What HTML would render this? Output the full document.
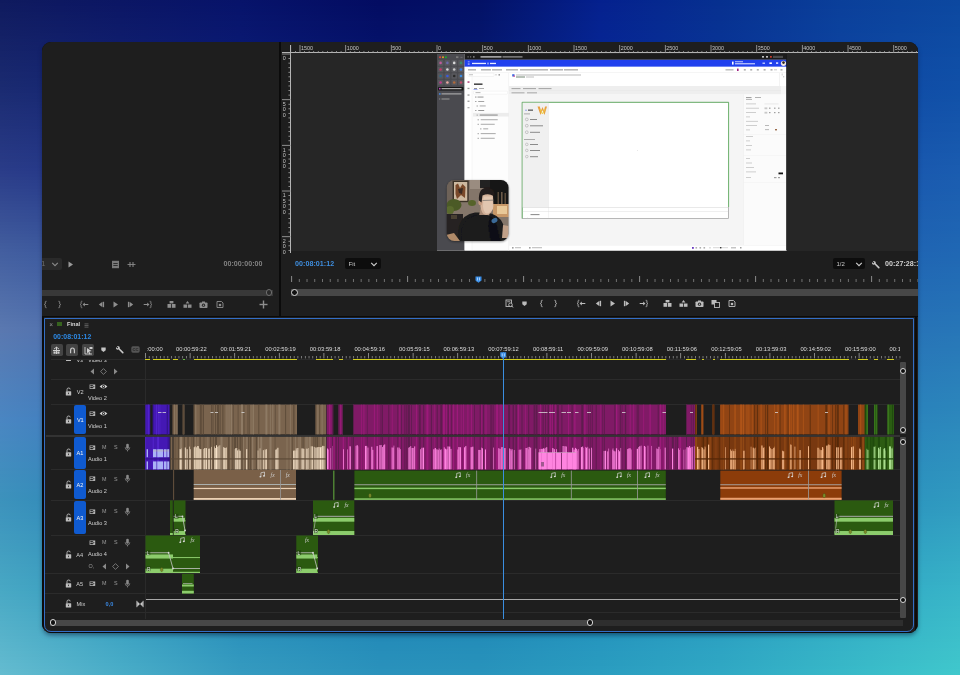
<!DOCTYPE html><html><head><meta charset="utf-8"><style>
*{box-sizing:border-box}
html,body{margin:0;padding:0}
body{width:960px;height:675px;overflow:hidden;position:relative;font-family:"Liberation Sans",sans-serif;
background:#1a4a90;}
#win{position:absolute;left:42px;top:42px;width:876px;height:591px;border-radius:9px;overflow:hidden;background:#0b0b0b;box-shadow:0 3px 5px -1px rgba(0,10,40,.5)}
#in{position:absolute;left:-42px;top:-42px;width:960px;height:675px;will-change:transform}
#in div{position:absolute}
.t{white-space:nowrap;line-height:10px;font-size:8px;color:#c8c8c8}
</style></head><body><div style="position:absolute;left:0;top:0px;width:960px;height:3px;background:linear-gradient(90deg,#0f1a5e 0px,#0d1861 60px,#0b1664 120px,#07136a 240px,#030c62 380px,#031166 480px,#04208e 600px,#063090 720px,#0a3f9a 840px,#0b449d 900px,#0c48a0 960px)"></div>
<div style="position:absolute;left:0;top:3px;width:960px;height:3px;background:linear-gradient(90deg,#101b5f 0px,#0d1862 60px,#0b1665 120px,#07136b 240px,#030c62 380px,#031267 480px,#05218e 600px,#063090 720px,#0a3f9a 840px,#0b449d 900px,#0c48a0 960px)"></div>
<div style="position:absolute;left:0;top:6px;width:960px;height:3px;background:linear-gradient(90deg,#101b60 0px,#0e1963 60px,#0c1765 120px,#07146b 240px,#030d63 380px,#031267 480px,#05218f 600px,#073091 720px,#0a3f9b 840px,#0b449e 900px,#0c49a1 960px)"></div>
<div style="position:absolute;left:0;top:9px;width:960px;height:3px;background:linear-gradient(90deg,#101c60 0px,#0e1963 60px,#0c1766 120px,#07146c 240px,#030d63 380px,#031268 480px,#05218f 600px,#073191 720px,#0b409b 840px,#0c449e 900px,#0c49a1 960px)"></div>
<div style="position:absolute;left:0;top:12px;width:960px;height:3px;background:linear-gradient(90deg,#111d61 0px,#0e1a64 60px,#0c1867 120px,#08146c 240px,#030d64 380px,#031368 480px,#05228f 600px,#073191 720px,#0b409b 840px,#0c459e 900px,#0d49a1 960px)"></div>
<div style="position:absolute;left:0;top:15px;width:960px;height:3px;background:linear-gradient(90deg,#111d61 0px,#0f1b64 60px,#0c1867 120px,#08156d 240px,#030e64 380px,#031369 480px,#052290 600px,#073192 720px,#0b409c 840px,#0c459f 900px,#0d4aa2 960px)"></div>
<div style="position:absolute;left:0;top:18px;width:960px;height:3px;background:linear-gradient(90deg,#121e62 0px,#0f1b65 60px,#0d1968 120px,#08156d 240px,#040e65 380px,#031369 480px,#052290 600px,#073192 720px,#0b419c 840px,#0c459f 900px,#0d4aa2 960px)"></div>
<div style="position:absolute;left:0;top:21px;width:960px;height:3px;background:linear-gradient(90deg,#121e63 0px,#0f1c66 60px,#0d1968 120px,#08166e 240px,#040f66 380px,#03146a 480px,#052390 600px,#073292 720px,#0b419c 840px,#0c459f 900px,#0d4aa2 960px)"></div>
<div style="position:absolute;left:0;top:24px;width:960px;height:3px;background:linear-gradient(90deg,#121f63 0px,#101c66 60px,#0d1a69 120px,#08166e 240px,#040f66 380px,#04146a 480px,#052391 600px,#073293 720px,#0b419d 840px,#0c469f 900px,#0d4aa2 960px)"></div>
<div style="position:absolute;left:0;top:27px;width:960px;height:3px;background:linear-gradient(90deg,#131f64 0px,#101d67 60px,#0e1a69 120px,#09166f 240px,#040f67 380px,#04146b 480px,#052391 600px,#073293 720px,#0b419d 840px,#0c46a0 900px,#0d4ba3 960px)"></div>
<div style="position:absolute;left:0;top:30px;width:960px;height:3px;background:linear-gradient(90deg,#132065 0px,#101d67 60px,#0e1b6a 120px,#09176f 240px,#041067 380px,#04156b 480px,#062491 600px,#083393 720px,#0b429d 840px,#0c46a0 900px,#0d4ba3 960px)"></div>
<div style="position:absolute;left:0;top:33px;width:960px;height:3px;background:linear-gradient(90deg,#132065 0px,#111e68 60px,#0e1b6b 120px,#091770 240px,#041068 380px,#04156c 480px,#062492 600px,#083394 720px,#0c429d 840px,#0d47a0 900px,#0e4ba3 960px)"></div>
<div style="position:absolute;left:0;top:36px;width:960px;height:3px;background:linear-gradient(90deg,#142166 0px,#111e69 60px,#0e1c6b 120px,#091870 240px,#041168 380px,#04166c 480px,#062492 600px,#083394 720px,#0c429e 840px,#0d47a1 900px,#0e4ca4 960px)"></div>
<div style="position:absolute;left:0;top:39px;width:960px;height:3px;background:linear-gradient(90deg,#142267 0px,#111f69 60px,#0f1c6c 120px,#091871 240px,#051169 380px,#04166d 480px,#062592 600px,#083394 720px,#0c429e 840px,#0d47a1 900px,#0e4ca4 960px)"></div>
<div style="position:absolute;left:0;top:42px;width:960px;height:3px;background:linear-gradient(90deg,#152267 0px,#121f6a 60px,#0f1d6c 120px,#0a1971 240px,#051169 380px,#04166d 480px,#062593 600px,#083495 720px,#0c439e 840px,#0d47a1 900px,#0e4ca4 960px)"></div>
<div style="position:absolute;left:0;top:45px;width:960px;height:3px;background:linear-gradient(90deg,#152368 0px,#12206a 60px,#0f1d6d 120px,#0a1972 240px,#05126a 380px,#05176e 480px,#062593 600px,#083495 720px,#0c439f 840px,#0d48a1 900px,#0e4ca4 960px)"></div>
<div style="position:absolute;left:0;top:48px;width:960px;height:3px;background:linear-gradient(90deg,#152368 0px,#12206b 60px,#0f1e6d 120px,#0a1972 240px,#05126a 380px,#05176e 480px,#062693 600px,#083495 720px,#0c439f 840px,#0d48a2 900px,#0e4da5 960px)"></div>
<div style="position:absolute;left:0;top:51px;width:960px;height:3px;background:linear-gradient(90deg,#162469 0px,#13216c 60px,#101e6e 120px,#0a1a73 240px,#05136b 380px,#05176f 480px,#062694 600px,#083596 720px,#0c439f 840px,#0d48a2 900px,#0e4da5 960px)"></div>
<div style="position:absolute;left:0;top:54px;width:960px;height:3px;background:linear-gradient(90deg,#16246a 0px,#13226c 60px,#101f6f 120px,#0a1a73 240px,#05136b 380px,#05186f 480px,#072694 600px,#093596 720px,#0c449f 840px,#0e48a2 900px,#0f4da5 960px)"></div>
<div style="position:absolute;left:0;top:57px;width:960px;height:3px;background:linear-gradient(90deg,#17256a 0px,#13226d 60px,#101f6f 120px,#0b1b74 240px,#06136c 380px,#051870 480px,#072694 600px,#093596 720px,#0d44a0 840px,#0e49a3 900px,#0f4ea6 960px)"></div>
<div style="position:absolute;left:0;top:60px;width:960px;height:3px;background:linear-gradient(90deg,#17266b 0px,#14236d 60px,#112070 120px,#0b1b74 240px,#06146c 380px,#051870 480px,#072795 600px,#093597 720px,#0d44a0 840px,#0e49a3 900px,#0f4ea6 960px)"></div>
<div style="position:absolute;left:0;top:63px;width:960px;height:3px;background:linear-gradient(90deg,#17266c 0px,#14236e 60px,#112070 120px,#0b1b75 240px,#06146d 380px,#051971 480px,#072795 600px,#093697 720px,#0d45a0 840px,#0e49a3 900px,#0f4ea6 960px)"></div>
<div style="position:absolute;left:0;top:66px;width:960px;height:3px;background:linear-gradient(90deg,#18276c 0px,#14246f 60px,#112171 120px,#0b1c75 240px,#06146d 380px,#051971 480px,#072795 600px,#093697 720px,#0d45a1 840px,#0e4aa4 900px,#0f4ea6 960px)"></div>
<div style="position:absolute;left:0;top:69px;width:960px;height:3px;background:linear-gradient(90deg,#18276d 0px,#15246f 60px,#112171 120px,#0b1c76 240px,#06156e 380px,#061972 480px,#072896 600px,#093698 720px,#0d45a1 840px,#0e4aa4 900px,#0f4fa7 960px)"></div>
<div style="position:absolute;left:0;top:72px;width:960px;height:3px;background:linear-gradient(90deg,#19286e 0px,#152570 60px,#122272 120px,#0b1d76 240px,#06156e 380px,#061a72 480px,#072896 600px,#093798 720px,#0d45a1 840px,#0e4aa4 900px,#0f4fa7 960px)"></div>
<div style="position:absolute;left:0;top:75px;width:960px;height:3px;background:linear-gradient(90deg,#19286e 0px,#152570 60px,#122272 120px,#0c1d77 240px,#06166f 380px,#061a72 480px,#072896 600px,#093798 720px,#0d46a2 840px,#0e4aa4 900px,#104fa7 960px)"></div>
<div style="position:absolute;left:0;top:78px;width:960px;height:3px;background:linear-gradient(90deg,#19296f 0px,#162671 60px,#122373 120px,#0c1e77 240px,#07166f 380px,#061b73 480px,#082997 600px,#0a3799 720px,#0e46a2 840px,#0f4ba5 900px,#104fa7 960px)"></div>
<div style="position:absolute;left:0;top:81px;width:960px;height:3px;background:linear-gradient(90deg,#1a2a6f 0px,#162672 60px,#132374 120px,#0c1e78 240px,#071670 380px,#061b73 480px,#082997 600px,#0a3799 720px,#0e46a2 840px,#0f4ba5 900px,#1050a8 960px)"></div>
<div style="position:absolute;left:0;top:84px;width:960px;height:3px;background:linear-gradient(90deg,#1a2a70 0px,#162772 60px,#132474 120px,#0c1e78 240px,#071770 380px,#061b74 480px,#082997 600px,#0a3899 720px,#0e46a2 840px,#0f4ba5 900px,#1050a8 960px)"></div>
<div style="position:absolute;left:0;top:87px;width:960px;height:3px;background:linear-gradient(90deg,#1b2b71 0px,#172773 60px,#132475 120px,#0d1f79 240px,#071771 380px,#071c75 480px,#082a98 600px,#0a389a 720px,#0e47a3 840px,#0f4ca6 900px,#1050a8 960px)"></div>
<div style="position:absolute;left:0;top:90px;width:960px;height:3px;background:linear-gradient(90deg,#1b2b72 0px,#172874 60px,#142576 120px,#0d1f7a 240px,#081872 380px,#071c75 480px,#082a98 600px,#0a389a 720px,#0e47a3 840px,#104ca6 900px,#1151a9 960px)"></div>
<div style="position:absolute;left:0;top:93px;width:960px;height:3px;background:linear-gradient(90deg,#1c2c73 0px,#182975 60px,#142576 120px,#0d207a 240px,#081872 380px,#071d76 480px,#092b98 600px,#0b399b 720px,#0f48a3 840px,#104da6 900px,#1151a9 960px)"></div>
<div style="position:absolute;left:0;top:96px;width:960px;height:3px;background:linear-gradient(90deg,#1c2d74 0px,#182975 60px,#152677 120px,#0e207b 240px,#081973 380px,#081d76 480px,#092b99 600px,#0b399b 720px,#0f48a4 840px,#104da6 900px,#1152a9 960px)"></div>
<div style="position:absolute;left:0;top:99px;width:960px;height:3px;background:linear-gradient(90deg,#1d2d74 0px,#192a76 60px,#152778 120px,#0e217c 240px,#091974 380px,#081e77 480px,#092c99 600px,#0b3a9b 720px,#0f49a4 840px,#114da7 900px,#1252a9 960px)"></div>
<div style="position:absolute;left:0;top:102px;width:960px;height:3px;background:linear-gradient(90deg,#1d2e75 0px,#1a2b77 60px,#162779 120px,#0f217c 240px,#091a74 380px,#081e78 480px,#0a2c9a 600px,#0c3a9c 720px,#1049a4 840px,#114ea7 900px,#1253aa 960px)"></div>
<div style="position:absolute;left:0;top:105px;width:960px;height:3px;background:linear-gradient(90deg,#1e2f76 0px,#1a2b78 60px,#162879 120px,#0f227d 240px,#091a75 380px,#091f78 480px,#0a2c9a 600px,#0c3b9c 720px,#1049a5 840px,#114ea7 900px,#1353aa 960px)"></div>
<div style="position:absolute;left:0;top:108px;width:960px;height:3px;background:linear-gradient(90deg,#1f2f77 0px,#1b2c79 60px,#16287a 120px,#0f227e 240px,#0a1b75 380px,#091f79 480px,#0a2d9b 600px,#0c3b9c 720px,#104aa5 840px,#124fa8 900px,#1353aa 960px)"></div>
<div style="position:absolute;left:0;top:111px;width:960px;height:3px;background:linear-gradient(90deg,#1f3078 0px,#1b2c79 60px,#17297b 120px,#10237e 240px,#0a1b76 380px,#092079 480px,#0b2d9b 600px,#0d3b9d 720px,#114aa5 840px,#124fa8 900px,#1354ab 960px)"></div>
<div style="position:absolute;left:0;top:114px;width:960px;height:3px;background:linear-gradient(90deg,#203079 0px,#1c2d7a 60px,#17297c 120px,#10247f 240px,#0a1c77 380px,#0a207a 480px,#0b2e9b 600px,#0d3c9d 720px,#114ba6 840px,#124fa8 900px,#1454ab 960px)"></div>
<div style="position:absolute;left:0;top:117px;width:960px;height:3px;background:linear-gradient(90deg,#203179 0px,#1c2e7b 60px,#182a7c 120px,#102480 240px,#0b1c77 380px,#0a207b 480px,#0b2e9c 600px,#0d3c9e 720px,#114ba6 840px,#1350a9 900px,#1455ab 960px)"></div>
<div style="position:absolute;left:0;top:120px;width:960px;height:3px;background:linear-gradient(90deg,#21327a 0px,#1d2e7c 60px,#182b7d 120px,#112580 240px,#0b1d78 380px,#0a217b 480px,#0c2f9c 600px,#0e3d9e 720px,#124ba6 840px,#1350a9 900px,#1455ab 960px)"></div>
<div style="position:absolute;left:0;top:123px;width:960px;height:3px;background:linear-gradient(90deg,#21327b 0px,#1d2f7d 60px,#192b7e 120px,#112581 240px,#0b1d79 380px,#0b217c 480px,#0c2f9d 600px,#0e3d9e 720px,#124ca7 840px,#1351a9 900px,#1556ac 960px)"></div>
<div style="position:absolute;left:0;top:126px;width:960px;height:3px;background:linear-gradient(90deg,#22337c 0px,#1e2f7d 60px,#192c7f 120px,#122682 240px,#0c1e79 380px,#0b227c 480px,#0c2f9d 600px,#0e3d9f 720px,#124ca7 840px,#1451a9 900px,#1556ac 960px)"></div>
<div style="position:absolute;left:0;top:129px;width:960px;height:3px;background:linear-gradient(90deg,#23347d 0px,#1e307e 60px,#1a2c80 120px,#122682 240px,#0c1e7a 380px,#0b227d 480px,#0d309d 600px,#0f3e9f 720px,#134da7 840px,#1451aa 900px,#1556ac 960px)"></div>
<div style="position:absolute;left:0;top:132px;width:960px;height:3px;background:linear-gradient(90deg,#23347e 0px,#1f317f 60px,#1a2d80 120px,#122783 240px,#0c1f7b 380px,#0b237e 480px,#0d309e 600px,#0f3e9f 720px,#134da8 840px,#1452aa 900px,#1657ad 960px)"></div>
<div style="position:absolute;left:0;top:135px;width:960px;height:3px;background:linear-gradient(90deg,#24357f 0px,#1f3180 60px,#1b2e81 120px,#132783 240px,#0d1f7b 380px,#0c237e 480px,#0d319e 600px,#0f3fa0 720px,#134da8 840px,#1552aa 900px,#1657ad 960px)"></div>
<div style="position:absolute;left:0;top:138px;width:960px;height:3px;background:linear-gradient(90deg,#24367f 0px,#203281 60px,#1b2e82 120px,#132884 240px,#0d207c 380px,#0c247f 480px,#0d319f 600px,#103fa0 720px,#144ea8 840px,#1553ab 900px,#1658ad 960px)"></div>
<div style="position:absolute;left:0;top:141px;width:960px;height:3px;background:linear-gradient(90deg,#253680 0px,#203281 60px,#1c2f83 120px,#132885 240px,#0d207d 380px,#0c247f 480px,#0e329f 600px,#103fa1 720px,#144ea9 840px,#1553ab 900px,#1758ad 960px)"></div>
<div style="position:absolute;left:0;top:144px;width:960px;height:3px;background:linear-gradient(90deg,#253781 0px,#213382 60px,#1c2f83 120px,#142985 240px,#0e217d 380px,#0d2580 480px,#0e329f 600px,#1040a1 720px,#144fa9 840px,#1654ab 900px,#1759ae 960px)"></div>
<div style="position:absolute;left:0;top:147px;width:960px;height:3px;background:linear-gradient(90deg,#263782 0px,#213483 60px,#1c3084 120px,#142986 240px,#0e217e 380px,#0d2580 480px,#0e32a0 600px,#1140a1 720px,#154fa9 840px,#1654ac 900px,#1759ae 960px)"></div>
<div style="position:absolute;left:0;top:150px;width:960px;height:3px;background:linear-gradient(90deg,#273883 0px,#223484 60px,#1d3185 120px,#152a87 240px,#0e227e 380px,#0d2681 480px,#0f33a0 600px,#1141a2 720px,#154faa 840px,#1654ac 900px,#1859ae 960px)"></div>
<div style="position:absolute;left:0;top:153px;width:960px;height:3px;background:linear-gradient(90deg,#273984 0px,#223585 60px,#1d3186 120px,#152a87 240px,#0f227f 380px,#0e2682 480px,#0f33a1 600px,#1141a2 720px,#1650aa 840px,#1755ac 900px,#185aaf 960px)"></div>
<div style="position:absolute;left:0;top:156px;width:960px;height:3px;background:linear-gradient(90deg,#283984 0px,#233685 60px,#1e3286 120px,#152b88 240px,#0f2380 380px,#0e2782 480px,#0f34a1 600px,#1242a3 720px,#1650aa 840px,#1755ad 900px,#195aaf 960px)"></div>
<div style="position:absolute;left:0;top:159px;width:960px;height:3px;background:linear-gradient(90deg,#283a85 0px,#233686 60px,#1e3287 120px,#162b89 240px,#0f2380 380px,#0e2783 480px,#1034a1 600px,#1242a3 720px,#1651ab 840px,#1856ad 900px,#195baf 960px)"></div>
<div style="position:absolute;left:0;top:162px;width:960px;height:3px;background:linear-gradient(90deg,#293b86 0px,#243787 60px,#1f3388 120px,#162c89 240px,#102481 380px,#0f2783 480px,#1035a2 600px,#1242a3 720px,#1751ab 840px,#1856ad 900px,#195baf 960px)"></div>
<div style="position:absolute;left:0;top:165px;width:960px;height:3px;background:linear-gradient(90deg,#293b87 0px,#243788 60px,#1f3389 120px,#172c8a 240px,#102482 380px,#0f2884 480px,#1035a2 600px,#1343a4 720px,#1751ab 840px,#1856ad 900px,#1a5cb0 960px)"></div>
<div style="position:absolute;left:0;top:168px;width:960px;height:3px;background:linear-gradient(90deg,#2a3c88 0px,#253889 60px,#203489 120px,#172d8b 240px,#102582 380px,#0f2885 480px,#1136a3 600px,#1343a4 720px,#1752ab 840px,#1957ae 900px,#1a5cb0 960px)"></div>
<div style="position:absolute;left:0;top:171px;width:960px;height:3px;background:linear-gradient(90deg,#2b3d89 0px,#263989 60px,#20358a 120px,#172e8b 240px,#112583 380px,#102985 480px,#1136a3 600px,#1344a4 720px,#1752ac 840px,#1957ae 900px,#1a5cb0 960px)"></div>
<div style="position:absolute;left:0;top:174px;width:960px;height:3px;background:linear-gradient(90deg,#2c3e8a 0px,#263a8a 60px,#21368b 120px,#182f8c 240px,#112683 380px,#102a86 480px,#1137a3 600px,#1444a5 720px,#1853ac 840px,#1958ae 900px,#1a5db0 960px)"></div>
<div style="position:absolute;left:0;top:177px;width:960px;height:3px;background:linear-gradient(90deg,#2d408a 0px,#273b8b 60px,#22378c 120px,#19308d 240px,#122784 380px,#112b86 480px,#1238a4 600px,#1445a5 720px,#1853ac 840px,#1958ae 900px,#1b5db0 960px)"></div>
<div style="position:absolute;left:0;top:180px;width:960px;height:3px;background:linear-gradient(90deg,#2e418b 0px,#283d8c 60px,#23388c 120px,#19308d 240px,#122885 380px,#112b87 480px,#1238a4 600px,#1445a5 720px,#1854ac 840px,#1a59ae 900px,#1b5eb1 960px)"></div>
<div style="position:absolute;left:0;top:183px;width:960px;height:3px;background:linear-gradient(90deg,#2e428c 0px,#293e8d 60px,#233a8d 120px,#1a318e 240px,#132985 380px,#122c87 480px,#1239a4 600px,#1446a5 720px,#1854ad 840px,#1a59af 900px,#1b5eb1 960px)"></div>
<div style="position:absolute;left:0;top:186px;width:960px;height:3px;background:linear-gradient(90deg,#2f438d 0px,#2a3f8d 60px,#243b8e 120px,#1a328e 240px,#132a86 380px,#122d88 480px,#133aa4 600px,#1547a6 720px,#1955ad 840px,#1a5aaf 900px,#1b5eb1 960px)"></div>
<div style="position:absolute;left:0;top:189px;width:960px;height:3px;background:linear-gradient(90deg,#30458e 0px,#2b408e 60px,#253c8e 120px,#1b338f 240px,#142b86 380px,#122e88 480px,#133aa5 600px,#1547a6 720px,#1955ad 840px,#1a5aaf 900px,#1b5fb1 960px)"></div>
<div style="position:absolute;left:0;top:192px;width:960px;height:3px;background:linear-gradient(90deg,#31468f 0px,#2b418f 60px,#263d8f 120px,#1c3490 240px,#142c87 380px,#132f89 480px,#143ba5 600px,#1548a6 720px,#1956ad 840px,#1a5aaf 900px,#1c5fb1 960px)"></div>
<div style="position:absolute;left:0;top:195px;width:960px;height:3px;background:linear-gradient(90deg,#32478f 0px,#2c4390 60px,#263e90 120px,#1c3590 240px,#152c88 380px,#132f89 480px,#143ca5 600px,#1648a7 720px,#1956ad 840px,#1b5baf 900px,#1c60b1 960px)"></div>
<div style="position:absolute;left:0;top:198px;width:960px;height:3px;background:linear-gradient(90deg,#334890 0px,#2d4490 60px,#273f91 120px,#1d3691 240px,#152d88 380px,#14308a 480px,#143ca6 600px,#1649a7 720px,#1a57ae 840px,#1b5baf 900px,#1c60b1 960px)"></div>
<div style="position:absolute;left:0;top:201px;width:960px;height:3px;background:linear-gradient(90deg,#344a91 0px,#2e4591 60px,#284091 120px,#1e3792 240px,#162e89 380px,#14318a 480px,#153da6 600px,#1649a7 720px,#1a57ae 840px,#1b5cb0 900px,#1c61b2 960px)"></div>
<div style="position:absolute;left:0;top:204px;width:960px;height:3px;background:linear-gradient(90deg,#354b92 0px,#2f4692 60px,#294292 120px,#1e3892 240px,#162f89 380px,#15328b 480px,#153ea6 600px,#174aa7 720px,#1a58ae 840px,#1b5cb0 900px,#1d61b2 960px)"></div>
<div style="position:absolute;left:0;top:207px;width:960px;height:3px;background:linear-gradient(90deg,#364c93 0px,#304893 60px,#294393 120px,#1f3993 240px,#17308a 380px,#15338c 480px,#153ea7 600px,#174ba8 720px,#1b58ae 840px,#1c5db0 900px,#1d61b2 960px)"></div>
<div style="position:absolute;left:0;top:210px;width:960px;height:3px;background:linear-gradient(90deg,#374e94 0px,#304994 60px,#2a4494 120px,#1f3a93 240px,#17318a 380px,#15338c 480px,#163fa7 600px,#174ba8 720px,#1b59ae 840px,#1c5db0 900px,#1d62b2 960px)"></div>
<div style="position:absolute;left:0;top:213px;width:960px;height:3px;background:linear-gradient(90deg,#384f95 0px,#314a94 60px,#2b4594 120px,#203b94 240px,#18328b 380px,#16348d 480px,#1640a7 600px,#184ca8 720px,#1b59af 840px,#1c5eb0 900px,#1d62b2 960px)"></div>
<div style="position:absolute;left:0;top:216px;width:960px;height:3px;background:linear-gradient(90deg,#395095 0px,#324b95 60px,#2c4695 120px,#213c95 240px,#18338c 380px,#16358d 480px,#1640a8 600px,#184ca8 720px,#1b59af 840px,#1c5eb0 900px,#1d63b2 960px)"></div>
<div style="position:absolute;left:0;top:219px;width:960px;height:3px;background:linear-gradient(90deg,#395196 0px,#334c96 60px,#2c4796 120px,#213d95 240px,#19338c 380px,#17368e 480px,#1741a8 600px,#184da9 720px,#1c5aaf 840px,#1d5fb1 900px,#1e63b2 960px)"></div>
<div style="position:absolute;left:0;top:222px;width:960px;height:3px;background:linear-gradient(90deg,#3a5397 0px,#344e97 60px,#2d4897 120px,#223e96 240px,#19348d 380px,#17368e 480px,#1742a8 600px,#184da9 720px,#1c5aaf 840px,#1d5fb1 900px,#1e64b3 960px)"></div>
<div style="position:absolute;left:0;top:225px;width:960px;height:3px;background:linear-gradient(90deg,#3b5498 0px,#354f98 60px,#2e4a97 120px,#223f97 240px,#1a358d 380px,#18378f 480px,#1742a9 600px,#194ea9 720px,#1c5baf 840px,#1d5fb1 900px,#1e64b3 960px)"></div>
<div style="position:absolute;left:0;top:228px;width:960px;height:3px;background:linear-gradient(90deg,#3c5599 0px,#355098 60px,#2f4b98 120px,#234097 240px,#1a368e 380px,#18388f 480px,#1843a9 600px,#194faa 720px,#1c5bb0 840px,#1d60b1 900px,#1e64b3 960px)"></div>
<div style="position:absolute;left:0;top:231px;width:960px;height:3px;background:linear-gradient(90deg,#3d569a 0px,#365199 60px,#2f4c99 120px,#244198 240px,#1b378f 380px,#183990 480px,#1844a9 600px,#194faa 720px,#1d5cb0 840px,#1d60b1 900px,#1e65b3 960px)"></div>
<div style="position:absolute;left:0;top:234px;width:960px;height:3px;background:linear-gradient(90deg,#3e589a 0px,#37529a 60px,#304d99 120px,#244298 240px,#1b388f 380px,#193a90 480px,#1944aa 600px,#1a50aa 720px,#1d5cb0 840px,#1e61b1 900px,#1f65b3 960px)"></div>
<div style="position:absolute;left:0;top:237px;width:960px;height:3px;background:linear-gradient(90deg,#3f599b 0px,#38549b 60px,#314e9a 120px,#254399 240px,#1c3990 380px,#193a91 480px,#1945aa 600px,#1a50aa 720px,#1d5db0 840px,#1e61b2 900px,#1f66b3 960px)"></div>
<div style="position:absolute;left:0;top:240px;width:960px;height:3px;background:linear-gradient(90deg,#405a9c 0px,#39559c 60px,#324f9b 120px,#25449a 240px,#1c3a90 380px,#1a3b91 480px,#1946aa 600px,#1a51ab 720px,#1d5db0 840px,#1e62b2 900px,#1f66b3 960px)"></div>
<div style="position:absolute;left:0;top:243px;width:960px;height:3px;background:linear-gradient(90deg,#415c9d 0px,#3a569c 60px,#32509c 120px,#26459a 240px,#1d3a91 380px,#1a3c92 480px,#1a46aa 600px,#1b51ab 720px,#1e5eb1 840px,#1e62b2 900px,#1f67b4 960px)"></div>
<div style="position:absolute;left:0;top:246px;width:960px;height:3px;background:linear-gradient(90deg,#425d9e 0px,#3a579d 60px,#33529c 120px,#27469b 240px,#1d3b92 380px,#1b3d92 480px,#1a47ab 600px,#1b52ab 720px,#1e5eb1 840px,#1f63b2 900px,#1f67b4 960px)"></div>
<div style="position:absolute;left:0;top:249px;width:960px;height:3px;background:linear-gradient(90deg,#435e9f 0px,#3b589e 60px,#34539d 120px,#27479c 240px,#1e3c92 380px,#1b3e93 480px,#1a48ab 600px,#1b52ab 720px,#1e5fb1 840px,#1f63b2 900px,#2067b4 960px)"></div>
<div style="position:absolute;left:0;top:252px;width:960px;height:3px;background:linear-gradient(90deg,#445fa0 0px,#3c5a9f 60px,#35549e 120px,#28489c 240px,#1e3d93 380px,#1b3e93 480px,#1b48ab 600px,#1c53ac 720px,#1e5fb1 840px,#1f64b3 900px,#2068b4 960px)"></div>
<div style="position:absolute;left:0;top:255px;width:960px;height:3px;background:linear-gradient(90deg,#4460a0 0px,#3d5b9f 60px,#35559f 120px,#28499d 240px,#1f3e93 380px,#1c3f94 480px,#1b49ac 600px,#1c54ac 720px,#1f60b1 840px,#1f64b3 900px,#2068b4 960px)"></div>
<div style="position:absolute;left:0;top:258px;width:960px;height:3px;background:linear-gradient(90deg,#4561a1 0px,#3e5ca0 60px,#36569f 120px,#294a9d 240px,#1f3f94 380px,#1c4094 480px,#1c4aac 600px,#1c54ac 720px,#1f60b1 840px,#2065b3 900px,#2069b4 960px)"></div>
<div style="position:absolute;left:0;top:261px;width:960px;height:3px;background:linear-gradient(90deg,#4662a2 0px,#3e5da1 60px,#3757a0 120px,#2a4b9e 240px,#203f94 380px,#1d4095 480px,#1c4aac 600px,#1d55ac 720px,#1f61b2 840px,#2065b3 900px,#2169b4 960px)"></div>
<div style="position:absolute;left:0;top:264px;width:960px;height:3px;background:linear-gradient(90deg,#4763a2 0px,#3f5da1 60px,#3758a0 120px,#2a4b9e 240px,#204095 380px,#1d4195 480px,#1c4bac 600px,#1d55ad 720px,#2062b2 840px,#2066b3 900px,#216ab4 960px)"></div>
<div style="position:absolute;left:0;top:267px;width:960px;height:3px;background:linear-gradient(90deg,#4864a3 0px,#405ea2 60px,#3858a1 120px,#2b4c9f 240px,#214195 380px,#1e4296 480px,#1d4cad 600px,#1d56ad 720px,#2062b2 840px,#2166b3 900px,#216bb5 960px)"></div>
<div style="position:absolute;left:0;top:270px;width:960px;height:3px;background:linear-gradient(90deg,#4965a4 0px,#415fa2 60px,#3959a1 120px,#2b4d9f 240px,#214296 380px,#1e4396 480px,#1d4cad 600px,#1e57ad 720px,#2063b2 840px,#2167b3 900px,#226bb5 960px)"></div>
<div style="position:absolute;left:0;top:273px;width:960px;height:3px;background:linear-gradient(90deg,#4a66a4 0px,#4260a3 60px,#3a5aa2 120px,#2c4ea0 240px,#224296 380px,#1f4396 480px,#1d4dad 600px,#1e57ad 720px,#2163b2 840px,#2167b4 900px,#226cb5 960px)"></div>
<div style="position:absolute;left:0;top:276px;width:960px;height:3px;background:linear-gradient(90deg,#4b67a5 0px,#4261a4 60px,#3a5ba2 120px,#2d4ea0 240px,#224396 380px,#1f4497 480px,#1e4dad 600px,#1e58ae 720px,#2164b3 840px,#2168b4 900px,#226cb5 960px)"></div>
<div style="position:absolute;left:0;top:279px;width:960px;height:3px;background:linear-gradient(90deg,#4b68a5 0px,#4362a4 60px,#3b5ca3 120px,#2d4fa1 240px,#234497 380px,#1f4597 480px,#1e4eae 600px,#1f58ae 720px,#2164b3 840px,#2269b4 900px,#226db5 960px)"></div>
<div style="position:absolute;left:0;top:282px;width:960px;height:3px;background:linear-gradient(90deg,#4c69a6 0px,#4463a5 60px,#3c5da4 120px,#2e50a1 240px,#234597 380px,#204598 480px,#1f4fae 600px,#1f59ae 720px,#2165b3 840px,#2269b4 900px,#236db5 960px)"></div>
<div style="position:absolute;left:0;top:285px;width:960px;height:3px;background:linear-gradient(90deg,#4d6aa7 0px,#4564a5 60px,#3d5ea4 120px,#2e51a1 240px,#244598 380px,#204698 480px,#1f4fae 600px,#1f5aae 720px,#2265b3 840px,#226ab4 900px,#236eb5 960px)"></div>
<div style="position:absolute;left:0;top:288px;width:960px;height:3px;background:linear-gradient(90deg,#4e6ba7 0px,#4665a6 60px,#3d5fa5 120px,#2f52a2 240px,#244698 380px,#214798 480px,#1f50ae 600px,#205aae 720px,#2266b3 840px,#236ab4 900px,#236eb6 960px)"></div>
<div style="position:absolute;left:0;top:291px;width:960px;height:3px;background:linear-gradient(90deg,#4f6ca8 0px,#4766a7 60px,#3e5fa5 120px,#3052a2 240px,#254799 380px,#214799 480px,#2051af 600px,#205baf 720px,#2267b3 840px,#236bb5 900px,#246fb6 960px)"></div>
<div style="position:absolute;left:0;top:294px;width:960px;height:3px;background:linear-gradient(90deg,#506da9 0px,#4767a7 60px,#3f60a6 120px,#3053a3 240px,#254899 380px,#224899 480px,#2051af 600px,#205baf 720px,#2367b4 840px,#236bb5 900px,#2470b6 960px)"></div>
<div style="position:absolute;left:0;top:297px;width:960px;height:3px;background:linear-gradient(90deg,#516ea9 0px,#4868a8 60px,#3f61a6 120px,#3154a3 240px,#26489a 380px,#22499a 480px,#2152af 600px,#215caf 720px,#2368b4 840px,#246cb5 900px,#2470b6 960px)"></div>
<div style="position:absolute;left:0;top:300px;width:960px;height:3px;background:linear-gradient(90deg,#526faa 0px,#4969a8 60px,#4062a7 120px,#3155a4 240px,#26499a 380px,#234a9a 480px,#2153af 600px,#215daf 720px,#2368b4 840px,#246db5 900px,#2471b6 960px)"></div>
<div style="position:absolute;left:0;top:303px;width:960px;height:3px;background:linear-gradient(90deg,#5370ab 0px,#4a69a9 60px,#4163a7 120px,#3256a4 240px,#274a9b 380px,#234a9b 480px,#2153b0 600px,#225db0 720px,#2469b4 840px,#246db5 900px,#2571b6 960px)"></div>
<div style="position:absolute;left:0;top:306px;width:960px;height:3px;background:linear-gradient(90deg,#5371ab 0px,#4b6aaa 60px,#4264a8 120px,#3356a5 240px,#274b9b 380px,#244b9b 480px,#2254b0 600px,#225eb0 720px,#2469b4 840px,#246eb5 900px,#2572b6 960px)"></div>
<div style="position:absolute;left:0;top:309px;width:960px;height:3px;background:linear-gradient(90deg,#5472ac 0px,#4b6baa 60px,#4265a9 120px,#3357a5 240px,#284b9c 380px,#244c9b 480px,#2255b0 600px,#225eb0 720px,#246ab4 840px,#256eb6 900px,#2572b7 960px)"></div>
<div style="position:absolute;left:0;top:312px;width:960px;height:3px;background:linear-gradient(90deg,#5573ac 0px,#4c6cab 60px,#4366a9 120px,#3458a6 240px,#284c9c 380px,#244c9c 480px,#2355b0 600px,#235fb0 720px,#256bb5 840px,#256fb6 900px,#2673b7 960px)"></div>
<div style="position:absolute;left:0;top:315px;width:960px;height:3px;background:linear-gradient(90deg,#5674ad 0px,#4d6dab 60px,#4467aa 120px,#3459a6 240px,#294d9c 380px,#254d9c 480px,#2356b0 600px,#2360b0 720px,#256bb5 840px,#256fb6 900px,#2674b7 960px)"></div>
<div style="position:absolute;left:0;top:318px;width:960px;height:3px;background:linear-gradient(90deg,#5775ae 0px,#4e6eac 60px,#4567aa 120px,#3559a7 240px,#294e9d 380px,#254e9d 480px,#2356b1 600px,#2360b1 720px,#256cb5 840px,#2670b6 900px,#2674b7 960px)"></div>
<div style="position:absolute;left:0;top:321px;width:960px;height:3px;background:linear-gradient(90deg,#5876ae 0px,#4f6fad 60px,#4568ab 120px,#365aa7 240px,#2a4e9d 380px,#264e9d 480px,#2457b1 600px,#2461b1 720px,#266cb5 840px,#2671b6 900px,#2675b7 960px)"></div>
<div style="position:absolute;left:0;top:324px;width:960px;height:3px;background:linear-gradient(90deg,#5977af 0px,#4f70ad 60px,#4669ab 120px,#365ba8 240px,#2a4f9e 380px,#264f9e 480px,#2458b1 600px,#2461b1 720px,#266db5 840px,#2671b6 900px,#2775b7 960px)"></div>
<div style="position:absolute;left:0;top:327px;width:960px;height:3px;background:linear-gradient(90deg,#5a78b0 0px,#5071ae 60px,#476aac 120px,#375ca8 240px,#2b509e 380px,#27509e 480px,#2558b1 600px,#2462b1 720px,#266db5 840px,#2772b6 900px,#2776b7 960px)"></div>
<div style="position:absolute;left:0;top:330px;width:960px;height:3px;background:linear-gradient(90deg,#5a78b0 0px,#5072ae 60px,#476bac 120px,#375ca8 240px,#2b509f 380px,#27509e 480px,#2559b2 600px,#2462b2 720px,#266eb6 840px,#2772b7 900px,#2776b8 960px)"></div>
<div style="position:absolute;left:0;top:333px;width:960px;height:3px;background:linear-gradient(90deg,#5979b1 0px,#5072af 60px,#466bad 120px,#365da9 240px,#2b519f 380px,#26519f 480px,#2459b2 600px,#2463b2 720px,#266eb6 840px,#2773b7 900px,#2777b8 960px)"></div>
<div style="position:absolute;left:0;top:336px;width:960px;height:3px;background:linear-gradient(90deg,#5979b2 0px,#4f72af 60px,#466cad 120px,#365da9 240px,#2a51a0 380px,#26519f 480px,#245ab2 600px,#2463b2 720px,#276fb6 840px,#2773b7 900px,#2878b8 960px)"></div>
<div style="position:absolute;left:0;top:339px;width:960px;height:3px;background:linear-gradient(90deg,#587ab2 0px,#4f73b0 60px,#456cae 120px,#355eaa 240px,#2a52a0 380px,#2652a0 480px,#245ab2 600px,#2464b2 720px,#276fb6 840px,#2774b7 900px,#2878b8 960px)"></div>
<div style="position:absolute;left:0;top:342px;width:960px;height:3px;background:linear-gradient(90deg,#587ab3 0px,#4e73b1 60px,#456dae 120px,#355eaa 240px,#2a52a0 380px,#2652a0 480px,#245bb3 600px,#2464b2 720px,#2770b6 840px,#2774b7 900px,#2879b8 960px)"></div>
<div style="position:absolute;left:0;top:345px;width:960px;height:3px;background:linear-gradient(90deg,#577bb3 0px,#4e74b1 60px,#446daf 120px,#345fab 240px,#2953a1 380px,#2553a0 480px,#245bb3 600px,#2465b3 720px,#2771b6 840px,#2875b7 900px,#2879b8 960px)"></div>
<div style="position:absolute;left:0;top:348px;width:960px;height:3px;background:linear-gradient(90deg,#577bb4 0px,#4d74b2 60px,#446eb0 120px,#345fab 240px,#2953a1 380px,#2553a1 480px,#245cb3 600px,#2465b3 720px,#2771b7 840px,#2876b8 900px,#287ab8 960px)"></div>
<div style="position:absolute;left:0;top:351px;width:960px;height:3px;background:linear-gradient(90deg,#567cb4 0px,#4d75b2 60px,#436eb0 120px,#335fac 240px,#2854a2 380px,#2554a1 480px,#235cb3 600px,#2466b3 720px,#2772b7 840px,#2876b8 900px,#297ab9 960px)"></div>
<div style="position:absolute;left:0;top:354px;width:960px;height:3px;background:linear-gradient(90deg,#557cb5 0px,#4c75b3 60px,#436eb1 120px,#3360ac 240px,#2854a2 380px,#2454a2 480px,#235db3 600px,#2466b3 720px,#2772b7 840px,#2877b8 900px,#297bb9 960px)"></div>
<div style="position:absolute;left:0;top:357px;width:960px;height:3px;background:linear-gradient(90deg,#557cb6 0px,#4c76b3 60px,#426fb1 120px,#3260ac 240px,#2754a3 380px,#2455a2 480px,#235db4 600px,#2467b4 720px,#2773b7 840px,#2877b8 900px,#297cb9 960px)"></div>
<div style="position:absolute;left:0;top:360px;width:960px;height:3px;background:linear-gradient(90deg,#547db6 0px,#4b76b4 60px,#426fb2 120px,#3261ad 240px,#2755a3 380px,#2455a2 480px,#235eb4 600px,#2467b4 720px,#2773b7 840px,#2878b8 900px,#297cb9 960px)"></div>
<div style="position:absolute;left:0;top:363px;width:960px;height:3px;background:linear-gradient(90deg,#547db7 0px,#4a77b5 60px,#4170b2 120px,#3261ad 240px,#2755a4 380px,#2356a3 480px,#225eb4 600px,#2468b4 720px,#2774b8 840px,#2878b8 900px,#297db9 960px)"></div>
<div style="position:absolute;left:0;top:366px;width:960px;height:3px;background:linear-gradient(90deg,#537eb7 0px,#4a77b5 60px,#4170b3 120px,#3161ae 240px,#2656a4 380px,#2356a3 480px,#225fb4 600px,#2468b4 720px,#2774b8 840px,#2879b9 900px,#297eb9 960px)"></div>
<div style="position:absolute;left:0;top:369px;width:960px;height:3px;background:linear-gradient(90deg,#537eb8 0px,#4978b6 60px,#4071b3 120px,#3162ae 240px,#2656a4 380px,#2357a4 480px,#225fb5 600px,#2369b4 720px,#2775b8 840px,#2879b9 900px,#2a7eba 960px)"></div>
<div style="position:absolute;left:0;top:372px;width:960px;height:3px;background:linear-gradient(90deg,#527fb9 0px,#4978b6 60px,#3f71b4 120px,#3062af 240px,#2557a5 380px,#2257a4 480px,#2260b5 600px,#2369b5 720px,#2775b8 840px,#287ab9 900px,#2a7fba 960px)"></div>
<div style="position:absolute;left:0;top:375px;width:960px;height:3px;background:linear-gradient(90deg,#527fb9 0px,#4878b7 60px,#3f72b4 120px,#3063af 240px,#2557a5 380px,#2257a4 480px,#2260b5 600px,#236ab5 720px,#2776b8 840px,#287bb9 900px,#2a7fba 960px)"></div>
<div style="position:absolute;left:0;top:378px;width:960px;height:3px;background:linear-gradient(90deg,#5180ba 0px,#4879b7 60px,#3e72b5 120px,#2f63b0 240px,#2558a6 380px,#2258a5 480px,#2161b5 600px,#236ab5 720px,#2776b8 840px,#287bb9 900px,#2a80ba 960px)"></div>
<div style="position:absolute;left:0;top:381px;width:960px;height:3px;background:linear-gradient(90deg,#5180bb 0px,#4779b8 60px,#3e73b5 120px,#2f64b0 240px,#2458a6 380px,#2158a5 480px,#2161b6 600px,#236bb5 720px,#2777b9 840px,#297cb9 900px,#2a80ba 960px)"></div>
<div style="position:absolute;left:0;top:384px;width:960px;height:3px;background:linear-gradient(90deg,#5081bb 0px,#477ab8 60px,#3d73b6 120px,#2e64b0 240px,#2459a7 380px,#2159a6 480px,#2162b6 600px,#236bb6 720px,#2778b9 840px,#297cba 900px,#2a81ba 960px)"></div>
<div style="position:absolute;left:0;top:387px;width:960px;height:3px;background:linear-gradient(90deg,#5081bc 0px,#467ab9 60px,#3d74b6 120px,#2e64b1 240px,#2359a7 380px,#2159a6 480px,#2162b6 600px,#236cb6 720px,#2778b9 840px,#297dba 900px,#2a82ba 960px)"></div>
<div style="position:absolute;left:0;top:390px;width:960px;height:3px;background:linear-gradient(90deg,#4f82bc 0px,#467bba 60px,#3c74b7 120px,#2d65b1 240px,#2359a8 380px,#205aa6 480px,#2063b6 600px,#236cb6 720px,#2779b9 840px,#297dba 900px,#2b82bb 960px)"></div>
<div style="position:absolute;left:0;top:393px;width:960px;height:3px;background:linear-gradient(90deg,#4f82bd 0px,#457bba 60px,#3c74b7 120px,#2d65b2 240px,#235aa8 380px,#205aa7 480px,#2063b6 600px,#236db6 720px,#2779b9 840px,#297eba 900px,#2b83bb 960px)"></div>
<div style="position:absolute;left:0;top:396px;width:960px;height:3px;background:linear-gradient(90deg,#4e82be 0px,#457cbb 60px,#3b75b8 120px,#2c66b2 240px,#225aa8 380px,#205ba7 480px,#2063b7 600px,#236db6 720px,#277ab9 840px,#297fba 900px,#2b83bb 960px)"></div>
<div style="position:absolute;left:0;top:399px;width:960px;height:3px;background:linear-gradient(90deg,#4d83be 0px,#447cbb 60px,#3b75b8 120px,#2c66b3 240px,#225ba9 380px,#1f5ba8 480px,#2064b7 600px,#226eb7 720px,#277aba 840px,#297fba 900px,#2b84bb 960px)"></div>
<div style="position:absolute;left:0;top:402px;width:960px;height:3px;background:linear-gradient(90deg,#4d83bf 0px,#447dbc 60px,#3a76b9 120px,#2b67b3 240px,#215ba9 380px,#1f5ca8 480px,#2064b7 600px,#226eb7 720px,#277bba 840px,#2980bb 900px,#2b85bb 960px)"></div>
<div style="position:absolute;left:0;top:405px;width:960px;height:3px;background:linear-gradient(90deg,#4c84bf 0px,#437dbc 60px,#3a76b9 120px,#2b67b3 240px,#215caa 380px,#1f5ca9 480px,#1f65b7 600px,#226fb7 720px,#277bba 840px,#2980bb 900px,#2b85bb 960px)"></div>
<div style="position:absolute;left:0;top:408px;width:960px;height:3px;background:linear-gradient(90deg,#4c84c0 0px,#437ebd 60px,#3977ba 120px,#2a67b4 240px,#215caa 380px,#1e5da9 480px,#1f65b8 600px,#226fb7 720px,#277cba 840px,#2981bb 900px,#2b86bb 960px)"></div>
<div style="position:absolute;left:0;top:411px;width:960px;height:3px;background:linear-gradient(90deg,#4b85c0 0px,#427ebd 60px,#3977ba 120px,#2a68b4 240px,#205dab 380px,#1e5da9 480px,#1f66b8 600px,#2270b8 720px,#277cba 840px,#2981bb 900px,#2c86bc 960px)"></div>
<div style="position:absolute;left:0;top:414px;width:960px;height:3px;background:linear-gradient(90deg,#4b85c1 0px,#417ebe 60px,#3878bb 120px,#2968b5 240px,#205dab 380px,#1e5eaa 480px,#1f66b8 600px,#2270b8 720px,#277dbb 840px,#2a82bb 900px,#2c87bc 960px)"></div>
<div style="position:absolute;left:0;top:417px;width:960px;height:3px;background:linear-gradient(90deg,#4a86c2 0px,#417fbf 60px,#3878bb 120px,#2969b5 240px,#1f5eab 380px,#1d5eaa 480px,#1e67b8 600px,#2271b8 720px,#277dbb 840px,#2a83bb 900px,#2c88bc 960px)"></div>
<div style="position:absolute;left:0;top:420px;width:960px;height:3px;background:linear-gradient(90deg,#4a86c2 0px,#407fbf 60px,#3779bc 120px,#2869b5 240px,#1f5eac 380px,#1d5faa 480px,#1e67b8 600px,#2271b8 720px,#277ebb 840px,#2a83bb 900px,#2c88bc 960px)"></div>
<div style="position:absolute;left:0;top:423px;width:960px;height:3px;background:linear-gradient(90deg,#4987c2 0px,#4080bf 60px,#3779bb 120px,#286ab5 240px,#1f5fac 380px,#1d5faa 480px,#1e68b8 600px,#2272b8 720px,#277fbb 840px,#2a84bc 900px,#2c89bc 960px)"></div>
<div style="position:absolute;left:0;top:426px;width:960px;height:3px;background:linear-gradient(90deg,#4987c1 0px,#3f80be 60px,#3679bb 120px,#276ab5 240px,#1e5fac 380px,#1d60aa 480px,#1e68b8 600px,#2273b8 720px,#277fbb 840px,#2a84bc 900px,#2c8abc 960px)"></div>
<div style="position:absolute;left:0;top:429px;width:960px;height:3px;background:linear-gradient(90deg,#4888c1 0px,#3f81be 60px,#357abb 120px,#276ab5 240px,#1e60ab 380px,#1c60aa 480px,#1e69b8 600px,#2173b8 720px,#2780bb 840px,#2a85bc 900px,#2d8abd 960px)"></div>
<div style="position:absolute;left:0;top:432px;width:960px;height:3px;background:linear-gradient(90deg,#4888c1 0px,#3e81be 60px,#357abb 120px,#266bb5 240px,#1d60ab 380px,#1c61aa 480px,#1d69b8 600px,#2174b8 720px,#2780bb 840px,#2a86bc 900px,#2d8bbd 960px)"></div>
<div style="position:absolute;left:0;top:435px;width:960px;height:3px;background:linear-gradient(90deg,#4788c1 0px,#3e82be 60px,#347bbb 120px,#266bb4 240px,#1d60ab 380px,#1c61aa 480px,#1d6ab8 600px,#2174b8 720px,#2781bb 840px,#2a86bc 900px,#2d8cbd 960px)"></div>
<div style="position:absolute;left:0;top:438px;width:960px;height:3px;background:linear-gradient(90deg,#4789c1 0px,#3d82bd 60px,#347bba 120px,#256cb4 240px,#1d61ab 380px,#1b62aa 480px,#1d6ab8 600px,#2175b8 720px,#2782bb 840px,#2a87bc 900px,#2d8cbd 960px)"></div>
<div style="position:absolute;left:0;top:441px;width:960px;height:3px;background:linear-gradient(90deg,#4689c0 0px,#3d83bd 60px,#337cba 120px,#256cb4 240px,#1c61ab 380px,#1b62aa 480px,#1d6bb8 600px,#2175b8 720px,#2782bb 840px,#2a88bc 900px,#2d8dbd 960px)"></div>
<div style="position:absolute;left:0;top:444px;width:960px;height:3px;background:linear-gradient(90deg,#468ac0 0px,#3c83bd 60px,#337cba 120px,#246db4 240px,#1c62ab 380px,#1b63aa 480px,#1c6cb8 600px,#2176b8 720px,#2783bb 840px,#2a88bc 900px,#2d8ebd 960px)"></div>
<div style="position:absolute;left:0;top:447px;width:960px;height:3px;background:linear-gradient(90deg,#458ac0 0px,#3c83bd 60px,#327dba 120px,#246db4 240px,#1b62ab 380px,#1a63aa 480px,#1c6cb8 600px,#2176b8 720px,#2783bb 840px,#2a89bc 900px,#2d8ebd 960px)"></div>
<div style="position:absolute;left:0;top:450px;width:960px;height:3px;background:linear-gradient(90deg,#448bc0 0px,#3b84bd 60px,#327dba 120px,#236db4 240px,#1b63ab 380px,#1a64aa 480px,#1c6db8 600px,#2177b8 720px,#2884bc 840px,#2b8abd 900px,#2e8fbe 960px)"></div>
<div style="position:absolute;left:0;top:453px;width:960px;height:3px;background:linear-gradient(90deg,#448bbf 0px,#3b84bc 60px,#317eb9 120px,#236eb3 240px,#1b63ab 380px,#1a64aa 480px,#1c6db7 600px,#2178b8 720px,#2885bc 840px,#2b8abd 900px,#2e90be 960px)"></div>
<div style="position:absolute;left:0;top:456px;width:960px;height:3px;background:linear-gradient(90deg,#438cbf 0px,#3a85bc 60px,#317eb9 120px,#226eb3 240px,#1a64ab 380px,#1965aa 480px,#1c6eb7 600px,#2178b8 720px,#2885bc 840px,#2b8bbd 900px,#2e90be 960px)"></div>
<div style="position:absolute;left:0;top:459px;width:960px;height:3px;background:linear-gradient(90deg,#438cbf 0px,#3a85bc 60px,#307eb9 120px,#226fb3 240px,#1a64ab 380px,#1965aa 480px,#1b6eb7 600px,#2079b8 720px,#2886bc 840px,#2b8bbd 900px,#2e91be 960px)"></div>
<div style="position:absolute;left:0;top:462px;width:960px;height:3px;background:linear-gradient(90deg,#428dbf 0px,#3986bc 60px,#307fb9 120px,#216fb3 240px,#1965ab 380px,#1966aa 480px,#1b6fb7 600px,#2079b8 720px,#2886bc 840px,#2b8cbd 900px,#2e92be 960px)"></div>
<div style="position:absolute;left:0;top:465px;width:960px;height:3px;background:linear-gradient(90deg,#428dbf 0px,#3986bc 60px,#2f7fb9 120px,#2170b3 240px,#1965ab 380px,#1866aa 480px,#1b6fb7 600px,#207ab8 720px,#2887bc 840px,#2b8dbd 900px,#2e92be 960px)"></div>
<div style="position:absolute;left:0;top:468px;width:960px;height:3px;background:linear-gradient(90deg,#418dbe 0px,#3887bb 60px,#2f80b8 120px,#2070b3 240px,#1966ab 380px,#1867aa 480px,#1b70b7 600px,#207ab8 720px,#2888bc 840px,#2b8dbd 900px,#2e93be 960px)"></div>
<div style="position:absolute;left:0;top:471px;width:960px;height:3px;background:linear-gradient(90deg,#418ebe 0px,#3887bb 60px,#2e80b8 120px,#2070b2 240px,#1866ab 380px,#1867aa 480px,#1a70b7 600px,#207bb8 720px,#2888bc 840px,#2b8ebd 900px,#2f94bf 960px)"></div>
<div style="position:absolute;left:0;top:474px;width:960px;height:3px;background:linear-gradient(90deg,#408ebe 0px,#3788bb 60px,#2e81b8 120px,#1f71b2 240px,#1867ab 380px,#1768aa 480px,#1a71b7 600px,#207bb8 720px,#2889bc 840px,#2b8fbd 900px,#2f94bf 960px)"></div>
<div style="position:absolute;left:0;top:477px;width:960px;height:3px;background:linear-gradient(90deg,#408fbe 0px,#3688bb 60px,#2d81b8 120px,#1f71b2 240px,#1767ab 380px,#1768aa 480px,#1a71b7 600px,#207cb8 720px,#2889bc 840px,#2b8fbe 900px,#2f95bf 960px)"></div>
<div style="position:absolute;left:0;top:480px;width:960px;height:3px;background:linear-gradient(90deg,#3f8fbd 0px,#3688ba 60px,#2d82b8 120px,#1e72b2 240px,#1768aa 380px,#1769aa 480px,#1a72b7 600px,#207cb8 720px,#288abc 840px,#2b90be 900px,#2f96bf 960px)"></div>
<div style="position:absolute;left:0;top:483px;width:960px;height:3px;background:linear-gradient(90deg,#3f90bd 0px,#3589ba 60px,#2c82b7 120px,#1e72b2 240px,#1768aa 380px,#1669aa 480px,#1a72b7 600px,#207db8 720px,#288bbc 840px,#2b91be 900px,#2f97bf 960px)"></div>
<div style="position:absolute;left:0;top:486px;width:960px;height:3px;background:linear-gradient(90deg,#3e90bd 0px,#3589ba 60px,#2c83b7 120px,#1d73b1 240px,#1669aa 380px,#166aaa 480px,#1973b7 600px,#207eb8 720px,#288bbc 840px,#2c91be 900px,#2f97bf 960px)"></div>
<div style="position:absolute;left:0;top:489px;width:960px;height:3px;background:linear-gradient(90deg,#3e91bd 0px,#348aba 60px,#2b83b7 120px,#1d73b1 240px,#1669aa 380px,#166aaa 480px,#1973b7 600px,#1f7eb8 720px,#288cbd 840px,#2c92be 900px,#3098c0 960px)"></div>
<div style="position:absolute;left:0;top:492px;width:960px;height:3px;background:linear-gradient(90deg,#3d91bc 0px,#348aba 60px,#2b83b7 120px,#1c73b1 240px,#156aaa 380px,#156baa 480px,#1974b6 600px,#1f7fb8 720px,#288cbd 840px,#2c92be 900px,#3099c0 960px)"></div>
<div style="position:absolute;left:0;top:495px;width:960px;height:3px;background:linear-gradient(90deg,#3d91bc 0px,#338bb9 60px,#2a84b7 120px,#1c74b1 240px,#156aaa 380px,#156baa 480px,#1974b6 600px,#1f7fb8 720px,#288dbd 840px,#2c93be 900px,#3099c0 960px)"></div>
<div style="position:absolute;left:0;top:498px;width:960px;height:3px;background:linear-gradient(90deg,#3c92bc 0px,#338bb9 60px,#2a84b6 120px,#1b74b1 240px,#156baa 380px,#156caa 480px,#1975b6 600px,#1f80b8 720px,#288ebd 840px,#2c94be 900px,#309ac0 960px)"></div>
<div style="position:absolute;left:0;top:501px;width:960px;height:3px;background:linear-gradient(90deg,#3c93bc 0px,#338cb9 60px,#2a85b7 120px,#1b75b1 240px,#156baa 380px,#156caa 480px,#1976b6 600px,#1f81b9 720px,#288ebd 840px,#2c95bf 900px,#309bc0 960px)"></div>
<div style="position:absolute;left:0;top:504px;width:960px;height:3px;background:linear-gradient(90deg,#3d93bc 0px,#338dba 60px,#2a86b7 120px,#1c76b1 240px,#156cab 380px,#156dab 480px,#1976b7 600px,#2081b9 720px,#288fbd 840px,#2c95bf 900px,#309cc0 960px)"></div>
<div style="position:absolute;left:0;top:507px;width:960px;height:3px;background:linear-gradient(90deg,#3d94bd 0px,#348dba 60px,#2a86b7 120px,#1c76b1 240px,#156dab 380px,#156eab 480px,#1977b7 600px,#2082b9 720px,#2990bd 840px,#2d96bf 900px,#319cc1 960px)"></div>
<div style="position:absolute;left:0;top:510px;width:960px;height:3px;background:linear-gradient(90deg,#3e95bd 0px,#348eba 60px,#2b87b7 120px,#1c77b2 240px,#156dab 380px,#166eab 480px,#1978b7 600px,#2083b9 720px,#2991be 840px,#2d97bf 900px,#319dc1 960px)"></div>
<div style="position:absolute;left:0;top:513px;width:960px;height:3px;background:linear-gradient(90deg,#3e96bd 0px,#348fba 60px,#2b88b8 120px,#1c78b2 240px,#166eab 380px,#166fac 480px,#1979b7 600px,#2084ba 720px,#2992be 840px,#2d98c0 900px,#319ec1 960px)"></div>
<div style="position:absolute;left:0;top:516px;width:960px;height:3px;background:linear-gradient(90deg,#3e96be 0px,#358fbb 60px,#2b89b8 120px,#1d78b2 240px,#166fac 380px,#1670ac 480px,#1a79b7 600px,#2084ba 720px,#2992be 840px,#2d99c0 900px,#329fc2 960px)"></div>
<div style="position:absolute;left:0;top:519px;width:960px;height:3px;background:linear-gradient(90deg,#3f97be 0px,#3590bb 60px,#2b89b8 120px,#1d79b2 240px,#1670ac 380px,#1671ac 480px,#1a7ab7 600px,#2185ba 720px,#2993be 840px,#2e9ac0 900px,#32a0c2 960px)"></div>
<div style="position:absolute;left:0;top:522px;width:960px;height:3px;background:linear-gradient(90deg,#3f98be 0px,#3591bb 60px,#2c8ab8 120px,#1d7ab2 240px,#1670ac 380px,#1671ad 480px,#1a7bb8 600px,#2186ba 720px,#2a94bf 840px,#2e9ac0 900px,#32a1c2 960px)"></div>
<div style="position:absolute;left:0;top:525px;width:960px;height:3px;background:linear-gradient(90deg,#4098be 0px,#3692bb 60px,#2c8bb9 120px,#1d7bb3 240px,#1671ad 380px,#1772ad 480px,#1a7cb8 600px,#2187ba 720px,#2a95bf 840px,#2e9bc1 900px,#32a2c2 960px)"></div>
<div style="position:absolute;left:0;top:528px;width:960px;height:3px;background:linear-gradient(90deg,#4099bf 0px,#3692bc 60px,#2c8cb9 120px,#1e7bb3 240px,#1772ad 380px,#1773ad 480px,#1a7cb8 600px,#2187bb 720px,#2a96bf 840px,#2e9cc1 900px,#33a3c3 960px)"></div>
<div style="position:absolute;left:0;top:531px;width:960px;height:3px;background:linear-gradient(90deg,#409abf 0px,#3793bc 60px,#2d8cb9 120px,#1e7cb3 240px,#1773ad 380px,#1774ad 480px,#1b7db8 600px,#2288bb 720px,#2a96bf 840px,#2f9dc1 900px,#33a3c3 960px)"></div>
<div style="position:absolute;left:0;top:534px;width:960px;height:3px;background:linear-gradient(90deg,#419bbf 0px,#3794bc 60px,#2d8db9 120px,#1e7db3 240px,#1773ad 380px,#1774ae 480px,#1b7eb8 600px,#2289bb 720px,#2b97c0 840px,#2f9ec1 900px,#33a4c3 960px)"></div>
<div style="position:absolute;left:0;top:537px;width:960px;height:3px;background:linear-gradient(90deg,#419bbf 0px,#3795bc 60px,#2d8eb9 120px,#1e7db4 240px,#1774ae 380px,#1775ae 480px,#1b7fb9 600px,#228abb 720px,#2b98c0 840px,#2f9fc2 900px,#33a5c3 960px)"></div>
<div style="position:absolute;left:0;top:540px;width:960px;height:3px;background:linear-gradient(90deg,#429cc0 0px,#3895bd 60px,#2e8eba 120px,#1f7eb4 240px,#1775ae 380px,#1876ae 480px,#1b7fb9 600px,#228abc 720px,#2b99c0 840px,#2f9fc2 900px,#34a6c4 960px)"></div>
<div style="position:absolute;left:0;top:543px;width:960px;height:3px;background:linear-gradient(90deg,#429dc0 0px,#3896bd 60px,#2e8fba 120px,#1f7fb4 240px,#1875ae 380px,#1877af 480px,#1b80b9 600px,#228bbc 720px,#2b9ac0 840px,#30a0c2 900px,#34a7c4 960px)"></div>
<div style="position:absolute;left:0;top:546px;width:960px;height:3px;background:linear-gradient(90deg,#429ec0 0px,#3897bd 60px,#2e90ba 120px,#1f7fb4 240px,#1876af 380px,#1877af 480px,#1c81b9 600px,#238cbc 720px,#2c9ac0 840px,#30a1c2 900px,#34a8c4 960px)"></div>
<div style="position:absolute;left:0;top:549px;width:960px;height:3px;background:linear-gradient(90deg,#439ec0 0px,#3997bd 60px,#2f91ba 120px,#1f80b4 240px,#1877af 380px,#1878af 480px,#1c82b9 600px,#238dbc 720px,#2c9bc1 840px,#30a2c3 900px,#34a9c4 960px)"></div>
<div style="position:absolute;left:0;top:552px;width:960px;height:3px;background:linear-gradient(90deg,#439fc1 0px,#3998be 60px,#2f91bb 120px,#1f81b5 240px,#1878af 380px,#1879af 480px,#1c82b9 600px,#238ebc 720px,#2c9cc1 840px,#30a3c3 900px,#35a9c5 960px)"></div>
<div style="position:absolute;left:0;top:555px;width:960px;height:3px;background:linear-gradient(90deg,#44a0c1 0px,#3999be 60px,#2f92bb 120px,#2081b5 240px,#1878af 380px,#197ab0 480px,#1c83ba 600px,#238ebd 720px,#2c9dc1 840px,#31a4c3 900px,#35aac5 960px)"></div>
<div style="position:absolute;left:0;top:558px;width:960px;height:3px;background:linear-gradient(90deg,#44a1c1 0px,#3a9abe 60px,#2f93bb 120px,#2082b5 240px,#1979b0 380px,#197ab0 480px,#1c84ba 600px,#248fbd 720px,#2d9ec1 840px,#31a4c3 900px,#35abc5 960px)"></div>
<div style="position:absolute;left:0;top:561px;width:960px;height:3px;background:linear-gradient(90deg,#44a1c2 0px,#3a9abe 60px,#3094bb 120px,#2083b5 240px,#197ab0 380px,#197bb0 480px,#1d85ba 600px,#2490bd 720px,#2d9ec2 840px,#31a5c4 900px,#36acc6 960px)"></div>
<div style="position:absolute;left:0;top:564px;width:960px;height:3px;background:linear-gradient(90deg,#45a2c2 0px,#3a9bbf 60px,#3094bc 120px,#2083b6 240px,#197bb0 380px,#197cb1 480px,#1d85ba 600px,#2491bd 720px,#2d9fc2 840px,#31a6c4 900px,#36adc6 960px)"></div>
<div style="position:absolute;left:0;top:567px;width:960px;height:3px;background:linear-gradient(90deg,#45a3c2 0px,#3b9cbf 60px,#3095bc 120px,#2184b6 240px,#197bb1 380px,#197cb1 480px,#1d86ba 600px,#2491be 720px,#2da0c2 840px,#32a7c4 900px,#36aec6 960px)"></div>
<div style="position:absolute;left:0;top:570px;width:960px;height:3px;background:linear-gradient(90deg,#46a3c2 0px,#3b9dbf 60px,#3196bc 120px,#2185b6 240px,#1a7cb1 380px,#1a7db1 480px,#1d87ba 600px,#2492be 720px,#2ea1c2 840px,#32a8c4 900px,#36afc6 960px)"></div>
<div style="position:absolute;left:0;top:573px;width:960px;height:3px;background:linear-gradient(90deg,#46a4c3 0px,#3b9dc0 60px,#3196bc 120px,#2186b6 240px,#1a7db1 380px,#1a7eb2 480px,#1d88bb 600px,#2593be 720px,#2ea2c3 840px,#32a9c5 900px,#37b0c7 960px)"></div>
<div style="position:absolute;left:0;top:576px;width:960px;height:3px;background:linear-gradient(90deg,#46a5c3 0px,#3c9ec0 60px,#3197bd 120px,#2186b6 240px,#1a7db1 380px,#1a7fb2 480px,#1e88bb 600px,#2594be 720px,#2ea2c3 840px,#32a9c5 900px,#37b0c7 960px)"></div>
<div style="position:absolute;left:0;top:579px;width:960px;height:3px;background:linear-gradient(90deg,#47a6c3 0px,#3c9fc0 60px,#3298bd 120px,#2287b7 240px,#1a7eb2 380px,#1a7fb2 480px,#1e89bb 600px,#2594be 720px,#2ea3c3 840px,#33aac5 900px,#37b1c7 960px)"></div>
<div style="position:absolute;left:0;top:582px;width:960px;height:3px;background:linear-gradient(90deg,#47a6c3 0px,#3ca0c0 60px,#3299bd 120px,#2288b7 240px,#1a7fb2 380px,#1a80b2 480px,#1e8abb 600px,#2595bf 720px,#2ea4c3 840px,#33abc5 900px,#37b2c7 960px)"></div>
<div style="position:absolute;left:0;top:585px;width:960px;height:3px;background:linear-gradient(90deg,#48a7c4 0px,#3da0c1 60px,#3299bd 120px,#2288b7 240px,#1b80b2 380px,#1b81b3 480px,#1e8bbb 600px,#2696bf 720px,#2fa5c4 840px,#33acc6 900px,#38b3c8 960px)"></div>
<div style="position:absolute;left:0;top:588px;width:960px;height:3px;background:linear-gradient(90deg,#48a8c4 0px,#3da1c1 60px,#329abe 120px,#2289b7 240px,#1b80b3 380px,#1b82b3 480px,#1e8bbc 600px,#2697bf 720px,#2fa6c4 840px,#33adc6 900px,#38b4c8 960px)"></div>
<div style="position:absolute;left:0;top:591px;width:960px;height:3px;background:linear-gradient(90deg,#49a9c4 0px,#3ea2c1 60px,#339bbe 120px,#238ab8 240px,#1b81b3 380px,#1b82b3 480px,#1f8cbc 600px,#2697bf 720px,#2fa6c4 840px,#34adc6 900px,#38b5c8 960px)"></div>
<div style="position:absolute;left:0;top:594px;width:960px;height:3px;background:linear-gradient(90deg,#4aa9c5 0px,#3fa2c2 60px,#349bbe 120px,#248ab8 240px,#1c82b3 380px,#1c83b4 480px,#1f8dbc 600px,#2698c0 720px,#30a7c4 840px,#34aec6 900px,#39b5c8 960px)"></div>
<div style="position:absolute;left:0;top:597px;width:960px;height:3px;background:linear-gradient(90deg,#4baac5 0px,#40a3c2 60px,#359cbf 120px,#248bb8 240px,#1c82b4 380px,#1c84b4 480px,#208dbc 600px,#2799c0 720px,#30a8c4 840px,#34afc6 900px,#39b6c8 960px)"></div>
<div style="position:absolute;left:0;top:600px;width:960px;height:3px;background:linear-gradient(90deg,#4cabc6 0px,#41a4c2 60px,#369dbf 120px,#258cb8 240px,#1d83b4 380px,#1d84b4 480px,#208ebc 600px,#2799c0 720px,#30a8c4 840px,#35b0c6 900px,#39b7c9 960px)"></div>
<div style="position:absolute;left:0;top:603px;width:960px;height:3px;background:linear-gradient(90deg,#4dabc6 0px,#42a4c3 60px,#369dbf 120px,#268cb9 240px,#1e84b4 380px,#1d85b5 480px,#218fbc 600px,#289ac0 720px,#31a9c5 840px,#35b0c7 900px,#39b7c9 960px)"></div>
<div style="position:absolute;left:0;top:606px;width:960px;height:3px;background:linear-gradient(90deg,#4eacc6 0px,#43a5c3 60px,#379ec0 120px,#268db9 240px,#1e84b5 380px,#1e86b5 480px,#218fbc 600px,#289bc0 720px,#31aac5 840px,#35b1c7 900px,#3ab8c9 960px)"></div>
<div style="position:absolute;left:0;top:609px;width:960px;height:3px;background:linear-gradient(90deg,#4fadc7 0px,#43a6c4 60px,#389fc0 120px,#278db9 240px,#1f85b5 380px,#1e86b5 480px,#2190bd 600px,#289bc0 720px,#31aac5 840px,#36b2c7 900px,#3ab9c9 960px)"></div>
<div style="position:absolute;left:0;top:612px;width:960px;height:3px;background:linear-gradient(90deg,#50aec7 0px,#44a7c4 60px,#39a0c1 120px,#288eba 240px,#1f86b5 380px,#1f87b6 480px,#2290bd 600px,#299cc1 720px,#32abc5 840px,#36b2c7 900px,#3abac9 960px)"></div>
<div style="position:absolute;left:0;top:615px;width:960px;height:3px;background:linear-gradient(90deg,#51aec8 0px,#45a7c4 60px,#3aa0c1 120px,#288fba 240px,#2086b6 380px,#1f87b6 480px,#2291bd 600px,#299dc1 720px,#32acc5 840px,#36b3c7 900px,#3abac9 960px)"></div>
<div style="position:absolute;left:0;top:618px;width:960px;height:3px;background:linear-gradient(90deg,#52afc8 0px,#46a8c5 60px,#3ba1c1 120px,#298fba 240px,#2087b6 380px,#2088b6 480px,#2392bd 600px,#299dc1 720px,#32acc5 840px,#36b4c7 900px,#3bbbc9 960px)"></div>
<div style="position:absolute;left:0;top:621px;width:960px;height:3px;background:linear-gradient(90deg,#53b0c9 0px,#47a9c5 60px,#3ba2c2 120px,#2a90bb 240px,#2187b6 380px,#2089b7 480px,#2392bd 600px,#2a9ec1 720px,#33adc5 840px,#37b4c7 900px,#3bbcca 960px)"></div>
<div style="position:absolute;left:0;top:624px;width:960px;height:3px;background:linear-gradient(90deg,#54b0c9 0px,#48a9c5 60px,#3ca2c2 120px,#2a91bb 240px,#2288b7 380px,#2189b7 480px,#2493bd 600px,#2a9ec1 720px,#33aec6 840px,#37b5c8 900px,#3bbcca 960px)"></div>
<div style="position:absolute;left:0;top:627px;width:960px;height:3px;background:linear-gradient(90deg,#55b1c9 0px,#49aac6 60px,#3da3c2 120px,#2b91bb 240px,#2289b7 380px,#218ab7 480px,#2494be 600px,#2b9fc1 720px,#33aec6 840px,#37b6c8 900px,#3cbdca 960px)"></div>
<div style="position:absolute;left:0;top:630px;width:960px;height:3px;background:linear-gradient(90deg,#56b2ca 0px,#4aabc6 60px,#3ea4c3 120px,#2c92bc 240px,#2389b7 380px,#228bb7 480px,#2494be 600px,#2ba0c2 720px,#34afc6 840px,#38b6c8 900px,#3cbeca 960px)"></div>
<div style="position:absolute;left:0;top:633px;width:960px;height:3px;background:linear-gradient(90deg,#57b2ca 0px,#4babc7 60px,#3fa4c3 120px,#2c92bc 240px,#238ab8 380px,#228bb8 480px,#2595be 600px,#2ba0c2 720px,#34b0c6 840px,#38b7c8 900px,#3cbeca 960px)"></div>
<div style="position:absolute;left:0;top:636px;width:960px;height:3px;background:linear-gradient(90deg,#58b3cb 0px,#4cacc7 60px,#40a5c3 120px,#2d93bc 240px,#248bb8 380px,#238cb8 480px,#2596be 600px,#2ca1c2 720px,#34b0c6 840px,#38b8c8 900px,#3cbfca 960px)"></div>
<div style="position:absolute;left:0;top:639px;width:960px;height:3px;background:linear-gradient(90deg,#59b4cb 0px,#4cadc7 60px,#40a6c4 120px,#2e94bc 240px,#248bb8 380px,#238db8 480px,#2696be 600px,#2ca2c2 720px,#34b1c6 840px,#39b8c8 900px,#3dc0ca 960px)"></div>
<div style="position:absolute;left:0;top:642px;width:960px;height:3px;background:linear-gradient(90deg,#5ab5cc 0px,#4dadc8 60px,#41a6c4 120px,#2e94bd 240px,#258cb9 380px,#248db9 480px,#2697be 600px,#2da2c2 720px,#35b2c6 840px,#39b9c8 900px,#3dc1cb 960px)"></div>
<div style="position:absolute;left:0;top:645px;width:960px;height:3px;background:linear-gradient(90deg,#5bb5cc 0px,#4eaec8 60px,#42a7c5 120px,#2f95bd 240px,#258db9 380px,#248eb9 480px,#2797bf 600px,#2da3c2 720px,#35b2c7 840px,#39bac9 900px,#3dc1cb 960px)"></div>
<div style="position:absolute;left:0;top:648px;width:960px;height:3px;background:linear-gradient(90deg,#5cb6cc 0px,#4fafc9 60px,#43a8c5 120px,#3096bd 240px,#268db9 380px,#258fb9 480px,#2798bf 600px,#2da4c3 720px,#35b3c7 840px,#3abac9 900px,#3ec2cb 960px)"></div>
<div style="position:absolute;left:0;top:651px;width:960px;height:3px;background:linear-gradient(90deg,#5db7cd 0px,#50b0c9 60px,#44a8c5 120px,#3096be 240px,#278eba 380px,#258fba 480px,#2899bf 600px,#2ea4c3 720px,#36b4c7 840px,#3abbc9 900px,#3ec3cb 960px)"></div>
<div style="position:absolute;left:0;top:654px;width:960px;height:3px;background:linear-gradient(90deg,#5eb7cd 0px,#51b0c9 60px,#44a9c6 120px,#3197be 240px,#278fba 380px,#2690ba 480px,#2899bf 600px,#2ea5c3 720px,#36b4c7 840px,#3abcc9 900px,#3ec3cb 960px)"></div>
<div style="position:absolute;left:0;top:657px;width:960px;height:3px;background:linear-gradient(90deg,#5fb8ce 0px,#52b1ca 60px,#45aac6 120px,#3298be 240px,#288fba 380px,#2690ba 480px,#289abf 600px,#2ea5c3 720px,#36b5c7 840px,#3abcc9 900px,#3ec4cb 960px)"></div>
<div style="position:absolute;left:0;top:660px;width:960px;height:3px;background:linear-gradient(90deg,#60b9ce 0px,#53b2ca 60px,#46aac6 120px,#3298bf 240px,#2890bb 380px,#2791bb 480px,#299bbf 600px,#2fa6c3 720px,#37b6c7 840px,#3bbdc9 900px,#3fc5cb 960px)"></div>
<div style="position:absolute;left:0;top:663px;width:960px;height:3px;background:linear-gradient(90deg,#61bacf 0px,#54b2cb 60px,#47abc7 120px,#3399bf 240px,#2990bb 380px,#2792bb 480px,#299bbf 600px,#2fa7c3 720px,#37b6c7 840px,#3bbec9 900px,#3fc6cc 960px)"></div>
<div style="position:absolute;left:0;top:666px;width:960px;height:3px;background:linear-gradient(90deg,#62bacf 0px,#55b3cb 60px,#48acc7 120px,#3499bf 240px,#2991bb 380px,#2892bb 480px,#2a9cc0 600px,#30a7c4 720px,#37b7c8 840px,#3bbfca 900px,#3fc6cc 960px)"></div>
<div style="position:absolute;left:0;top:669px;width:960px;height:3px;background:linear-gradient(90deg,#63bbcf 0px,#56b4cb 60px,#49acc7 120px,#349ac0 240px,#2a92bc 380px,#2893bc 480px,#2a9dc0 600px,#30a8c4 720px,#38b8c8 840px,#3cbfca 900px,#40c7cc 960px)"></div>
<div style="position:absolute;left:0;top:672px;width:960px;height:3px;background:linear-gradient(90deg,#64bcd0 0px,#56b4cc 60px,#49adc8 120px,#359bc0 240px,#2b92bc 380px,#2994bc 480px,#2b9dc0 600px,#30a9c4 720px,#38b8c8 840px,#3cc0ca 900px,#40c8cc 960px)"></div><div id="win"><div id="in"><div style="left:42px;top:42px;width:237px;height:273.5px;background:#1e1e1e"></div>
<div style="left:281px;top:42px;width:637px;height:273.5px;background:#1e1e1e"></div>
<div style="left:42px;top:317px;width:876px;height:316px;background:#1e1e1e"></div>
<div style="left:914.5px;top:317px;width:2px;height:316px;background:#0b0b0b"></div>
<div style="left:42px;top:317px;width:2px;height:316px;background:#0b0b0b"></div>
<div style="left:42px;top:631.8px;width:876px;height:1.2px;background:#0b0b0b"></div>
<div style="left:43.9px;top:317.6px;width:870.1px;height:314.6px;border:1px solid #336ec6;border-radius:0 0 7px 7px"></div>
<div style="left:42px;top:258px;width:19.5px;height:11.5px;background:#2a2a2a;border-radius:0 2px 2px 0"></div>
<div class="t" style="left:41px;top:259px;color:#6a6a6a;font-size:8px">1</div>
<svg style="position:absolute;left:51px;top:259.8px;" width="8" height="8" viewBox="0 0 8 8"><path d="M1.2 2.8 L4 5.6 L6.8 2.8" stroke="#8a8a8a" stroke-width="1.1" fill="none"/></svg>
<svg style="position:absolute;left:65.5px;top:259.5px;" width="9" height="9" viewBox="0 0 9 9"><path d="M2.5 1.5 L7 4.5 L2.5 7.5Z" fill="#9a9a9a"/></svg>
<svg style="position:absolute;left:111px;top:259.5px;" width="9" height="9" viewBox="0 0 9 9"><rect x="1" y="0.8" width="7" height="7.4" fill="#7a7a7a"/><rect x="2.3" y="3" width="4.4" height="0.8" fill="#1e1e1e"/><rect x="2.3" y="5" width="4.4" height="0.8" fill="#1e1e1e"/></svg>
<svg style="position:absolute;left:126.5px;top:259.5px;" width="9" height="9" viewBox="0 0 9 9"><rect x="0.5" y="4" width="8" height="0.9" fill="#8a8a8a"/><rect x="2.5" y="2" width="1" height="5" fill="#8a8a8a"/><rect x="5.5" y="2" width="1" height="5" fill="#8a8a8a"/></svg>
<div class="t" style="left:0px;top:259px;color:#828282;font-size:7.1px;font-weight:bold;width:262.6px;text-align:right;letter-spacing:0.05px">00:00:00:00</div>
<div style="left:42px;top:289.5px;width:231px;height:6px;background:#383838"></div>
<div style="left:266px;top:289.3px;width:6.4px;height:6.4px;border-radius:50%;border:1.2px solid #6e6e6e;background:#2a2a2a"></div>
<svg style="position:absolute;left:41px;top:299.5px;" width="9" height="9" viewBox="0 0 9 9"><path d="M5.6 1.3 L4.7 1.3 L4.3 1.7 L4.3 3.9 L3.3 4.5 L4.3 5.1 L4.3 7.3 L4.7 7.7 L5.6 7.7" stroke="#8e8e8e" stroke-width="0.85" fill="none"/></svg>
<svg style="position:absolute;left:55px;top:299.5px;" width="9" height="9" viewBox="0 0 9 9"><path d="M3.4 1.3 L4.3 1.3 L4.7 1.7 L4.7 3.9 L5.7 4.5 L4.7 5.1 L4.7 7.3 L4.3 7.7 L3.4 7.7" stroke="#8e8e8e" stroke-width="0.85" fill="none"/></svg>
<svg style="position:absolute;left:79.8px;top:299.5px;" width="9" height="9" viewBox="0 0 9 9"><path d="M2.3 1.3 L1.5 1.3 L1.1 1.7 L1.1 3.9 L0.3 4.5 L1.1 5.1 L1.1 7.3 L1.5 7.7 L2.3 7.7" stroke="#8e8e8e" stroke-width="0.85" fill="none"/><path d="M2.6 4.5 L4.8 2.6 L4.8 3.9 L8.3 3.9 L8.3 5.1 L4.8 5.1 L4.8 6.4Z" fill="#8e8e8e"/></svg>
<svg style="position:absolute;left:95.9px;top:299.5px;" width="9" height="9" viewBox="0 0 9 9"><path d="M6.5 1.8 L2.8 4.5 L6.5 7.2Z" fill="#8e8e8e"/><rect x="7" y="1.8" width="1.1" height="5.4" fill="#8e8e8e"/></svg>
<svg style="position:absolute;left:111px;top:299.5px;" width="9" height="9" viewBox="0 0 9 9"><path d="M2.5 1.5 L7 4.5 L2.5 7.5Z" fill="#8e8e8e"/></svg>
<svg style="position:absolute;left:126.5px;top:299.5px;" width="9" height="9" viewBox="0 0 9 9"><rect x="0.9" y="1.8" width="1.1" height="5.4" fill="#8e8e8e"/><path d="M2.5 1.8 L6.2 4.5 L2.5 7.2Z" fill="#8e8e8e"/></svg>
<svg style="position:absolute;left:142.8px;top:299.5px;" width="9" height="9" viewBox="0 0 9 9"><path d="M6.7 1.3 L7.5 1.3 L7.9 1.7 L7.9 3.9 L8.7 4.5 L7.9 5.1 L7.9 7.3 L7.5 7.7 L6.7 7.7" stroke="#8e8e8e" stroke-width="0.85" fill="none"/><path d="M6.4 4.5 L4.2 2.6 L4.2 3.9 L0.7 3.9 L0.7 5.1 L4.2 5.1 L4.2 6.4Z" fill="#8e8e8e"/></svg>
<svg style="position:absolute;left:166.5px;top:299.5px;" width="9" height="9" viewBox="0 0 9 9"><rect x="0.5" y="4" width="3.6" height="3.8" fill="#8e8e8e"/><rect x="4.9" y="4" width="3.6" height="3.8" fill="#8e8e8e"/><rect x="2.6" y="1" width="3.8" height="2.4" fill="#8e8e8e"/></svg>
<svg style="position:absolute;left:182.5px;top:299.5px;" width="9" height="9" viewBox="0 0 9 9"><rect x="0.5" y="4.5" width="3.6" height="3.3" fill="#8e8e8e"/><rect x="4.9" y="4.5" width="3.6" height="3.3" fill="#8e8e8e"/><path d="M2.6 3.5 L4.5 1 L6.4 3.5Z" fill="#8e8e8e"/></svg>
<svg style="position:absolute;left:198.5px;top:299.5px;" width="9" height="9" viewBox="0 0 9 9"><rect x="0.5" y="2.5" width="8" height="5.5" rx="0.8" fill="#8e8e8e"/><rect x="3" y="1.5" width="3" height="1.5" fill="#8e8e8e"/><circle cx="4.5" cy="5.2" r="1.6" fill="#1e1e1e"/><circle cx="4.5" cy="5.2" r="0.8" fill="#8e8e8e"/></svg>
<svg style="position:absolute;left:214.5px;top:299.5px;" width="9" height="9" viewBox="0 0 9 9"><path d="M2 1.5 L6.5 1.5 L8 3 L8 7.5 L2 7.5Z" stroke="#8e8e8e" stroke-width="0.9" fill="none"/><circle cx="5" cy="5" r="1.3" fill="#8e8e8e"/></svg>
<svg style="position:absolute;left:258.9px;top:299.5px;" width="9" height="9" viewBox="0 0 9 9"><rect x="0.5" y="3.8" width="8" height="1.4" fill="#8e8e8e"/><rect x="3.8" y="0.5" width="1.4" height="8" fill="#8e8e8e"/></svg>
<div style="left:281px;top:42px;width:637px;height:11px;background:#1e1e1e"></div>
<div style="left:282px;top:52.2px;width:636px;height:0.9px;background:#b4b4b4"></div>
<svg style="position:absolute;left:281px;top:42px;" width="637" height="11" viewBox="0 0 637 11"><rect x="14.02" y="9" width="0.8" height="1.6" fill="#a0a0a0"/><rect x="18.54" y="3" width="0.9" height="8" fill="#9a9a9a"/><rect x="23.16" y="9" width="0.8" height="1.6" fill="#a0a0a0"/><rect x="27.72" y="9" width="0.8" height="1.6" fill="#a0a0a0"/><rect x="32.29" y="9" width="0.8" height="1.6" fill="#a0a0a0"/><rect x="36.86" y="9" width="0.8" height="1.6" fill="#a0a0a0"/><rect x="41.42" y="9" width="0.8" height="1.6" fill="#a0a0a0"/><rect x="45.99" y="9" width="0.8" height="1.6" fill="#a0a0a0"/><rect x="50.56" y="9" width="0.8" height="1.6" fill="#a0a0a0"/><rect x="55.13" y="9" width="0.8" height="1.6" fill="#a0a0a0"/><rect x="59.69" y="9" width="0.8" height="1.6" fill="#a0a0a0"/><rect x="64.21" y="3" width="0.9" height="8" fill="#9a9a9a"/><rect x="68.83" y="9" width="0.8" height="1.6" fill="#a0a0a0"/><rect x="73.39" y="9" width="0.8" height="1.6" fill="#a0a0a0"/><rect x="77.96" y="9" width="0.8" height="1.6" fill="#a0a0a0"/><rect x="82.53" y="9" width="0.8" height="1.6" fill="#a0a0a0"/><rect x="87.09" y="9" width="0.8" height="1.6" fill="#a0a0a0"/><rect x="91.66" y="9" width="0.8" height="1.6" fill="#a0a0a0"/><rect x="96.23" y="9" width="0.8" height="1.6" fill="#a0a0a0"/><rect x="100.80" y="9" width="0.8" height="1.6" fill="#a0a0a0"/><rect x="105.36" y="9" width="0.8" height="1.6" fill="#a0a0a0"/><rect x="109.88" y="3" width="0.9" height="8" fill="#9a9a9a"/><rect x="114.50" y="9" width="0.8" height="1.6" fill="#a0a0a0"/><rect x="119.06" y="9" width="0.8" height="1.6" fill="#a0a0a0"/><rect x="123.63" y="9" width="0.8" height="1.6" fill="#a0a0a0"/><rect x="128.20" y="9" width="0.8" height="1.6" fill="#a0a0a0"/><rect x="132.77" y="9" width="0.8" height="1.6" fill="#a0a0a0"/><rect x="137.33" y="9" width="0.8" height="1.6" fill="#a0a0a0"/><rect x="141.90" y="9" width="0.8" height="1.6" fill="#a0a0a0"/><rect x="146.47" y="9" width="0.8" height="1.6" fill="#a0a0a0"/><rect x="151.03" y="9" width="0.8" height="1.6" fill="#a0a0a0"/><rect x="155.55" y="3" width="0.9" height="8" fill="#9a9a9a"/><rect x="160.17" y="9" width="0.8" height="1.6" fill="#a0a0a0"/><rect x="164.73" y="9" width="0.8" height="1.6" fill="#a0a0a0"/><rect x="169.30" y="9" width="0.8" height="1.6" fill="#a0a0a0"/><rect x="173.87" y="9" width="0.8" height="1.6" fill="#a0a0a0"/><rect x="178.43" y="9" width="0.8" height="1.6" fill="#a0a0a0"/><rect x="183.00" y="9" width="0.8" height="1.6" fill="#a0a0a0"/><rect x="187.57" y="9" width="0.8" height="1.6" fill="#a0a0a0"/><rect x="192.14" y="9" width="0.8" height="1.6" fill="#a0a0a0"/><rect x="196.70" y="9" width="0.8" height="1.6" fill="#a0a0a0"/><rect x="201.22" y="3" width="0.9" height="8" fill="#9a9a9a"/><rect x="205.84" y="9" width="0.8" height="1.6" fill="#a0a0a0"/><rect x="210.40" y="9" width="0.8" height="1.6" fill="#a0a0a0"/><rect x="214.97" y="9" width="0.8" height="1.6" fill="#a0a0a0"/><rect x="219.54" y="9" width="0.8" height="1.6" fill="#a0a0a0"/><rect x="224.10" y="9" width="0.8" height="1.6" fill="#a0a0a0"/><rect x="228.67" y="9" width="0.8" height="1.6" fill="#a0a0a0"/><rect x="233.24" y="9" width="0.8" height="1.6" fill="#a0a0a0"/><rect x="237.81" y="9" width="0.8" height="1.6" fill="#a0a0a0"/><rect x="242.37" y="9" width="0.8" height="1.6" fill="#a0a0a0"/><rect x="246.89" y="3" width="0.9" height="8" fill="#9a9a9a"/><rect x="251.51" y="9" width="0.8" height="1.6" fill="#a0a0a0"/><rect x="256.07" y="9" width="0.8" height="1.6" fill="#a0a0a0"/><rect x="260.64" y="9" width="0.8" height="1.6" fill="#a0a0a0"/><rect x="265.21" y="9" width="0.8" height="1.6" fill="#a0a0a0"/><rect x="269.77" y="9" width="0.8" height="1.6" fill="#a0a0a0"/><rect x="274.34" y="9" width="0.8" height="1.6" fill="#a0a0a0"/><rect x="278.91" y="9" width="0.8" height="1.6" fill="#a0a0a0"/><rect x="283.48" y="9" width="0.8" height="1.6" fill="#a0a0a0"/><rect x="288.04" y="9" width="0.8" height="1.6" fill="#a0a0a0"/><rect x="292.56" y="3" width="0.9" height="8" fill="#9a9a9a"/><rect x="297.18" y="9" width="0.8" height="1.6" fill="#a0a0a0"/><rect x="301.74" y="9" width="0.8" height="1.6" fill="#a0a0a0"/><rect x="306.31" y="9" width="0.8" height="1.6" fill="#a0a0a0"/><rect x="310.88" y="9" width="0.8" height="1.6" fill="#a0a0a0"/><rect x="315.45" y="9" width="0.8" height="1.6" fill="#a0a0a0"/><rect x="320.01" y="9" width="0.8" height="1.6" fill="#a0a0a0"/><rect x="324.58" y="9" width="0.8" height="1.6" fill="#a0a0a0"/><rect x="329.15" y="9" width="0.8" height="1.6" fill="#a0a0a0"/><rect x="333.71" y="9" width="0.8" height="1.6" fill="#a0a0a0"/><rect x="338.23" y="3" width="0.9" height="8" fill="#9a9a9a"/><rect x="342.85" y="9" width="0.8" height="1.6" fill="#a0a0a0"/><rect x="347.41" y="9" width="0.8" height="1.6" fill="#a0a0a0"/><rect x="351.98" y="9" width="0.8" height="1.6" fill="#a0a0a0"/><rect x="356.55" y="9" width="0.8" height="1.6" fill="#a0a0a0"/><rect x="361.12" y="9" width="0.8" height="1.6" fill="#a0a0a0"/><rect x="365.68" y="9" width="0.8" height="1.6" fill="#a0a0a0"/><rect x="370.25" y="9" width="0.8" height="1.6" fill="#a0a0a0"/><rect x="374.82" y="9" width="0.8" height="1.6" fill="#a0a0a0"/><rect x="379.38" y="9" width="0.8" height="1.6" fill="#a0a0a0"/><rect x="383.90" y="3" width="0.9" height="8" fill="#9a9a9a"/><rect x="388.52" y="9" width="0.8" height="1.6" fill="#a0a0a0"/><rect x="393.08" y="9" width="0.8" height="1.6" fill="#a0a0a0"/><rect x="397.65" y="9" width="0.8" height="1.6" fill="#a0a0a0"/><rect x="402.22" y="9" width="0.8" height="1.6" fill="#a0a0a0"/><rect x="406.78" y="9" width="0.8" height="1.6" fill="#a0a0a0"/><rect x="411.35" y="9" width="0.8" height="1.6" fill="#a0a0a0"/><rect x="415.92" y="9" width="0.8" height="1.6" fill="#a0a0a0"/><rect x="420.49" y="9" width="0.8" height="1.6" fill="#a0a0a0"/><rect x="425.05" y="9" width="0.8" height="1.6" fill="#a0a0a0"/><rect x="429.57" y="3" width="0.9" height="8" fill="#9a9a9a"/><rect x="434.19" y="9" width="0.8" height="1.6" fill="#a0a0a0"/><rect x="438.75" y="9" width="0.8" height="1.6" fill="#a0a0a0"/><rect x="443.32" y="9" width="0.8" height="1.6" fill="#a0a0a0"/><rect x="447.89" y="9" width="0.8" height="1.6" fill="#a0a0a0"/><rect x="452.46" y="9" width="0.8" height="1.6" fill="#a0a0a0"/><rect x="457.02" y="9" width="0.8" height="1.6" fill="#a0a0a0"/><rect x="461.59" y="9" width="0.8" height="1.6" fill="#a0a0a0"/><rect x="466.16" y="9" width="0.8" height="1.6" fill="#a0a0a0"/><rect x="470.72" y="9" width="0.8" height="1.6" fill="#a0a0a0"/><rect x="475.24" y="3" width="0.9" height="8" fill="#9a9a9a"/><rect x="479.86" y="9" width="0.8" height="1.6" fill="#a0a0a0"/><rect x="484.42" y="9" width="0.8" height="1.6" fill="#a0a0a0"/><rect x="488.99" y="9" width="0.8" height="1.6" fill="#a0a0a0"/><rect x="493.56" y="9" width="0.8" height="1.6" fill="#a0a0a0"/><rect x="498.13" y="9" width="0.8" height="1.6" fill="#a0a0a0"/><rect x="502.69" y="9" width="0.8" height="1.6" fill="#a0a0a0"/><rect x="507.26" y="9" width="0.8" height="1.6" fill="#a0a0a0"/><rect x="511.83" y="9" width="0.8" height="1.6" fill="#a0a0a0"/><rect x="516.39" y="9" width="0.8" height="1.6" fill="#a0a0a0"/><rect x="520.91" y="3" width="0.9" height="8" fill="#9a9a9a"/><rect x="525.53" y="9" width="0.8" height="1.6" fill="#a0a0a0"/><rect x="530.09" y="9" width="0.8" height="1.6" fill="#a0a0a0"/><rect x="534.66" y="9" width="0.8" height="1.6" fill="#a0a0a0"/><rect x="539.23" y="9" width="0.8" height="1.6" fill="#a0a0a0"/><rect x="543.79" y="9" width="0.8" height="1.6" fill="#a0a0a0"/><rect x="548.36" y="9" width="0.8" height="1.6" fill="#a0a0a0"/><rect x="552.93" y="9" width="0.8" height="1.6" fill="#a0a0a0"/><rect x="557.50" y="9" width="0.8" height="1.6" fill="#a0a0a0"/><rect x="562.06" y="9" width="0.8" height="1.6" fill="#a0a0a0"/><rect x="566.58" y="3" width="0.9" height="8" fill="#9a9a9a"/><rect x="571.20" y="9" width="0.8" height="1.6" fill="#a0a0a0"/><rect x="575.76" y="9" width="0.8" height="1.6" fill="#a0a0a0"/><rect x="580.33" y="9" width="0.8" height="1.6" fill="#a0a0a0"/><rect x="584.90" y="9" width="0.8" height="1.6" fill="#a0a0a0"/><rect x="589.47" y="9" width="0.8" height="1.6" fill="#a0a0a0"/><rect x="594.03" y="9" width="0.8" height="1.6" fill="#a0a0a0"/><rect x="598.60" y="9" width="0.8" height="1.6" fill="#a0a0a0"/><rect x="603.17" y="9" width="0.8" height="1.6" fill="#a0a0a0"/><rect x="607.73" y="9" width="0.8" height="1.6" fill="#a0a0a0"/><rect x="612.25" y="3" width="0.9" height="8" fill="#9a9a9a"/><rect x="616.87" y="9" width="0.8" height="1.6" fill="#a0a0a0"/><rect x="621.43" y="9" width="0.8" height="1.6" fill="#a0a0a0"/><rect x="626.00" y="9" width="0.8" height="1.6" fill="#a0a0a0"/><rect x="630.57" y="9" width="0.8" height="1.6" fill="#a0a0a0"/><rect x="635.14" y="9" width="0.8" height="1.6" fill="#a0a0a0"/><rect x="9.2" y="3" width="0.9" height="8" fill="#9a9a9a"/></svg>
<div class="t" style="left:300.99px;top:44.2px;font-size:5.4px;line-height:8px;color:#c4c4c4">1500</div>
<div class="t" style="left:346.66px;top:44.2px;font-size:5.4px;line-height:8px;color:#c4c4c4">1000</div>
<div class="t" style="left:392.33px;top:44.2px;font-size:5.4px;line-height:8px;color:#c4c4c4">500</div>
<div class="t" style="left:438px;top:44.2px;font-size:5.4px;line-height:8px;color:#c4c4c4">0</div>
<div class="t" style="left:483.67px;top:44.2px;font-size:5.4px;line-height:8px;color:#c4c4c4">500</div>
<div class="t" style="left:529.34px;top:44.2px;font-size:5.4px;line-height:8px;color:#c4c4c4">1000</div>
<div class="t" style="left:575.01px;top:44.2px;font-size:5.4px;line-height:8px;color:#c4c4c4">1500</div>
<div class="t" style="left:620.68px;top:44.2px;font-size:5.4px;line-height:8px;color:#c4c4c4">2000</div>
<div class="t" style="left:666.35px;top:44.2px;font-size:5.4px;line-height:8px;color:#c4c4c4">2500</div>
<div class="t" style="left:712.02px;top:44.2px;font-size:5.4px;line-height:8px;color:#c4c4c4">3000</div>
<div class="t" style="left:757.69px;top:44.2px;font-size:5.4px;line-height:8px;color:#c4c4c4">3500</div>
<div class="t" style="left:803.36px;top:44.2px;font-size:5.4px;line-height:8px;color:#c4c4c4">4000</div>
<div class="t" style="left:849.03px;top:44.2px;font-size:5.4px;line-height:8px;color:#c4c4c4">4500</div>
<div class="t" style="left:894.7px;top:44.2px;font-size:5.4px;line-height:8px;color:#c4c4c4">5000</div>
<div style="left:289.9px;top:45px;width:0.9px;height:208px;background:#b4b4b4"></div>
<svg style="position:absolute;left:281px;top:53px;" width="10" height="198" viewBox="0 0 10 198"><rect x="1" y="0.55" width="9" height="0.9" fill="#9a9a9a"/><rect x="7.4" y="5.17" width="1.6" height="0.8" fill="#a0a0a0"/><rect x="7.4" y="9.73" width="1.6" height="0.8" fill="#a0a0a0"/><rect x="7.4" y="14.30" width="1.6" height="0.8" fill="#a0a0a0"/><rect x="7.4" y="18.87" width="1.6" height="0.8" fill="#a0a0a0"/><rect x="7.4" y="23.44" width="1.6" height="0.8" fill="#a0a0a0"/><rect x="7.4" y="28.00" width="1.6" height="0.8" fill="#a0a0a0"/><rect x="7.4" y="32.57" width="1.6" height="0.8" fill="#a0a0a0"/><rect x="7.4" y="37.14" width="1.6" height="0.8" fill="#a0a0a0"/><rect x="7.4" y="41.70" width="1.6" height="0.8" fill="#a0a0a0"/><rect x="1" y="46.22" width="9" height="0.9" fill="#9a9a9a"/><rect x="7.4" y="50.84" width="1.6" height="0.8" fill="#a0a0a0"/><rect x="7.4" y="55.40" width="1.6" height="0.8" fill="#a0a0a0"/><rect x="7.4" y="59.97" width="1.6" height="0.8" fill="#a0a0a0"/><rect x="7.4" y="64.54" width="1.6" height="0.8" fill="#a0a0a0"/><rect x="7.4" y="69.11" width="1.6" height="0.8" fill="#a0a0a0"/><rect x="7.4" y="73.67" width="1.6" height="0.8" fill="#a0a0a0"/><rect x="7.4" y="78.24" width="1.6" height="0.8" fill="#a0a0a0"/><rect x="7.4" y="82.81" width="1.6" height="0.8" fill="#a0a0a0"/><rect x="7.4" y="87.37" width="1.6" height="0.8" fill="#a0a0a0"/><rect x="1" y="91.89" width="9" height="0.9" fill="#9a9a9a"/><rect x="7.4" y="96.51" width="1.6" height="0.8" fill="#a0a0a0"/><rect x="7.4" y="101.07" width="1.6" height="0.8" fill="#a0a0a0"/><rect x="7.4" y="105.64" width="1.6" height="0.8" fill="#a0a0a0"/><rect x="7.4" y="110.21" width="1.6" height="0.8" fill="#a0a0a0"/><rect x="7.4" y="114.78" width="1.6" height="0.8" fill="#a0a0a0"/><rect x="7.4" y="119.34" width="1.6" height="0.8" fill="#a0a0a0"/><rect x="7.4" y="123.91" width="1.6" height="0.8" fill="#a0a0a0"/><rect x="7.4" y="128.48" width="1.6" height="0.8" fill="#a0a0a0"/><rect x="7.4" y="133.04" width="1.6" height="0.8" fill="#a0a0a0"/><rect x="1" y="137.56" width="9" height="0.9" fill="#9a9a9a"/><rect x="7.4" y="142.18" width="1.6" height="0.8" fill="#a0a0a0"/><rect x="7.4" y="146.74" width="1.6" height="0.8" fill="#a0a0a0"/><rect x="7.4" y="151.31" width="1.6" height="0.8" fill="#a0a0a0"/><rect x="7.4" y="155.88" width="1.6" height="0.8" fill="#a0a0a0"/><rect x="7.4" y="160.44" width="1.6" height="0.8" fill="#a0a0a0"/><rect x="7.4" y="165.01" width="1.6" height="0.8" fill="#a0a0a0"/><rect x="7.4" y="169.58" width="1.6" height="0.8" fill="#a0a0a0"/><rect x="7.4" y="174.15" width="1.6" height="0.8" fill="#a0a0a0"/><rect x="7.4" y="178.71" width="1.6" height="0.8" fill="#a0a0a0"/><rect x="1" y="183.23" width="9" height="0.9" fill="#9a9a9a"/><rect x="7.4" y="187.85" width="1.6" height="0.8" fill="#a0a0a0"/><rect x="7.4" y="192.41" width="1.6" height="0.8" fill="#a0a0a0"/><rect x="7.4" y="196.98" width="1.6" height="0.8" fill="#a0a0a0"/></svg>
<div class="t" style="left:282.8px;top:54.3px;font-size:5.4px;line-height:8px;color:#c4c4c4">0</div>
<div class="t" style="left:282.8px;top:99.97px;font-size:5.4px;line-height:8px;color:#c4c4c4">5</div>
<div class="t" style="left:282.8px;top:105.47px;font-size:5.4px;line-height:8px;color:#c4c4c4">0</div>
<div class="t" style="left:282.8px;top:110.97px;font-size:5.4px;line-height:8px;color:#c4c4c4">0</div>
<div class="t" style="left:282.8px;top:145.64px;font-size:5.4px;line-height:8px;color:#c4c4c4">1</div>
<div class="t" style="left:282.8px;top:151.14px;font-size:5.4px;line-height:8px;color:#c4c4c4">0</div>
<div class="t" style="left:282.8px;top:156.64px;font-size:5.4px;line-height:8px;color:#c4c4c4">0</div>
<div class="t" style="left:282.8px;top:162.14px;font-size:5.4px;line-height:8px;color:#c4c4c4">0</div>
<div class="t" style="left:282.8px;top:191.31px;font-size:5.4px;line-height:8px;color:#c4c4c4">1</div>
<div class="t" style="left:282.8px;top:196.81px;font-size:5.4px;line-height:8px;color:#c4c4c4">5</div>
<div class="t" style="left:282.8px;top:202.31px;font-size:5.4px;line-height:8px;color:#c4c4c4">0</div>
<div class="t" style="left:282.8px;top:207.81px;font-size:5.4px;line-height:8px;color:#c4c4c4">0</div>
<div class="t" style="left:282.8px;top:236.98px;font-size:5.4px;line-height:8px;color:#c4c4c4">2</div>
<div class="t" style="left:282.8px;top:242.48px;font-size:5.4px;line-height:8px;color:#c4c4c4">0</div>
<div class="t" style="left:282.8px;top:247.98px;font-size:5.4px;line-height:8px;color:#c4c4c4">0</div>
<div style="left:291px;top:53px;width:627px;height:197.8px;background:#262626"></div>
<div class="t" style="left:295px;top:258.8px;color:#3f8fe0;font-size:7.1px;font-weight:bold;letter-spacing:0.05px">00:08:01:12</div>
<div style="left:345px;top:258.3px;width:36px;height:10.7px;background:#0d0d0d;border-radius:2px"></div>
<div class="t" style="left:348.5px;top:259px;font-size:6px;color:#c8c8c8">Fit</div>
<svg style="position:absolute;left:369.5px;top:259.8px;" width="8" height="8" viewBox="0 0 8 8"><path d="M1.2 2.8 L4 5.6 L6.8 2.8" stroke="#d0d0d0" stroke-width="1.1" fill="none"/></svg>
<div style="left:833px;top:258px;width:31.8px;height:11px;background:#0d0d0d;border-radius:2px"></div>
<div class="t" style="left:836.5px;top:259px;font-size:6px;color:#c8c8c8">1/2</div>
<svg style="position:absolute;left:854.5px;top:259.8px;" width="8" height="8" viewBox="0 0 8 8"><path d="M1.2 2.8 L4 5.6 L6.8 2.8" stroke="#d0d0d0" stroke-width="1.1" fill="none"/></svg>
<svg style="position:absolute;left:870.5px;top:259.5px;" width="9" height="9" viewBox="0 0 9 9"><path d="M7.8 7.6 L4.4 4.2" stroke="#c8c8c8" stroke-width="1.6" stroke-linecap="round"/><path d="M5 3.2 Q4.8 0.6 1.8 1 L3.2 2.4 L2.4 3.4 L1 2 Q0.6 5 3.4 4.6Z" fill="#c8c8c8"/></svg>
<div class="t" style="left:885px;top:258.8px;color:#d2d2d2;font-size:7.1px;font-weight:bold;letter-spacing:0.05px">00:27:28:12</div>
<svg style="position:absolute;left:281px;top:276px;" width="637" height="6" viewBox="0 0 637 6"><rect x="10.10" y="0" width="1" height="6" fill="#8a8a8a"/><rect x="17.83" y="3" width="0.9" height="3" fill="#7a7a7a"/><rect x="25.57" y="3" width="0.9" height="3" fill="#7a7a7a"/><rect x="33.30" y="3" width="0.9" height="3" fill="#7a7a7a"/><rect x="41.03" y="3" width="0.9" height="3" fill="#7a7a7a"/><rect x="48.77" y="3" width="0.9" height="3" fill="#7a7a7a"/><rect x="56.50" y="3" width="0.9" height="3" fill="#7a7a7a"/><rect x="64.23" y="3" width="0.9" height="3" fill="#7a7a7a"/><rect x="71.97" y="3" width="0.9" height="3" fill="#7a7a7a"/><rect x="79.70" y="3" width="0.9" height="3" fill="#7a7a7a"/><rect x="87.43" y="3" width="0.9" height="3" fill="#7a7a7a"/><rect x="95.17" y="3" width="0.9" height="3" fill="#7a7a7a"/><rect x="102.90" y="3" width="0.9" height="3" fill="#7a7a7a"/><rect x="110.63" y="3" width="0.9" height="3" fill="#7a7a7a"/><rect x="118.37" y="3" width="0.9" height="3" fill="#7a7a7a"/><rect x="126.10" y="0" width="1" height="6" fill="#8a8a8a"/><rect x="133.83" y="3" width="0.9" height="3" fill="#7a7a7a"/><rect x="141.57" y="3" width="0.9" height="3" fill="#7a7a7a"/><rect x="149.30" y="3" width="0.9" height="3" fill="#7a7a7a"/><rect x="157.03" y="3" width="0.9" height="3" fill="#7a7a7a"/><rect x="164.77" y="3" width="0.9" height="3" fill="#7a7a7a"/><rect x="172.50" y="3" width="0.9" height="3" fill="#7a7a7a"/><rect x="180.23" y="3" width="0.9" height="3" fill="#7a7a7a"/><rect x="187.97" y="3" width="0.9" height="3" fill="#7a7a7a"/><rect x="195.70" y="3" width="0.9" height="3" fill="#7a7a7a"/><rect x="203.43" y="3" width="0.9" height="3" fill="#7a7a7a"/><rect x="211.17" y="3" width="0.9" height="3" fill="#7a7a7a"/><rect x="218.90" y="3" width="0.9" height="3" fill="#7a7a7a"/><rect x="226.63" y="3" width="0.9" height="3" fill="#7a7a7a"/><rect x="234.37" y="3" width="0.9" height="3" fill="#7a7a7a"/><rect x="242.10" y="0" width="1" height="6" fill="#8a8a8a"/><rect x="249.83" y="3" width="0.9" height="3" fill="#7a7a7a"/><rect x="257.57" y="3" width="0.9" height="3" fill="#7a7a7a"/><rect x="265.30" y="3" width="0.9" height="3" fill="#7a7a7a"/><rect x="273.03" y="3" width="0.9" height="3" fill="#7a7a7a"/><rect x="280.77" y="3" width="0.9" height="3" fill="#7a7a7a"/><rect x="288.50" y="3" width="0.9" height="3" fill="#7a7a7a"/><rect x="296.23" y="3" width="0.9" height="3" fill="#7a7a7a"/><rect x="303.97" y="3" width="0.9" height="3" fill="#7a7a7a"/><rect x="311.70" y="3" width="0.9" height="3" fill="#7a7a7a"/><rect x="319.43" y="3" width="0.9" height="3" fill="#7a7a7a"/><rect x="327.17" y="3" width="0.9" height="3" fill="#7a7a7a"/><rect x="334.90" y="3" width="0.9" height="3" fill="#7a7a7a"/><rect x="342.63" y="3" width="0.9" height="3" fill="#7a7a7a"/><rect x="350.37" y="3" width="0.9" height="3" fill="#7a7a7a"/><rect x="358.10" y="0" width="1" height="6" fill="#8a8a8a"/><rect x="365.83" y="3" width="0.9" height="3" fill="#7a7a7a"/><rect x="373.57" y="3" width="0.9" height="3" fill="#7a7a7a"/><rect x="381.30" y="3" width="0.9" height="3" fill="#7a7a7a"/><rect x="389.03" y="3" width="0.9" height="3" fill="#7a7a7a"/><rect x="396.77" y="3" width="0.9" height="3" fill="#7a7a7a"/><rect x="404.50" y="3" width="0.9" height="3" fill="#7a7a7a"/><rect x="412.23" y="3" width="0.9" height="3" fill="#7a7a7a"/><rect x="419.97" y="3" width="0.9" height="3" fill="#7a7a7a"/><rect x="427.70" y="3" width="0.9" height="3" fill="#7a7a7a"/><rect x="435.43" y="3" width="0.9" height="3" fill="#7a7a7a"/><rect x="443.17" y="3" width="0.9" height="3" fill="#7a7a7a"/><rect x="450.90" y="3" width="0.9" height="3" fill="#7a7a7a"/><rect x="458.63" y="3" width="0.9" height="3" fill="#7a7a7a"/><rect x="466.37" y="3" width="0.9" height="3" fill="#7a7a7a"/><rect x="474.10" y="0" width="1" height="6" fill="#8a8a8a"/><rect x="481.83" y="3" width="0.9" height="3" fill="#7a7a7a"/><rect x="489.57" y="3" width="0.9" height="3" fill="#7a7a7a"/><rect x="497.30" y="3" width="0.9" height="3" fill="#7a7a7a"/><rect x="505.03" y="3" width="0.9" height="3" fill="#7a7a7a"/><rect x="512.77" y="3" width="0.9" height="3" fill="#7a7a7a"/><rect x="520.50" y="3" width="0.9" height="3" fill="#7a7a7a"/><rect x="528.23" y="3" width="0.9" height="3" fill="#7a7a7a"/><rect x="535.97" y="3" width="0.9" height="3" fill="#7a7a7a"/><rect x="543.70" y="3" width="0.9" height="3" fill="#7a7a7a"/><rect x="551.43" y="3" width="0.9" height="3" fill="#7a7a7a"/><rect x="559.17" y="3" width="0.9" height="3" fill="#7a7a7a"/><rect x="566.90" y="3" width="0.9" height="3" fill="#7a7a7a"/><rect x="574.63" y="3" width="0.9" height="3" fill="#7a7a7a"/><rect x="582.37" y="3" width="0.9" height="3" fill="#7a7a7a"/><rect x="590.10" y="0" width="1" height="6" fill="#8a8a8a"/><rect x="597.83" y="3" width="0.9" height="3" fill="#7a7a7a"/><rect x="605.57" y="3" width="0.9" height="3" fill="#7a7a7a"/><rect x="613.30" y="3" width="0.9" height="3" fill="#7a7a7a"/><rect x="621.03" y="3" width="0.9" height="3" fill="#7a7a7a"/><rect x="628.77" y="3" width="0.9" height="3" fill="#7a7a7a"/><rect x="636.50" y="3" width="0.9" height="3" fill="#7a7a7a"/></svg>
<svg style="position:absolute;left:474.5px;top:275.5px;" width="7" height="7" viewBox="0 0 7 7"><path d="M0.5 0.5 L6.5 0.5 L6.5 4.5 L3.5 6.8 L0.5 4.5Z" fill="#3a8ee8"/><rect x="2" y="1.5" width="0.8" height="3" fill="#bfe0ff"/><rect x="4.2" y="1.5" width="0.8" height="3" fill="#bfe0ff"/></svg>
<div style="left:291px;top:289px;width:627px;height:6.5px;background:#474747"></div>
<div style="left:290.6px;top:289px;width:7px;height:7px;border-radius:50%;border:1.3px solid #d8d8d8;background:#111"></div>
<svg style="position:absolute;left:504.5px;top:299.2px;" width="9" height="9" viewBox="0 0 9 9"><rect x="1" y="1" width="5.5" height="6.5" fill="none" stroke="#bcbcbc" stroke-width="0.9"/><rect x="2.2" y="2.4" width="3" height="0.8" fill="#bcbcbc"/><circle cx="5.5" cy="5.8" r="1.8" fill="#1e1e1e" stroke="#bcbcbc" stroke-width="0.9"/><path d="M6.7 7 L8.3 8.5" stroke="#bcbcbc" stroke-width="1"/></svg>
<svg style="position:absolute;left:519.9px;top:299.2px;" width="9" height="9" viewBox="0 0 9 9"><path d="M2.3 2.4 L6.7 2.4 L6.7 5.3 L4.5 6.9 L2.3 5.3Z" fill="#bcbcbc"/></svg>
<svg style="position:absolute;left:537px;top:299.2px;" width="9" height="9" viewBox="0 0 9 9"><path d="M5.6 1.3 L4.7 1.3 L4.3 1.7 L4.3 3.9 L3.3 4.5 L4.3 5.1 L4.3 7.3 L4.7 7.7 L5.6 7.7" stroke="#bcbcbc" stroke-width="0.85" fill="none"/></svg>
<svg style="position:absolute;left:551.4px;top:299.2px;" width="9" height="9" viewBox="0 0 9 9"><path d="M3.4 1.3 L4.3 1.3 L4.7 1.7 L4.7 3.9 L5.7 4.5 L4.7 5.1 L4.7 7.3 L4.3 7.7 L3.4 7.7" stroke="#bcbcbc" stroke-width="0.85" fill="none"/></svg>
<svg style="position:absolute;left:576.8px;top:299.2px;" width="9" height="9" viewBox="0 0 9 9"><path d="M2.3 1.3 L1.5 1.3 L1.1 1.7 L1.1 3.9 L0.3 4.5 L1.1 5.1 L1.1 7.3 L1.5 7.7 L2.3 7.7" stroke="#bcbcbc" stroke-width="0.85" fill="none"/><path d="M2.6 4.5 L4.8 2.6 L4.8 3.9 L8.3 3.9 L8.3 5.1 L4.8 5.1 L4.8 6.4Z" fill="#bcbcbc"/></svg>
<svg style="position:absolute;left:592.5px;top:299.2px;" width="9" height="9" viewBox="0 0 9 9"><path d="M6.5 1.8 L2.8 4.5 L6.5 7.2Z" fill="#bcbcbc"/><rect x="7" y="1.8" width="1.1" height="5.4" fill="#bcbcbc"/></svg>
<svg style="position:absolute;left:607.5px;top:299.2px;" width="9" height="9" viewBox="0 0 9 9"><path d="M2.5 1.5 L7 4.5 L2.5 7.5Z" fill="#bcbcbc"/></svg>
<svg style="position:absolute;left:623.2px;top:299.2px;" width="9" height="9" viewBox="0 0 9 9"><rect x="0.9" y="1.8" width="1.1" height="5.4" fill="#bcbcbc"/><path d="M2.5 1.8 L6.2 4.5 L2.5 7.2Z" fill="#bcbcbc"/></svg>
<svg style="position:absolute;left:639.2px;top:299.2px;" width="9" height="9" viewBox="0 0 9 9"><path d="M6.7 1.3 L7.5 1.3 L7.9 1.7 L7.9 3.9 L8.7 4.5 L7.9 5.1 L7.9 7.3 L7.5 7.7 L6.7 7.7" stroke="#bcbcbc" stroke-width="0.85" fill="none"/><path d="M6.4 4.5 L4.2 2.6 L4.2 3.9 L0.7 3.9 L0.7 5.1 L4.2 5.1 L4.2 6.4Z" fill="#bcbcbc"/></svg>
<svg style="position:absolute;left:663px;top:299.2px;" width="9" height="9" viewBox="0 0 9 9"><rect x="0.5" y="4" width="3.6" height="3.8" fill="#bcbcbc"/><rect x="4.9" y="4" width="3.6" height="3.8" fill="#bcbcbc"/><rect x="2.6" y="1" width="3.8" height="2.4" fill="#bcbcbc"/></svg>
<svg style="position:absolute;left:678.7px;top:299.2px;" width="9" height="9" viewBox="0 0 9 9"><rect x="0.5" y="4.5" width="3.6" height="3.3" fill="#bcbcbc"/><rect x="4.9" y="4.5" width="3.6" height="3.3" fill="#bcbcbc"/><path d="M2.6 3.5 L4.5 1 L6.4 3.5Z" fill="#bcbcbc"/></svg>
<svg style="position:absolute;left:694.7px;top:299.2px;" width="9" height="9" viewBox="0 0 9 9"><rect x="0.5" y="2.5" width="8" height="5.5" rx="0.8" fill="#bcbcbc"/><rect x="3" y="1.5" width="3" height="1.5" fill="#bcbcbc"/><circle cx="4.5" cy="5.2" r="1.6" fill="#1e1e1e"/><circle cx="4.5" cy="5.2" r="0.8" fill="#bcbcbc"/></svg>
<svg style="position:absolute;left:710.5px;top:299.2px;" width="9" height="9" viewBox="0 0 9 9"><rect x="0.5" y="1" width="5" height="4.5" fill="#bcbcbc"/><rect x="3.5" y="3.5" width="5" height="5" fill="#1e1e1e" stroke="#bcbcbc" stroke-width="0.9"/></svg>
<svg style="position:absolute;left:726.7px;top:299.2px;" width="9" height="9" viewBox="0 0 9 9"><path d="M2 1.5 L6.5 1.5 L8 3 L8 7.5 L2 7.5Z" stroke="#bcbcbc" stroke-width="0.9" fill="none"/><circle cx="5" cy="5" r="1.3" fill="#bcbcbc"/></svg>
<svg style="position:absolute;left:437px;top:54px;" width="350" height="196.5" viewBox="0 0 350 196.5"><rect x="0" y="0" width="350" height="196.5" fill="#f6f6f6"/><rect x="0" y="0" width="27.6" height="196.5" fill="#4a4a4f"/><circle cx="3.10" cy="3.2" r="1.05" fill="#e0443e"/><circle cx="6.00" cy="3.2" r="1.05" fill="#dea123"/><circle cx="8.90" cy="3.2" r="1.05" fill="#1aab29"/><rect x="19.00" y="2.30" width="2.40" height="1.80" fill="#7a7a7a"/><rect x="23.50" y="2.90" width="2.00" height="0.70" fill="#7a7a7a"/><rect x="0.80" y="6.10" width="5.6" height="5.6" rx="0.8" fill="#58585d"/><circle cx="3.60" cy="8.90" r="1.3" fill="#c05a9a"/><rect x="7.60" y="6.10" width="5.6" height="5.6" rx="0.8" fill="#58585d"/><circle cx="10.40" cy="8.90" r="1.3" fill="#6a6aaa"/><rect x="14.40" y="6.10" width="5.6" height="5.6" rx="0.8" fill="#58585d"/><circle cx="17.20" cy="8.90" r="1.3" fill="#d8d8d8"/><rect x="21.20" y="6.10" width="5.6" height="5.6" rx="0.8" fill="#58585d"/><circle cx="24.00" cy="8.90" r="1.3" fill="#3a8a6a"/><rect x="0.80" y="12.65" width="5.6" height="5.6" rx="0.8" fill="#58585d"/><circle cx="3.60" cy="15.45" r="1.3" fill="#c03a6a"/><rect x="7.60" y="12.65" width="5.6" height="5.6" rx="0.8" fill="#58585d"/><circle cx="10.40" cy="15.45" r="1.3" fill="#d8d8d8"/><rect x="14.40" y="12.65" width="5.6" height="5.6" rx="0.8" fill="#58585d"/><circle cx="17.20" cy="15.45" r="1.3" fill="#c8c8c8"/><rect x="21.20" y="12.65" width="5.6" height="5.6" rx="0.8" fill="#58585d"/><circle cx="24.00" cy="15.45" r="1.3" fill="#3a7ae0"/><rect x="0.80" y="19.20" width="5.6" height="5.6" rx="0.8" fill="#58585d"/><circle cx="3.60" cy="22.00" r="1.3" fill="#2a6a8a"/><rect x="7.60" y="19.20" width="5.6" height="5.6" rx="0.8" fill="#58585d"/><circle cx="10.40" cy="22.00" r="1.3" fill="#3a5ae0"/><rect x="14.40" y="19.20" width="5.6" height="5.6" rx="0.8" fill="#58585d"/><circle cx="17.20" cy="22.00" r="1.3" fill="#2a2a2a"/><rect x="21.20" y="19.20" width="5.6" height="5.6" rx="0.8" fill="#58585d"/><circle cx="24.00" cy="22.00" r="1.3" fill="#3a8ae0"/><rect x="0.80" y="25.75" width="5.6" height="5.6" rx="0.8" fill="#58585d"/><circle cx="3.60" cy="28.55" r="1.3" fill="#c03a8a"/><rect x="7.60" y="25.75" width="5.6" height="5.6" rx="0.8" fill="#58585d"/><circle cx="10.40" cy="28.55" r="1.3" fill="#e8a8a0"/><rect x="14.40" y="25.75" width="5.6" height="5.6" rx="0.8" fill="#58585d"/><circle cx="17.20" cy="28.55" r="1.3" fill="#b06a3a"/><rect x="21.20" y="25.75" width="5.6" height="5.6" rx="0.8" fill="#58585d"/><circle cx="24.00" cy="28.55" r="1.3" fill="#c04a6a"/><rect x="1" y="32.9" width="25.5" height="3.6" rx="0.8" fill="#151515"/><circle cx="2.8" cy="34.7" r="0.9" fill="#c04ac0"/><rect x="4.50" y="34.20" width="20.00" height="1.00" fill="#d0d0d0"/><circle cx="2.8" cy="39.9" r="0.9" fill="#4a8ae0"/><rect x="4.50" y="39.40" width="20.00" height="1.00" fill="#b8b8b8"/><rect x="2.20" y="44.50" width="1.00" height="1.00" fill="#9a9a9a"/><rect x="4.50" y="44.50" width="8.00" height="1.00" fill="#9a9a9a"/><rect x="27.6" y="0" width="322.4" height="5.8" fill="#1b1b1b"/><rect x="30.50" y="2.40" width="1.20" height="1.00" fill="#8a8a8a"/><rect x="33.00" y="2.40" width="1.20" height="1.00" fill="#8a8a8a"/><rect x="36.00" y="2.20" width="1.60" height="1.40" fill="#8a8a8a"/><rect x="43.50" y="2.30" width="21.00" height="1.20" fill="#d8d8d8"/><rect x="65.50" y="2.30" width="20.00" height="1.20" fill="#9a9a9a"/><rect x="325.00" y="2.10" width="2.00" height="1.50" fill="#d0d0d0"/><rect x="329.00" y="2.10" width="2.00" height="1.50" fill="#d0d0d0"/><rect x="333.00" y="2.10" width="1.80" height="1.50" fill="#e04030"/><rect x="336.00" y="1.80" width="10.00" height="2.20" fill="#4a4a4a"/><rect x="27.6" y="5.8" width="322.4" height="7" fill="#2040ee"/><rect x="30.80" y="7.60" width="1.80" height="0.50" fill="#e8e8ff"/><rect x="30.80" y="8.90" width="1.80" height="0.50" fill="#e8e8ff"/><rect x="30.80" y="10.20" width="1.80" height="0.50" fill="#e8e8ff"/><rect x="35.00" y="8.80" width="14.00" height="1.30" fill="#e8ecff"/><rect x="50.50" y="8.60" width="1.00" height="1.80" fill="#e8ecff"/><rect x="53.00" y="8.80" width="6.00" height="1.30" fill="#e8ecff"/><rect x="295.00" y="7.60" width="1.60" height="3.00" fill="#ffffff"/><rect x="298.00" y="7.40" width="8.00" height="0.80" fill="#e8ecff"/><rect x="298.00" y="9.30" width="20.00" height="1.00" fill="#e8ecff"/><rect x="325.50" y="8.60" width="2.50" height="1.20" fill="#d8dcff"/><rect x="332.40" y="8.40" width="2.50" height="1.60" fill="#ffffff"/><rect x="339.00" y="8.30" width="2.20" height="1.60" fill="#d8dcff"/><circle cx="346.5" cy="9.3" r="2.6" fill="#f0e8e0"/><circle cx="346.5" cy="8.6" r="1.3" fill="#2a2020"/><rect x="27.6" y="12.8" width="322.4" height="6.2" fill="#ffffff"/><rect x="31.00" y="15.30" width="8.00" height="1.10" fill="#9a9a9a"/><rect x="44.00" y="15.30" width="10.00" height="1.10" fill="#9a9a9a"/><rect x="55.00" y="15.30" width="10.00" height="1.10" fill="#9a9a9a"/><rect x="69.00" y="15.30" width="12.00" height="1.10" fill="#9a9a9a"/><rect x="83.00" y="15.30" width="14.00" height="1.10" fill="#9a9a9a"/><rect x="97.00" y="15.30" width="14.00" height="1.10" fill="#9a9a9a"/><rect x="113.00" y="15.30" width="13.00" height="1.10" fill="#9a9a9a"/><rect x="127.00" y="15.30" width="14.00" height="1.10" fill="#9a9a9a"/><rect x="288.50" y="15.30" width="8.00" height="1.10" fill="#a8a8a8"/><rect x="300.00" y="14.60" width="1.60" height="2.40" fill="#a02080"/><rect x="306.80" y="15.00" width="2.00" height="1.60" fill="#b0b0b0"/><rect x="313.20" y="15.00" width="2.00" height="1.60" fill="#b0b0b0"/><rect x="319.80" y="15.00" width="2.00" height="1.60" fill="#b0b0b0"/><rect x="326.60" y="15.00" width="2.00" height="1.60" fill="#b0b0b0"/><rect x="333.50" y="15.00" width="2.00" height="1.60" fill="#b0b0b0"/><rect x="337.00" y="15.30" width="3.00" height="1.00" fill="#c8c8c8"/><rect x="343.50" y="15.00" width="2.00" height="1.60" fill="#b0b0b0"/><rect x="27.6" y="18.6" width="322.4" height="0.4" fill="#e6e6e6"/><rect x="27.6" y="19" width="7.4" height="177.5" fill="#ffffff"/><rect x="35" y="19" width="37" height="177.5" fill="#fdfdfd"/><rect x="71.6" y="19" width="0.5" height="177.5" fill="#e8e8e8"/><rect x="34.8" y="19" width="0.4" height="177.5" fill="#ececec"/><rect x="31" y="19.2" width="26" height="3.2" rx="0.6" fill="#ffffff" stroke="#dcdcdc" stroke-width="0.35"/><rect x="32.00" y="20.40" width="4.00" height="0.80" fill="#b0b0b0"/><rect x="58.50" y="20.40" width="1.00" height="0.90" fill="#a0a0a0"/><rect x="61.50" y="20.20" width="1.50" height="1.30" fill="#8a8a8a"/><rect x="30.50" y="27.40" width="2.00" height="1.30" fill="#a02060"/><rect x="30.50" y="33.80" width="2.00" height="1.30" fill="#9a9a9a"/><rect x="30.50" y="40.40" width="2.00" height="1.30" fill="#9a9a9a"/><rect x="30.50" y="46.60" width="2.00" height="1.30" fill="#9a9a9a"/><rect x="30.50" y="53.00" width="2.00" height="1.30" fill="#b0b0b0"/><rect x="37.00" y="29.40" width="8.50" height="1.60" fill="#4a4a4a"/><rect x="37.00" y="34.00" width="3.00" height="0.80" fill="#7a7a7a"/><rect x="42.00" y="34.00" width="5.00" height="0.80" fill="#9a9a9a"/><rect x="36.5" y="35.2" width="4" height="0.4" fill="#2040ee"/><rect x="36.5" y="37.2" width="34" height="3" rx="0.5" fill="#ffffff" stroke="#e2e2e2" stroke-width="0.3"/><rect x="38.50" y="38.20" width="5.00" height="0.90" fill="#b0b0b0"/><rect x="38.00" y="42.60" width="1.50" height="0.90" fill="#8a8a8a"/><rect x="40.50" y="42.60" width="6.00" height="0.90" fill="#8a8a8a"/><rect x="38.00" y="47.00" width="1.50" height="1.00" fill="#a8a8a8"/><rect x="41.20" y="47.00" width="6.00" height="0.90" fill="#9a9a9a"/><rect x="39.50" y="51.50" width="1.50" height="1.00" fill="#a8a8a8"/><rect x="42.70" y="51.50" width="6.00" height="0.90" fill="#a0a0a0"/><rect x="38.00" y="56.00" width="1.50" height="1.00" fill="#a8a8a8"/><rect x="41.20" y="56.00" width="6.00" height="0.90" fill="#8a8a8a"/><rect x="36" y="58.9" width="36" height="3.6" fill="#ececec"/><rect x="39.50" y="60.60" width="1.50" height="1.00" fill="#a8a8a8"/><rect x="42.70" y="60.60" width="18.00" height="0.90" fill="#7a7a7a"/><rect x="40.50" y="65.30" width="1.50" height="1.00" fill="#a8a8a8"/><rect x="43.70" y="65.30" width="17.00" height="0.90" fill="#a0a0a0"/><rect x="40.50" y="69.80" width="1.50" height="1.00" fill="#a8a8a8"/><rect x="43.70" y="69.80" width="14.00" height="0.90" fill="#a0a0a0"/><rect x="43.00" y="74.40" width="1.50" height="1.00" fill="#a8a8a8"/><rect x="46.20" y="74.40" width="5.00" height="0.90" fill="#a0a0a0"/><rect x="40.50" y="79.20" width="1.50" height="1.00" fill="#a8a8a8"/><rect x="43.70" y="79.20" width="15.00" height="0.90" fill="#a0a0a0"/><rect x="40.50" y="83.80" width="1.50" height="1.00" fill="#a8a8a8"/><rect x="43.70" y="83.80" width="14.00" height="0.90" fill="#a0a0a0"/><rect x="72.1" y="19" width="277.9" height="13" fill="#ffffff"/><rect x="75.20" y="20.20" width="2.30" height="2.30" fill="#3a6ae0"/><rect x="76.50" y="21.50" width="1.30" height="1.30" fill="#e04080"/><rect x="79.00" y="20.60" width="65.00" height="0.80" fill="#a8a8a8"/><rect x="79.00" y="22.40" width="9.00" height="1.20" fill="#8a9a8a"/><rect x="89.00" y="22.60" width="8.00" height="0.80" fill="#b0b0b0"/><rect x="342.5" y="19" width="0.4" height="13" fill="#e0e0e0"/><rect x="344.80" y="19.50" width="0.60" height="2.00" fill="#b0b0b0"/><rect x="346.20" y="22.30" width="1.00" height="1.00" fill="#a8a8a8"/><rect x="72.1" y="32" width="272" height="8.2" fill="#eeeeee"/><rect x="74.50" y="34.20" width="9.00" height="0.90" fill="#9a9a9a"/><rect x="86.00" y="34.20" width="13.00" height="0.90" fill="#9a9a9a"/><rect x="101.50" y="34.20" width="13.00" height="0.90" fill="#9a9a9a"/><rect x="72.1" y="36.6" width="272" height="0.3" fill="#e0e0e0"/><rect x="74.50" y="38.40" width="13.00" height="0.90" fill="#a0a0a0"/><rect x="90.00" y="38.40" width="10.00" height="0.90" fill="#a0a0a0"/><rect x="72.1" y="40.2" width="234" height="151" fill="#f5f5f5"/><rect x="85.2" y="48.3" width="206.4" height="116.2" fill="#ffffff" stroke="#9a9a9a" stroke-width="0.7"/><path d="M85.2 164.5 L85.2 48.3 L291.6 48.3 L291.6 153" stroke="#6ab86a" stroke-width="0.9" fill="none"/><rect x="85.7" y="48.8" width="25.8" height="104.5" fill="#f0f0f0"/><rect x="111.3" y="48.8" width="0.35" height="115" fill="#dedede"/><rect x="85.7" y="153" width="205.5" height="0.4" fill="#c8c8c8"/><rect x="85.7" y="157.6" width="205.5" height="0.35" fill="#d0d0d0"/><rect x="90.50" y="163.50" width="0.35" height="0.90" fill="#c8c8c8"/><rect x="93.50" y="160.20" width="9.00" height="0.90" fill="#7a7a7a"/><rect x="88.50" y="55.70" width="1.00" height="1.00" fill="#3a5ae0"/><rect x="91.00" y="55.50" width="5.00" height="1.30" fill="#5a5a5a"/><path d="M100.5 52.5 L103.5 61 L105.5 56 L107.5 61 L110 52.5 L108 52.5 L107 56.5 L105.5 53 L104 56.5 L102.8 52.5Z" fill="#e8a040"/><path d="M103 55 L105.5 60 L108 55" stroke="#f0d040" stroke-width="0.9" fill="none"/><rect x="87.00" y="59.50" width="6.00" height="0.80" fill="#9a9a9a"/><circle cx="89.8" cy="65.40" r="1.4" fill="none" stroke="#9a9a9a" stroke-width="0.5"/><rect x="93.00" y="65.00" width="7.00" height="1.00" fill="#8a8a8a"/><circle cx="89.8" cy="71.70" r="1.4" fill="none" stroke="#9a9a9a" stroke-width="0.5"/><rect x="93.00" y="71.30" width="13.00" height="1.00" fill="#8a8a8a"/><circle cx="89.8" cy="78.20" r="1.4" fill="none" stroke="#9a9a9a" stroke-width="0.5"/><rect x="93.00" y="77.80" width="10.00" height="1.00" fill="#8a8a8a"/><rect x="87.00" y="85.00" width="11.00" height="0.80" fill="#9a9a9a"/><circle cx="89.8" cy="90.40" r="1.3" fill="none" stroke="#a0a0a0" stroke-width="0.5"/><rect x="93.00" y="90.00" width="8.00" height="1.00" fill="#8a8a8a"/><circle cx="89.8" cy="96.40" r="1.3" fill="none" stroke="#a0a0a0" stroke-width="0.5"/><rect x="93.00" y="96.00" width="10.00" height="1.00" fill="#8a8a8a"/><circle cx="89.8" cy="102.60" r="1.3" fill="none" stroke="#a0a0a0" stroke-width="0.5"/><rect x="93.00" y="102.20" width="8.00" height="1.00" fill="#8a8a8a"/><rect x="200.50" y="96.50" width="0.50" height="0.50" fill="#a0a0a0"/><rect x="306.3" y="40.2" width="43.7" height="151" fill="#fbfbfb"/><rect x="306.3" y="40.2" width="0.35" height="151" fill="#e6e6e6"/><rect x="309.00" y="43.20" width="5.50" height="0.90" fill="#8a8a8a"/><rect x="309" y="45" width="6" height="0.4" fill="#5a5a5a"/><rect x="318.00" y="43.00" width="6.00" height="0.80" fill="#a0a0a0"/><rect x="309.00" y="49.50" width="10.00" height="0.80" fill="#c4c4c4"/><rect x="309.00" y="53.80" width="13.00" height="0.80" fill="#c4c4c4"/><rect x="309.00" y="58.20" width="10.00" height="0.80" fill="#c4c4c4"/><rect x="309.00" y="62.50" width="4.00" height="0.80" fill="#c4c4c4"/><rect x="309.00" y="66.90" width="12.00" height="0.80" fill="#c4c4c4"/><rect x="309.00" y="71.20" width="11.00" height="0.80" fill="#c4c4c4"/><rect x="309.00" y="75.50" width="4.00" height="0.80" fill="#c4c4c4"/><rect x="309.00" y="82.00" width="7.00" height="0.80" fill="#c4c4c4"/><rect x="309.00" y="86.50" width="4.00" height="0.80" fill="#c4c4c4"/><rect x="309.00" y="91.00" width="6.00" height="0.80" fill="#c4c4c4"/><rect x="309.00" y="95.50" width="5.00" height="0.80" fill="#c4c4c4"/><rect x="309.00" y="104.00" width="4.00" height="0.80" fill="#c4c4c4"/><rect x="309.00" y="108.60" width="6.00" height="0.80" fill="#c4c4c4"/><rect x="309.00" y="113.00" width="8.00" height="0.80" fill="#c4c4c4"/><rect x="309.00" y="117.50" width="10.00" height="0.80" fill="#c4c4c4"/><rect x="309.00" y="123.00" width="5.00" height="0.80" fill="#c4c4c4"/><rect x="327.50" y="49.00" width="14.00" height="1.80" fill="#f0f0f0"/><rect x="327.50" y="53.40" width="2.80" height="1.80" fill="#c8c8c8"/><rect x="332.00" y="53.60" width="1.50" height="1.20" fill="#a0a0a0"/><rect x="337.00" y="53.60" width="1.50" height="1.20" fill="#a0a0a0"/><rect x="341.00" y="53.60" width="1.50" height="1.20" fill="#a0a0a0"/><rect x="327.50" y="57.80" width="2.80" height="1.80" fill="#c8c8c8"/><rect x="332.00" y="58.00" width="1.50" height="1.20" fill="#a0a0a0"/><rect x="337.00" y="58.00" width="1.50" height="1.20" fill="#a0a0a0"/><rect x="341.00" y="58.00" width="1.50" height="1.20" fill="#a0a0a0"/><rect x="328.00" y="71.00" width="4.00" height="0.80" fill="#a8a8a8"/><rect x="328.00" y="75.30" width="4.00" height="0.80" fill="#a8a8a8"/><rect x="338.00" y="75.00" width="2.00" height="1.40" fill="#9a6a4a"/><rect x="341.50" y="118.50" width="4.50" height="1.80" fill="#111111"/><rect x="337.00" y="123.00" width="2.50" height="1.20" fill="#a0a0a0"/><rect x="341.00" y="123.00" width="2.00" height="1.20" fill="#a0a0a0"/><rect x="306.6" y="80" width="43" height="0.3" fill="#ececec"/><rect x="306.6" y="101" width="43" height="0.3" fill="#ececec"/><rect x="306.6" y="128" width="43" height="0.3" fill="#ececec"/><rect x="72.1" y="191" width="277.9" height="5.5" fill="#ffffff"/><rect x="72.1" y="191" width="277.9" height="0.3" fill="#e4e4e4"/><rect x="75.00" y="193.00" width="1.60" height="1.60" fill="#a0a0a0"/><rect x="78.00" y="193.30" width="6.00" height="0.90" fill="#b0b0b0"/><rect x="92.00" y="193.00" width="1.60" height="1.60" fill="#a0a0a0"/><rect x="95.00" y="193.30" width="10.00" height="0.90" fill="#b0b0b0"/><rect x="255.00" y="193.00" width="1.80" height="1.80" fill="#6a3ac0"/><rect x="258.50" y="193.00" width="1.60" height="1.60" fill="#b0b0b0"/><rect x="262.50" y="193.00" width="1.60" height="1.60" fill="#b0b0b0"/><rect x="266.50" y="193.00" width="1.60" height="1.60" fill="#b0b0b0"/><rect x="272.00" y="193.60" width="2.00" height="0.60" fill="#b0b0b0"/><rect x="276.00" y="193.60" width="15.00" height="0.50" fill="#b0b0b0"/><rect x="283.00" y="193.00" width="1.40" height="1.40" fill="#404040"/><rect x="294.00" y="193.40" width="5.00" height="0.90" fill="#a0a0a0"/><rect x="303.00" y="193.00" width="1.50" height="1.50" fill="#a0a0a0"/><rect x="349.2" y="0" width="0.8" height="196.5" fill="#1a1a1a"/><defs><clipPath id="wc"><rect x="9.8" y="126" width="61.7" height="61" rx="7.5"/></clipPath>
<filter id="bl" x="-5%" y="-5%" width="110%" height="110%"><feGaussianBlur stdDeviation="0.45"/></filter>
<filter id="sh" x="-20%" y="-20%" width="140%" height="140%"><feGaussianBlur stdDeviation="1.2"/></filter></defs><rect x="9.8" y="126.8" width="61.7" height="61" rx="7.5" fill="#000" opacity=".45" filter="url(#sh)"/><g clip-path="url(#wc)"><g filter="url(#bl)"><rect x="9" y="125" width="64" height="64" fill="#84766a"/><rect x="9" y="125" width="7" height="64" fill="#6e6258"/><rect x="15.6" y="126.5" width="16.1" height="21.7" fill="#3a3028"/><rect x="17" y="128" width="13.3" height="18.8" fill="#cdb9a0"/><path d="M18.5 131 L21 129.5 L23 134 L25.5 130 L28.5 133 L28 144 L24 141 L20 145 L18.5 140Z" fill="#7a4a2a"/><path d="M21 135 L26 134 L25 140 L22 139Z" fill="#3a2a20"/><rect x="33" y="125" width="10" height="10" fill="#9a8c80"/><rect x="43" y="125" width="30" height="9" fill="#242020"/><rect x="53" y="125" width="20" height="26" fill="#181616"/><rect x="60.5" y="138" width="1.5" height="12" fill="#5a4a3a"/><rect x="64" y="138" width="1.6" height="12" fill="#6a5a48"/><rect x="67.5" y="139" width="1.5" height="11" fill="#5a4a3a"/><rect x="56" y="150" width="17" height="13" fill="#c89868"/><rect x="60" y="152" width="10" height="8" fill="#e8c898"/><ellipse cx="17" cy="151" rx="7.5" ry="6" fill="#4c5a26"/><ellipse cx="13" cy="156" rx="4" ry="4" fill="#5a6a2e"/><ellipse cx="35" cy="149" rx="4" ry="3" fill="#56642c"/><rect x="9" y="160" width="17" height="29" fill="#282420"/><rect x="14" y="161" width="6" height="4" fill="#4a4030"/><path d="M20 189 L22 172 Q26 160 38 158.5 L49 158.5 Q62 160 66 170 L71.5 189Z" fill="#1a1a1c"/><g transform="translate(3.5,2.5)"><path d="M38.5 159 L40 152 L48 152 L49 159 Q44 163 38.5 159Z" fill="#a88a74"/><path d="M40.5 138 Q40 133 45 132.5 Q52 132.5 52.5 139 L53 150 Q51 158.5 45.5 158.5 Q41 158 40 150Z" fill="#d4b29a"/><path d="M43 140 L52 140 L52.5 152 Q50 157 46 157 Q43 156 42.5 150Z" fill="#e2c6b0"/><ellipse cx="39.8" cy="146" rx="1.9" ry="2.8" fill="#c49a80"/><path d="M38.5 144 Q37.5 132 46 131 Q53.5 131 54 137.5 L53 139.5 Q48 136.5 42 139 L41 146 Z" fill="#221c1a"/><path d="M42 144 L53.5 143.6" stroke="#5a5a5a" stroke-width="0.6"/></g><path d="M24 189 L25 174 Q29 162 41 161 L50 161 Q62 162 66 171 L71.5 189Z" fill="#1a1a1c"/><path d="M53 162 L58.5 166 L64 189 L54 189 L51 172Z" fill="#111113"/><ellipse cx="57.5" cy="166.5" rx="3.2" ry="2.2" fill="#3a6a98" transform="rotate(-30 57.5 166.5)"/><path d="M66 171 L71.5 172 L71.5 184 L65 184Z" fill="#c0a088"/><path d="M9 181 L17 179 L23 187 L9 189Z" fill="#b08a68"/></g></g></svg>
<div class="t" style="left:49.2px;top:320px;font-size:6.5px;color:#9a9a9a;line-height:9px">×</div>
<div style="left:57px;top:321.6px;width:5px;height:4.9px;background:#36621e"></div>
<div class="t" style="left:67px;top:320.3px;font-size:5.6px;font-weight:bold;color:#dadada;line-height:9px">Final</div>
<svg style="position:absolute;left:84px;top:322.6px;" width="5" height="5" viewBox="0 0 5 5"><rect x="0.5" y="0.5" width="4" height="0.8" fill="#6a6a6a"/><rect x="0.5" y="2.1" width="4" height="0.8" fill="#6a6a6a"/><rect x="0.5" y="3.7" width="4" height="0.8" fill="#6a6a6a"/></svg>
<div class="t" style="left:53.2px;top:332.2px;font-size:6.9px;font-weight:bold;color:#2d8ae6;letter-spacing:0.05px;line-height:10px">00:08:01:12</div>
<div style="left:50.5px;top:344px;width:12px;height:11.7px;background:#444444;border-radius:1.8px"></div>
<div style="left:66.1px;top:344px;width:12px;height:11.7px;background:#444444;border-radius:1.8px"></div>
<div style="left:82px;top:344px;width:12px;height:11.7px;background:#444444;border-radius:1.8px"></div>
<svg style="position:absolute;left:52px;top:345.5px;" width="9" height="9" viewBox="0 0 9 9"><path d="M4.5 1 L4.5 8" stroke="#cfcfcf" stroke-width="1"/><path d="M1 4.5 L8 4.5" stroke="#cfcfcf" stroke-width="1"/><path d="M2 3 L4.5 1.2 L7 3" stroke="#cfcfcf" stroke-width="0.9" fill="none"/><rect x="1.5" y="5.5" width="2.2" height="2.2" fill="#cfcfcf"/><rect x="5.3" y="5.5" width="2.2" height="2.2" fill="#cfcfcf"/></svg>
<svg style="position:absolute;left:67.6px;top:345.5px;" width="9" height="9" viewBox="0 0 9 9"><path d="M2.6 7.3 L2.6 4.6 Q2.6 2.0 4.5 2.0 Q6.4 2.0 6.4 4.6 L6.4 7.3" stroke="#c8c8c8" stroke-width="1.2" fill="none"/></svg>
<svg style="position:absolute;left:83.5px;top:345.5px;" width="9" height="9" viewBox="0 0 9 9"><path d="M1 1 L1 8 L8 8" stroke="#cfcfcf" stroke-width="0.9" fill="none"/><path d="M3 2 L7.5 5 L5.2 5.5 L6.5 8 L5.5 8.5 L4.3 6 L3 7.5Z" fill="#cfcfcf"/><rect x="5.5" y="1" width="3" height="2" fill="#cfcfcf"/></svg>
<svg style="position:absolute;left:99.4px;top:345.3px;" width="9" height="9" viewBox="0 0 9 9"><path d="M2.3 2.4 L6.7 2.4 L6.7 5.3 L4.5 6.9 L2.3 5.3Z" fill="#c4c4c4"/></svg>
<svg style="position:absolute;left:115.3px;top:345.3px;" width="9" height="9" viewBox="0 0 9 9"><path d="M7.8 7.6 L4.4 4.2" stroke="#c8c8c8" stroke-width="1.6" stroke-linecap="round"/><path d="M5 3.2 Q4.8 0.6 1.8 1 L3.2 2.4 L2.4 3.4 L1 2 Q0.6 5 3.4 4.6Z" fill="#c8c8c8"/></svg>
<svg style="position:absolute;left:131.2px;top:346.3px;" width="9" height="7" viewBox="0 0 9 7"><rect x="0.3" y="0.3" width="8.4" height="6.4" rx="1.6" fill="#555555"/><text x="1.5" y="5.1" font-family="Liberation Sans" font-weight="bold" font-size="4.2" fill="#222222">CC</text></svg>
<div style="left:50.5px;top:359.05px;width:849.5px;height:0.7px;background:#2b2b2b"></div>
<div style="left:50.5px;top:378.65px;width:849.5px;height:0.7px;background:#2b2b2b"></div>
<div style="left:50.5px;top:404.15px;width:849.5px;height:0.7px;background:#2b2b2b"></div>
<div style="left:50.5px;top:469.45px;width:849.5px;height:0.7px;background:#2b2b2b"></div>
<div style="left:50.5px;top:500.05px;width:849.5px;height:0.7px;background:#2b2b2b"></div>
<div style="left:50.5px;top:534.85px;width:849.5px;height:0.7px;background:#2b2b2b"></div>
<div style="left:45px;top:572.65px;width:855px;height:0.7px;background:#2b2b2b"></div>
<div style="left:45px;top:592.95px;width:855px;height:0.7px;background:#2b2b2b"></div>
<div style="left:45px;top:612.45px;width:855px;height:0.7px;background:#2b2b2b"></div>
<div style="left:45.5px;top:434.5px;width:854.5px;height:2.4px;background:#333333"></div>
<div style="left:145.3px;top:359.4px;width:0.7px;height:259.6px;background:#2a2a2a"></div>
<div style="left:147px;top:345px;width:753px;height:9px;overflow:hidden"><div class="t" style="left:-0.30px;top:0;font-size:5.8px;color:#dedede;line-height:9px">:00:00</div><div class="t" style="left:-5.70px;top:0;width:100px;text-align:center;font-size:5.8px;color:#dedede;line-height:9px">00:00:59:22</div><div class="t" style="left:38.90px;top:0;width:100px;text-align:center;font-size:5.8px;color:#dedede;line-height:9px">00:01:59:21</div><div class="t" style="left:83.50px;top:0;width:100px;text-align:center;font-size:5.8px;color:#dedede;line-height:9px">00:02:59:19</div><div class="t" style="left:128.10px;top:0;width:100px;text-align:center;font-size:5.8px;color:#dedede;line-height:9px">00:03:59:18</div><div class="t" style="left:172.70px;top:0;width:100px;text-align:center;font-size:5.8px;color:#dedede;line-height:9px">00:04:59:16</div><div class="t" style="left:217.30px;top:0;width:100px;text-align:center;font-size:5.8px;color:#dedede;line-height:9px">00:05:59:15</div><div class="t" style="left:261.90px;top:0;width:100px;text-align:center;font-size:5.8px;color:#dedede;line-height:9px">00:06:59:13</div><div class="t" style="left:306.50px;top:0;width:100px;text-align:center;font-size:5.8px;color:#dedede;line-height:9px">00:07:59:12</div><div class="t" style="left:351.10px;top:0;width:100px;text-align:center;font-size:5.8px;color:#dedede;line-height:9px">00:08:59:11</div><div class="t" style="left:395.70px;top:0;width:100px;text-align:center;font-size:5.8px;color:#dedede;line-height:9px">00:09:59:09</div><div class="t" style="left:440.30px;top:0;width:100px;text-align:center;font-size:5.8px;color:#dedede;line-height:9px">00:10:59:08</div><div class="t" style="left:484.90px;top:0;width:100px;text-align:center;font-size:5.8px;color:#dedede;line-height:9px">00:11:59:06</div><div class="t" style="left:529.50px;top:0;width:100px;text-align:center;font-size:5.8px;color:#dedede;line-height:9px">00:12:59:05</div><div class="t" style="left:574.10px;top:0;width:100px;text-align:center;font-size:5.8px;color:#dedede;line-height:9px">00:13:59:03</div><div class="t" style="left:618.70px;top:0;width:100px;text-align:center;font-size:5.8px;color:#dedede;line-height:9px">00:14:59:02</div><div class="t" style="left:663.30px;top:0;width:100px;text-align:center;font-size:5.8px;color:#dedede;line-height:9px">00:15:59:00</div><div class="t" style="left:707.90px;top:0;width:100px;text-align:center;font-size:5.8px;color:#dedede;line-height:9px">00:16:58:23</div></div>
<svg style="position:absolute;left:140px;top:353px;" width="762" height="6" viewBox="0 0 762 6"><rect x="5.10" y="0" width="0.8" height="5.4" fill="#a0a0a0"/><rect x="8.82" y="3" width="0.8" height="2.4" fill="#8c8c8c"/><rect x="12.53" y="3" width="0.8" height="2.4" fill="#8c8c8c"/><rect x="16.25" y="3" width="0.8" height="2.4" fill="#8c8c8c"/><rect x="19.97" y="3" width="0.8" height="2.4" fill="#8c8c8c"/><rect x="23.68" y="3" width="0.8" height="2.4" fill="#8c8c8c"/><rect x="27.40" y="3" width="0.8" height="2.4" fill="#8c8c8c"/><rect x="31.12" y="3" width="0.8" height="2.4" fill="#8c8c8c"/><rect x="34.83" y="3" width="0.8" height="2.4" fill="#8c8c8c"/><rect x="38.55" y="3" width="0.8" height="2.4" fill="#8c8c8c"/><rect x="42.27" y="3" width="0.8" height="2.4" fill="#8c8c8c"/><rect x="45.98" y="3" width="0.8" height="2.4" fill="#8c8c8c"/><rect x="49.70" y="0" width="0.8" height="5.4" fill="#a0a0a0"/><rect x="53.42" y="3" width="0.8" height="2.4" fill="#8c8c8c"/><rect x="57.13" y="3" width="0.8" height="2.4" fill="#8c8c8c"/><rect x="60.85" y="3" width="0.8" height="2.4" fill="#8c8c8c"/><rect x="64.57" y="3" width="0.8" height="2.4" fill="#8c8c8c"/><rect x="68.28" y="3" width="0.8" height="2.4" fill="#8c8c8c"/><rect x="72.00" y="3" width="0.8" height="2.4" fill="#8c8c8c"/><rect x="75.72" y="3" width="0.8" height="2.4" fill="#8c8c8c"/><rect x="79.43" y="3" width="0.8" height="2.4" fill="#8c8c8c"/><rect x="83.15" y="3" width="0.8" height="2.4" fill="#8c8c8c"/><rect x="86.87" y="3" width="0.8" height="2.4" fill="#8c8c8c"/><rect x="90.58" y="3" width="0.8" height="2.4" fill="#8c8c8c"/><rect x="94.30" y="0" width="0.8" height="5.4" fill="#a0a0a0"/><rect x="98.02" y="3" width="0.8" height="2.4" fill="#8c8c8c"/><rect x="101.73" y="3" width="0.8" height="2.4" fill="#8c8c8c"/><rect x="105.45" y="3" width="0.8" height="2.4" fill="#8c8c8c"/><rect x="109.17" y="3" width="0.8" height="2.4" fill="#8c8c8c"/><rect x="112.88" y="3" width="0.8" height="2.4" fill="#8c8c8c"/><rect x="116.60" y="3" width="0.8" height="2.4" fill="#8c8c8c"/><rect x="120.32" y="3" width="0.8" height="2.4" fill="#8c8c8c"/><rect x="124.03" y="3" width="0.8" height="2.4" fill="#8c8c8c"/><rect x="127.75" y="3" width="0.8" height="2.4" fill="#8c8c8c"/><rect x="131.47" y="3" width="0.8" height="2.4" fill="#8c8c8c"/><rect x="135.18" y="3" width="0.8" height="2.4" fill="#8c8c8c"/><rect x="138.90" y="0" width="0.8" height="5.4" fill="#a0a0a0"/><rect x="142.62" y="3" width="0.8" height="2.4" fill="#8c8c8c"/><rect x="146.33" y="3" width="0.8" height="2.4" fill="#8c8c8c"/><rect x="150.05" y="3" width="0.8" height="2.4" fill="#8c8c8c"/><rect x="153.77" y="3" width="0.8" height="2.4" fill="#8c8c8c"/><rect x="157.48" y="3" width="0.8" height="2.4" fill="#8c8c8c"/><rect x="161.20" y="3" width="0.8" height="2.4" fill="#8c8c8c"/><rect x="164.92" y="3" width="0.8" height="2.4" fill="#8c8c8c"/><rect x="168.63" y="3" width="0.8" height="2.4" fill="#8c8c8c"/><rect x="172.35" y="3" width="0.8" height="2.4" fill="#8c8c8c"/><rect x="176.07" y="3" width="0.8" height="2.4" fill="#8c8c8c"/><rect x="179.78" y="3" width="0.8" height="2.4" fill="#8c8c8c"/><rect x="183.50" y="0" width="0.8" height="5.4" fill="#a0a0a0"/><rect x="187.22" y="3" width="0.8" height="2.4" fill="#8c8c8c"/><rect x="190.93" y="3" width="0.8" height="2.4" fill="#8c8c8c"/><rect x="194.65" y="3" width="0.8" height="2.4" fill="#8c8c8c"/><rect x="198.37" y="3" width="0.8" height="2.4" fill="#8c8c8c"/><rect x="202.08" y="3" width="0.8" height="2.4" fill="#8c8c8c"/><rect x="205.80" y="3" width="0.8" height="2.4" fill="#8c8c8c"/><rect x="209.52" y="3" width="0.8" height="2.4" fill="#8c8c8c"/><rect x="213.23" y="3" width="0.8" height="2.4" fill="#8c8c8c"/><rect x="216.95" y="3" width="0.8" height="2.4" fill="#8c8c8c"/><rect x="220.67" y="3" width="0.8" height="2.4" fill="#8c8c8c"/><rect x="224.38" y="3" width="0.8" height="2.4" fill="#8c8c8c"/><rect x="228.10" y="0" width="0.8" height="5.4" fill="#a0a0a0"/><rect x="231.82" y="3" width="0.8" height="2.4" fill="#8c8c8c"/><rect x="235.53" y="3" width="0.8" height="2.4" fill="#8c8c8c"/><rect x="239.25" y="3" width="0.8" height="2.4" fill="#8c8c8c"/><rect x="242.97" y="3" width="0.8" height="2.4" fill="#8c8c8c"/><rect x="246.68" y="3" width="0.8" height="2.4" fill="#8c8c8c"/><rect x="250.40" y="3" width="0.8" height="2.4" fill="#8c8c8c"/><rect x="254.12" y="3" width="0.8" height="2.4" fill="#8c8c8c"/><rect x="257.83" y="3" width="0.8" height="2.4" fill="#8c8c8c"/><rect x="261.55" y="3" width="0.8" height="2.4" fill="#8c8c8c"/><rect x="265.27" y="3" width="0.8" height="2.4" fill="#8c8c8c"/><rect x="268.98" y="3" width="0.8" height="2.4" fill="#8c8c8c"/><rect x="272.70" y="0" width="0.8" height="5.4" fill="#a0a0a0"/><rect x="276.42" y="3" width="0.8" height="2.4" fill="#8c8c8c"/><rect x="280.13" y="3" width="0.8" height="2.4" fill="#8c8c8c"/><rect x="283.85" y="3" width="0.8" height="2.4" fill="#8c8c8c"/><rect x="287.57" y="3" width="0.8" height="2.4" fill="#8c8c8c"/><rect x="291.28" y="3" width="0.8" height="2.4" fill="#8c8c8c"/><rect x="295.00" y="3" width="0.8" height="2.4" fill="#8c8c8c"/><rect x="298.72" y="3" width="0.8" height="2.4" fill="#8c8c8c"/><rect x="302.43" y="3" width="0.8" height="2.4" fill="#8c8c8c"/><rect x="306.15" y="3" width="0.8" height="2.4" fill="#8c8c8c"/><rect x="309.87" y="3" width="0.8" height="2.4" fill="#8c8c8c"/><rect x="313.58" y="3" width="0.8" height="2.4" fill="#8c8c8c"/><rect x="317.30" y="0" width="0.8" height="5.4" fill="#a0a0a0"/><rect x="321.02" y="3" width="0.8" height="2.4" fill="#8c8c8c"/><rect x="324.73" y="3" width="0.8" height="2.4" fill="#8c8c8c"/><rect x="328.45" y="3" width="0.8" height="2.4" fill="#8c8c8c"/><rect x="332.17" y="3" width="0.8" height="2.4" fill="#8c8c8c"/><rect x="335.88" y="3" width="0.8" height="2.4" fill="#8c8c8c"/><rect x="339.60" y="3" width="0.8" height="2.4" fill="#8c8c8c"/><rect x="343.32" y="3" width="0.8" height="2.4" fill="#8c8c8c"/><rect x="347.03" y="3" width="0.8" height="2.4" fill="#8c8c8c"/><rect x="350.75" y="3" width="0.8" height="2.4" fill="#8c8c8c"/><rect x="354.47" y="3" width="0.8" height="2.4" fill="#8c8c8c"/><rect x="358.18" y="3" width="0.8" height="2.4" fill="#8c8c8c"/><rect x="361.90" y="0" width="0.8" height="5.4" fill="#a0a0a0"/><rect x="365.62" y="3" width="0.8" height="2.4" fill="#8c8c8c"/><rect x="369.33" y="3" width="0.8" height="2.4" fill="#8c8c8c"/><rect x="373.05" y="3" width="0.8" height="2.4" fill="#8c8c8c"/><rect x="376.77" y="3" width="0.8" height="2.4" fill="#8c8c8c"/><rect x="380.48" y="3" width="0.8" height="2.4" fill="#8c8c8c"/><rect x="384.20" y="3" width="0.8" height="2.4" fill="#8c8c8c"/><rect x="387.92" y="3" width="0.8" height="2.4" fill="#8c8c8c"/><rect x="391.63" y="3" width="0.8" height="2.4" fill="#8c8c8c"/><rect x="395.35" y="3" width="0.8" height="2.4" fill="#8c8c8c"/><rect x="399.07" y="3" width="0.8" height="2.4" fill="#8c8c8c"/><rect x="402.78" y="3" width="0.8" height="2.4" fill="#8c8c8c"/><rect x="406.50" y="0" width="0.8" height="5.4" fill="#a0a0a0"/><rect x="410.22" y="3" width="0.8" height="2.4" fill="#8c8c8c"/><rect x="413.93" y="3" width="0.8" height="2.4" fill="#8c8c8c"/><rect x="417.65" y="3" width="0.8" height="2.4" fill="#8c8c8c"/><rect x="421.37" y="3" width="0.8" height="2.4" fill="#8c8c8c"/><rect x="425.08" y="3" width="0.8" height="2.4" fill="#8c8c8c"/><rect x="428.80" y="3" width="0.8" height="2.4" fill="#8c8c8c"/><rect x="432.52" y="3" width="0.8" height="2.4" fill="#8c8c8c"/><rect x="436.23" y="3" width="0.8" height="2.4" fill="#8c8c8c"/><rect x="439.95" y="3" width="0.8" height="2.4" fill="#8c8c8c"/><rect x="443.67" y="3" width="0.8" height="2.4" fill="#8c8c8c"/><rect x="447.38" y="3" width="0.8" height="2.4" fill="#8c8c8c"/><rect x="451.10" y="0" width="0.8" height="5.4" fill="#a0a0a0"/><rect x="454.82" y="3" width="0.8" height="2.4" fill="#8c8c8c"/><rect x="458.53" y="3" width="0.8" height="2.4" fill="#8c8c8c"/><rect x="462.25" y="3" width="0.8" height="2.4" fill="#8c8c8c"/><rect x="465.97" y="3" width="0.8" height="2.4" fill="#8c8c8c"/><rect x="469.68" y="3" width="0.8" height="2.4" fill="#8c8c8c"/><rect x="473.40" y="3" width="0.8" height="2.4" fill="#8c8c8c"/><rect x="477.12" y="3" width="0.8" height="2.4" fill="#8c8c8c"/><rect x="480.83" y="3" width="0.8" height="2.4" fill="#8c8c8c"/><rect x="484.55" y="3" width="0.8" height="2.4" fill="#8c8c8c"/><rect x="488.27" y="3" width="0.8" height="2.4" fill="#8c8c8c"/><rect x="491.98" y="3" width="0.8" height="2.4" fill="#8c8c8c"/><rect x="495.70" y="0" width="0.8" height="5.4" fill="#a0a0a0"/><rect x="499.42" y="3" width="0.8" height="2.4" fill="#8c8c8c"/><rect x="503.13" y="3" width="0.8" height="2.4" fill="#8c8c8c"/><rect x="506.85" y="3" width="0.8" height="2.4" fill="#8c8c8c"/><rect x="510.57" y="3" width="0.8" height="2.4" fill="#8c8c8c"/><rect x="514.28" y="3" width="0.8" height="2.4" fill="#8c8c8c"/><rect x="518.00" y="3" width="0.8" height="2.4" fill="#8c8c8c"/><rect x="521.72" y="3" width="0.8" height="2.4" fill="#8c8c8c"/><rect x="525.43" y="3" width="0.8" height="2.4" fill="#8c8c8c"/><rect x="529.15" y="3" width="0.8" height="2.4" fill="#8c8c8c"/><rect x="532.87" y="3" width="0.8" height="2.4" fill="#8c8c8c"/><rect x="536.58" y="3" width="0.8" height="2.4" fill="#8c8c8c"/><rect x="540.30" y="0" width="0.8" height="5.4" fill="#a0a0a0"/><rect x="544.02" y="3" width="0.8" height="2.4" fill="#8c8c8c"/><rect x="547.73" y="3" width="0.8" height="2.4" fill="#8c8c8c"/><rect x="551.45" y="3" width="0.8" height="2.4" fill="#8c8c8c"/><rect x="555.17" y="3" width="0.8" height="2.4" fill="#8c8c8c"/><rect x="558.88" y="3" width="0.8" height="2.4" fill="#8c8c8c"/><rect x="562.60" y="3" width="0.8" height="2.4" fill="#8c8c8c"/><rect x="566.32" y="3" width="0.8" height="2.4" fill="#8c8c8c"/><rect x="570.03" y="3" width="0.8" height="2.4" fill="#8c8c8c"/><rect x="573.75" y="3" width="0.8" height="2.4" fill="#8c8c8c"/><rect x="577.47" y="3" width="0.8" height="2.4" fill="#8c8c8c"/><rect x="581.18" y="3" width="0.8" height="2.4" fill="#8c8c8c"/><rect x="584.90" y="0" width="0.8" height="5.4" fill="#a0a0a0"/><rect x="588.62" y="3" width="0.8" height="2.4" fill="#8c8c8c"/><rect x="592.33" y="3" width="0.8" height="2.4" fill="#8c8c8c"/><rect x="596.05" y="3" width="0.8" height="2.4" fill="#8c8c8c"/><rect x="599.77" y="3" width="0.8" height="2.4" fill="#8c8c8c"/><rect x="603.48" y="3" width="0.8" height="2.4" fill="#8c8c8c"/><rect x="607.20" y="3" width="0.8" height="2.4" fill="#8c8c8c"/><rect x="610.92" y="3" width="0.8" height="2.4" fill="#8c8c8c"/><rect x="614.63" y="3" width="0.8" height="2.4" fill="#8c8c8c"/><rect x="618.35" y="3" width="0.8" height="2.4" fill="#8c8c8c"/><rect x="622.07" y="3" width="0.8" height="2.4" fill="#8c8c8c"/><rect x="625.78" y="3" width="0.8" height="2.4" fill="#8c8c8c"/><rect x="629.50" y="0" width="0.8" height="5.4" fill="#a0a0a0"/><rect x="633.22" y="3" width="0.8" height="2.4" fill="#8c8c8c"/><rect x="636.93" y="3" width="0.8" height="2.4" fill="#8c8c8c"/><rect x="640.65" y="3" width="0.8" height="2.4" fill="#8c8c8c"/><rect x="644.37" y="3" width="0.8" height="2.4" fill="#8c8c8c"/><rect x="648.08" y="3" width="0.8" height="2.4" fill="#8c8c8c"/><rect x="651.80" y="3" width="0.8" height="2.4" fill="#8c8c8c"/><rect x="655.52" y="3" width="0.8" height="2.4" fill="#8c8c8c"/><rect x="659.23" y="3" width="0.8" height="2.4" fill="#8c8c8c"/><rect x="662.95" y="3" width="0.8" height="2.4" fill="#8c8c8c"/><rect x="666.67" y="3" width="0.8" height="2.4" fill="#8c8c8c"/><rect x="670.38" y="3" width="0.8" height="2.4" fill="#8c8c8c"/><rect x="674.10" y="0" width="0.8" height="5.4" fill="#a0a0a0"/><rect x="677.82" y="3" width="0.8" height="2.4" fill="#8c8c8c"/><rect x="681.53" y="3" width="0.8" height="2.4" fill="#8c8c8c"/><rect x="685.25" y="3" width="0.8" height="2.4" fill="#8c8c8c"/><rect x="688.97" y="3" width="0.8" height="2.4" fill="#8c8c8c"/><rect x="692.68" y="3" width="0.8" height="2.4" fill="#8c8c8c"/><rect x="696.40" y="3" width="0.8" height="2.4" fill="#8c8c8c"/><rect x="700.12" y="3" width="0.8" height="2.4" fill="#8c8c8c"/><rect x="703.83" y="3" width="0.8" height="2.4" fill="#8c8c8c"/><rect x="707.55" y="3" width="0.8" height="2.4" fill="#8c8c8c"/><rect x="711.27" y="3" width="0.8" height="2.4" fill="#8c8c8c"/><rect x="714.98" y="3" width="0.8" height="2.4" fill="#8c8c8c"/><rect x="718.70" y="0" width="0.8" height="5.4" fill="#a0a0a0"/><rect x="722.42" y="3" width="0.8" height="2.4" fill="#8c8c8c"/><rect x="726.13" y="3" width="0.8" height="2.4" fill="#8c8c8c"/><rect x="729.85" y="3" width="0.8" height="2.4" fill="#8c8c8c"/><rect x="733.57" y="3" width="0.8" height="2.4" fill="#8c8c8c"/><rect x="737.28" y="3" width="0.8" height="2.4" fill="#8c8c8c"/><rect x="741.00" y="3" width="0.8" height="2.4" fill="#8c8c8c"/><rect x="744.72" y="3" width="0.8" height="2.4" fill="#8c8c8c"/><rect x="748.43" y="3" width="0.8" height="2.4" fill="#8c8c8c"/><rect x="752.15" y="3" width="0.8" height="2.4" fill="#8c8c8c"/><rect x="755.87" y="3" width="0.8" height="2.4" fill="#8c8c8c"/><rect x="759.58" y="3" width="0.8" height="2.4" fill="#8c8c8c"/></svg>
<div style="left:145.4px;top:358.7px;width:5.1px;height:1.3px;background:#d4cf1c"></div>
<div style="left:152.7px;top:358.7px;width:17.5px;height:1.3px;background:#d4cf1c"></div>
<div style="left:172.9px;top:358.7px;width:5px;height:1.3px;background:#d4cf1c"></div>
<div style="left:193.5px;top:358.7px;width:103.5px;height:1.3px;background:#d4cf1c"></div>
<div style="left:315.6px;top:358.7px;width:17.7px;height:1.3px;background:#d4cf1c"></div>
<div style="left:338.5px;top:358.7px;width:4.5px;height:1.3px;background:#d4cf1c"></div>
<div style="left:353px;top:358.7px;width:312.8px;height:1.3px;background:#d4cf1c"></div>
<div style="left:686px;top:358.7px;width:10px;height:1.3px;background:#d4cf1c"></div>
<div style="left:702px;top:358.7px;width:2px;height:1.3px;background:#d4cf1c"></div>
<div style="left:712.5px;top:358.7px;width:2px;height:1.3px;background:#d4cf1c"></div>
<div style="left:720px;top:358.7px;width:128.5px;height:1.3px;background:#d4cf1c"></div>
<div style="left:858px;top:358.7px;width:10px;height:1.3px;background:#d4cf1c"></div>
<div style="left:874px;top:358.7px;width:4px;height:1.3px;background:#d4cf1c"></div>
<div style="left:887px;top:358.7px;width:7px;height:1.3px;background:#d4cf1c"></div>
<div style="left:183px;top:358.7px;width:1.5px;height:1.4px;background:#6ac040"></div>
<div style="left:60px;top:359.6px;width:85px;height:19px;overflow:hidden"><div class="t" style="left:28px;top:-3.4px;font-size:5.6px;color:#cfcfcf;line-height:9px">Video 3</div><div class="t" style="left:16.4px;top:-3.4px;font-size:5.6px;color:#cfcfcf;line-height:9px">V3</div><div style="left:5.5px;top:-3px;width:5.4px;height:4.2px;background:#bdbdbd;border-radius:0.5px"></div></div>
<svg style="position:absolute;left:87.5px;top:366.5px;" width="9" height="9" viewBox="0 0 9 9"><path d="M6 1.5 L2.5 4.5 L6 7.5Z" fill="#8a8a8a"/></svg>
<svg style="position:absolute;left:99.3px;top:366.5px;" width="9" height="9" viewBox="0 0 9 9"><path d="M4.5 1.6 L7.4 4.5 L4.5 7.4 L1.6 4.5Z" fill="none" stroke="#8a8a8a" stroke-width="0.8"/></svg>
<svg style="position:absolute;left:111.1px;top:366.5px;" width="9" height="9" viewBox="0 0 9 9"><path d="M3 1.5 L6.5 4.5 L3 7.5Z" fill="#8a8a8a"/></svg>
<svg style="position:absolute;left:64px;top:387.2px;" width="9" height="9" viewBox="0 0 9 9"><path d="M3 4.2 L3 2.6 Q3 1 4.6 1 Q6.2 1 6.2 2.4" stroke="#bdbdbd" stroke-width="0.9" fill="none"/><rect x="1.8" y="4.2" width="5.4" height="4.2" rx="0.5" fill="#bdbdbd"/><rect x="4.2" y="5.6" width="0.8" height="1.5" fill="#1e1e1e"/></svg>
<div class="t" style="left:76.7px;top:387.5px;font-size:5.6px;color:#cfcfcf;line-height:9px">V2</div>
<svg style="position:absolute;left:87.5px;top:381.5px;" width="9" height="9" viewBox="0 0 9 9"><rect x="1.6" y="2.5" width="5.6" height="4.4" fill="#bdbdbd"/><rect x="2.3" y="3.1" width="2.6" height="1.2" fill="#1e1e1e"/><rect x="2.3" y="4.9" width="2.6" height="1.3" fill="#1e1e1e"/><path d="M5.4 3.6 L6.6 4.7 L5.4 5.8Z" fill="#1e1e1e"/></svg>
<svg style="position:absolute;left:99.1px;top:381.5px;" width="9" height="9" viewBox="0 0 9 9"><path d="M0.6 4.5 Q4.5 0.6 8.4 4.5 Q4.5 8.4 0.6 4.5Z" fill="#d0d0d0"/><circle cx="4.5" cy="4.5" r="1.5" fill="#1e1e1e"/><circle cx="4.5" cy="4.5" r="0.7" fill="#d0d0d0"/></svg>
<div class="t" style="left:88px;top:393.8px;font-size:5.6px;color:#cfcfcf;line-height:9px">Video 2</div>
<div style="left:74.2px;top:405px;width:12.1px;height:29px;background:#0f5ad0;border-radius:2px"></div>
<svg style="position:absolute;left:64px;top:415px;" width="9" height="9" viewBox="0 0 9 9"><path d="M3 4.2 L3 2.6 Q3 1 4.6 1 Q6.2 1 6.2 2.4" stroke="#bdbdbd" stroke-width="0.9" fill="none"/><rect x="1.8" y="4.2" width="5.4" height="4.2" rx="0.5" fill="#bdbdbd"/><rect x="4.2" y="5.6" width="0.8" height="1.5" fill="#1e1e1e"/></svg>
<div class="t" style="left:76.9px;top:415.9px;font-size:5.6px;color:#f4f4f4;line-height:9px">V1</div>
<svg style="position:absolute;left:87.5px;top:409.2px;" width="9" height="9" viewBox="0 0 9 9"><rect x="1.6" y="2.5" width="5.6" height="4.4" fill="#bdbdbd"/><rect x="2.3" y="3.1" width="2.6" height="1.2" fill="#1e1e1e"/><rect x="2.3" y="4.9" width="2.6" height="1.3" fill="#1e1e1e"/><path d="M5.4 3.6 L6.6 4.7 L5.4 5.8Z" fill="#1e1e1e"/></svg>
<svg style="position:absolute;left:99.1px;top:409.2px;" width="9" height="9" viewBox="0 0 9 9"><path d="M0.6 4.5 Q4.5 0.6 8.4 4.5 Q4.5 8.4 0.6 4.5Z" fill="#d0d0d0"/><circle cx="4.5" cy="4.5" r="1.5" fill="#1e1e1e"/><circle cx="4.5" cy="4.5" r="0.7" fill="#d0d0d0"/></svg>
<div class="t" style="left:88px;top:421.5px;font-size:5.6px;color:#cfcfcf;line-height:9px">Video 1</div>
<div style="left:74.2px;top:437px;width:12.1px;height:31.8px;background:#0f5ad0;border-radius:2px"></div>
<svg style="position:absolute;left:64px;top:448.4px;" width="9" height="9" viewBox="0 0 9 9"><path d="M3 4.2 L3 2.6 Q3 1 4.6 1 Q6.2 1 6.2 2.4" stroke="#bdbdbd" stroke-width="0.9" fill="none"/><rect x="1.8" y="4.2" width="5.4" height="4.2" rx="0.5" fill="#bdbdbd"/><rect x="4.2" y="5.6" width="0.8" height="1.5" fill="#1e1e1e"/></svg>
<div class="t" style="left:76.6px;top:449.2px;font-size:5.6px;color:#f4f4f4;line-height:9px">A1</div>
<svg style="position:absolute;left:87.5px;top:442.5px;" width="9" height="9" viewBox="0 0 9 9"><rect x="1.6" y="2.5" width="5.6" height="4.4" fill="#bdbdbd"/><rect x="2.3" y="3.1" width="2.6" height="1.2" fill="#1e1e1e"/><rect x="2.3" y="4.9" width="2.6" height="1.3" fill="#1e1e1e"/><path d="M5.4 3.6 L6.6 4.7 L5.4 5.8Z" fill="#1e1e1e"/></svg>
<div class="t" style="left:102px;top:442.7px;font-size:5.4px;color:#9a9a9a;line-height:9px">M</div>
<div class="t" style="left:114px;top:442.7px;font-size:5.4px;color:#9a9a9a;line-height:9px">S</div>
<svg style="position:absolute;left:122.7px;top:442.5px;" width="9" height="9" viewBox="0 0 9 9"><rect x="3.2" y="0.8" width="2.6" height="5" rx="1.3" fill="#8a8a8a"/><path d="M2.2 4.2 Q2.2 7 4.5 7 Q6.8 7 6.8 4.2" stroke="#8a8a8a" stroke-width="0.7" fill="none"/><rect x="4.1" y="7" width="0.8" height="1.4" fill="#8a8a8a"/></svg>
<div class="t" style="left:88px;top:455.2px;font-size:5.6px;color:#cfcfcf;line-height:9px">Audio 1</div>
<div style="left:74.2px;top:470.3px;width:12.1px;height:28.7px;background:#0f5ad0;border-radius:2px"></div>
<svg style="position:absolute;left:64px;top:480.15px;" width="9" height="9" viewBox="0 0 9 9"><path d="M3 4.2 L3 2.6 Q3 1 4.6 1 Q6.2 1 6.2 2.4" stroke="#bdbdbd" stroke-width="0.9" fill="none"/><rect x="1.8" y="4.2" width="5.4" height="4.2" rx="0.5" fill="#bdbdbd"/><rect x="4.2" y="5.6" width="0.8" height="1.5" fill="#1e1e1e"/></svg>
<div class="t" style="left:76.6px;top:480.95px;font-size:5.6px;color:#f4f4f4;line-height:9px">A2</div>
<svg style="position:absolute;left:87.5px;top:474.4px;" width="9" height="9" viewBox="0 0 9 9"><rect x="1.6" y="2.5" width="5.6" height="4.4" fill="#bdbdbd"/><rect x="2.3" y="3.1" width="2.6" height="1.2" fill="#1e1e1e"/><rect x="2.3" y="4.9" width="2.6" height="1.3" fill="#1e1e1e"/><path d="M5.4 3.6 L6.6 4.7 L5.4 5.8Z" fill="#1e1e1e"/></svg>
<div class="t" style="left:102px;top:474.6px;font-size:5.4px;color:#9a9a9a;line-height:9px">M</div>
<div class="t" style="left:114px;top:474.6px;font-size:5.4px;color:#9a9a9a;line-height:9px">S</div>
<svg style="position:absolute;left:122.7px;top:474.4px;" width="9" height="9" viewBox="0 0 9 9"><rect x="3.2" y="0.8" width="2.6" height="5" rx="1.3" fill="#8a8a8a"/><path d="M2.2 4.2 Q2.2 7 4.5 7 Q6.8 7 6.8 4.2" stroke="#8a8a8a" stroke-width="0.7" fill="none"/><rect x="4.1" y="7" width="0.8" height="1.4" fill="#8a8a8a"/></svg>
<div class="t" style="left:88px;top:487px;font-size:5.6px;color:#cfcfcf;line-height:9px">Audio 2</div>
<div style="left:74.2px;top:501px;width:12.1px;height:33.3px;background:#0f5ad0;border-radius:2px"></div>
<svg style="position:absolute;left:64px;top:513.15px;" width="9" height="9" viewBox="0 0 9 9"><path d="M3 4.2 L3 2.6 Q3 1 4.6 1 Q6.2 1 6.2 2.4" stroke="#bdbdbd" stroke-width="0.9" fill="none"/><rect x="1.8" y="4.2" width="5.4" height="4.2" rx="0.5" fill="#bdbdbd"/><rect x="4.2" y="5.6" width="0.8" height="1.5" fill="#1e1e1e"/></svg>
<div class="t" style="left:76.6px;top:513.95px;font-size:5.6px;color:#f4f4f4;line-height:9px">A3</div>
<svg style="position:absolute;left:87.5px;top:507.1px;" width="9" height="9" viewBox="0 0 9 9"><rect x="1.6" y="2.5" width="5.6" height="4.4" fill="#bdbdbd"/><rect x="2.3" y="3.1" width="2.6" height="1.2" fill="#1e1e1e"/><rect x="2.3" y="4.9" width="2.6" height="1.3" fill="#1e1e1e"/><path d="M5.4 3.6 L6.6 4.7 L5.4 5.8Z" fill="#1e1e1e"/></svg>
<div class="t" style="left:102px;top:507.3px;font-size:5.4px;color:#9a9a9a;line-height:9px">M</div>
<div class="t" style="left:114px;top:507.3px;font-size:5.4px;color:#9a9a9a;line-height:9px">S</div>
<svg style="position:absolute;left:122.7px;top:507.1px;" width="9" height="9" viewBox="0 0 9 9"><rect x="3.2" y="0.8" width="2.6" height="5" rx="1.3" fill="#8a8a8a"/><path d="M2.2 4.2 Q2.2 7 4.5 7 Q6.8 7 6.8 4.2" stroke="#8a8a8a" stroke-width="0.7" fill="none"/><rect x="4.1" y="7" width="0.8" height="1.4" fill="#8a8a8a"/></svg>
<div class="t" style="left:88px;top:519.4px;font-size:5.6px;color:#cfcfcf;line-height:9px">Audio 3</div>
<svg style="position:absolute;left:64px;top:549.9px;" width="9" height="9" viewBox="0 0 9 9"><path d="M3 4.2 L3 2.6 Q3 1 4.6 1 Q6.2 1 6.2 2.4" stroke="#bdbdbd" stroke-width="0.9" fill="none"/><rect x="1.8" y="4.2" width="5.4" height="4.2" rx="0.5" fill="#bdbdbd"/><rect x="4.2" y="5.6" width="0.8" height="1.5" fill="#1e1e1e"/></svg>
<div class="t" style="left:76.2px;top:550.7px;font-size:5.6px;color:#cfcfcf;line-height:9px">A4</div>
<svg style="position:absolute;left:87.5px;top:537.5px;" width="9" height="9" viewBox="0 0 9 9"><rect x="1.6" y="2.5" width="5.6" height="4.4" fill="#bdbdbd"/><rect x="2.3" y="3.1" width="2.6" height="1.2" fill="#1e1e1e"/><rect x="2.3" y="4.9" width="2.6" height="1.3" fill="#1e1e1e"/><path d="M5.4 3.6 L6.6 4.7 L5.4 5.8Z" fill="#1e1e1e"/></svg>
<div class="t" style="left:102px;top:537.7px;font-size:5.4px;color:#9a9a9a;line-height:9px">M</div>
<div class="t" style="left:114px;top:537.7px;font-size:5.4px;color:#9a9a9a;line-height:9px">S</div>
<svg style="position:absolute;left:122.7px;top:537.5px;" width="9" height="9" viewBox="0 0 9 9"><rect x="3.2" y="0.8" width="2.6" height="5" rx="1.3" fill="#8a8a8a"/><path d="M2.2 4.2 Q2.2 7 4.5 7 Q6.8 7 6.8 4.2" stroke="#8a8a8a" stroke-width="0.7" fill="none"/><rect x="4.1" y="7" width="0.8" height="1.4" fill="#8a8a8a"/></svg>
<div class="t" style="left:88px;top:550.1px;font-size:5.6px;color:#cfcfcf;line-height:9px">Audio 4</div>
<div class="t" style="left:88.5px;top:561.8px;font-size:5.4px;color:#9a9a9a;line-height:9px">O,</div>
<svg style="position:absolute;left:99.5px;top:561.5px;" width="9" height="9" viewBox="0 0 9 9"><path d="M6 1.5 L2.5 4.5 L6 7.5Z" fill="#8a8a8a"/></svg>
<svg style="position:absolute;left:111.1px;top:561.5px;" width="9" height="9" viewBox="0 0 9 9"><path d="M4.5 1.6 L7.4 4.5 L4.5 7.4 L1.6 4.5Z" fill="none" stroke="#8a8a8a" stroke-width="0.8"/></svg>
<svg style="position:absolute;left:122.7px;top:561.5px;" width="9" height="9" viewBox="0 0 9 9"><path d="M3 1.5 L6.5 4.5 L3 7.5Z" fill="#8a8a8a"/></svg>
<svg style="position:absolute;left:64px;top:579.1px;" width="9" height="9" viewBox="0 0 9 9"><path d="M3 4.2 L3 2.6 Q3 1 4.6 1 Q6.2 1 6.2 2.4" stroke="#bdbdbd" stroke-width="0.9" fill="none"/><rect x="1.8" y="4.2" width="5.4" height="4.2" rx="0.5" fill="#bdbdbd"/><rect x="4.2" y="5.6" width="0.8" height="1.5" fill="#1e1e1e"/></svg>
<div class="t" style="left:76.2px;top:579.9px;font-size:5.6px;color:#cfcfcf;line-height:9px">A5</div>
<svg style="position:absolute;left:87.5px;top:579.1px;" width="9" height="9" viewBox="0 0 9 9"><rect x="1.6" y="2.5" width="5.6" height="4.4" fill="#bdbdbd"/><rect x="2.3" y="3.1" width="2.6" height="1.2" fill="#1e1e1e"/><rect x="2.3" y="4.9" width="2.6" height="1.3" fill="#1e1e1e"/><path d="M5.4 3.6 L6.6 4.7 L5.4 5.8Z" fill="#1e1e1e"/></svg>
<div class="t" style="left:102px;top:579.3px;font-size:5.4px;color:#9a9a9a;line-height:9px">M</div>
<div class="t" style="left:114px;top:579.3px;font-size:5.4px;color:#9a9a9a;line-height:9px">S</div>
<svg style="position:absolute;left:122.7px;top:579.1px;" width="9" height="9" viewBox="0 0 9 9"><rect x="3.2" y="0.8" width="2.6" height="5" rx="1.3" fill="#8a8a8a"/><path d="M2.2 4.2 Q2.2 7 4.5 7 Q6.8 7 6.8 4.2" stroke="#8a8a8a" stroke-width="0.7" fill="none"/><rect x="4.1" y="7" width="0.8" height="1.4" fill="#8a8a8a"/></svg>
<svg style="position:absolute;left:63.9px;top:599.4px;" width="9" height="9" viewBox="0 0 9 9"><path d="M3 4.2 L3 2.6 Q3 1 4.6 1 Q6.2 1 6.2 2.4" stroke="#bdbdbd" stroke-width="0.9" fill="none"/><rect x="1.8" y="4.2" width="5.4" height="4.2" rx="0.5" fill="#bdbdbd"/><rect x="4.2" y="5.6" width="0.8" height="1.5" fill="#1e1e1e"/></svg>
<div class="t" style="left:76.5px;top:599.6px;font-size:5.6px;color:#d0d0d0;line-height:9px">Mix</div>
<div class="t" style="left:105.6px;top:599.6px;font-size:5.6px;font-weight:bold;color:#3a8ae6;line-height:9px">0,0</div>
<svg style="position:absolute;left:136px;top:600px;" width="8" height="8" viewBox="0 0 8 8"><path d="M0.8 0.8 L0.8 7.2 M7.2 0.8 L7.2 7.2" stroke="#c8c8c8" stroke-width="0.8"/><path d="M1.2 1.2 L4 4 L1.2 6.8Z M6.8 1.2 L4 4 L6.8 6.8Z" fill="#c8c8c8"/></svg>
<svg style="position:absolute;left:140px;top:400px;" width="780" height="230" viewBox="0 0 780 230"><rect x="5.30" y="4.60" width="4.90" height="29.80" fill="#4418b4"/><rect x="7.90" y="4.60" width="1.00" height="29.80" fill="#5424cc"/><rect x="12.80" y="4.60" width="16.80" height="29.80" fill="#4418b4"/><rect x="12.80" y="4.60" width="0.80" height="29.80" fill="#34128e"/><rect x="16.10" y="4.60" width="1.00" height="29.80" fill="#5424cc"/><rect x="18.00" y="4.60" width="0.70" height="29.80" fill="#5424cc"/><rect x="19.60" y="4.60" width="0.70" height="29.80" fill="#5424cc"/><rect x="26.70" y="4.60" width="1.30" height="29.80" fill="#34128e"/><rect x="32.60" y="4.60" width="4.90" height="29.80" fill="#7a644e"/><rect x="32.60" y="4.60" width="0.70" height="29.80" fill="#5e4c3a"/><rect x="34.20" y="4.60" width="0.80" height="29.80" fill="#8e7a64"/><rect x="36.60" y="4.60" width="0.90" height="29.80" fill="#8e7a64"/><rect x="42.70" y="4.60" width="1.80" height="29.80" fill="#7a644e"/><rect x="42.70" y="4.60" width="1.30" height="29.80" fill="#5e4c3a"/><rect x="53.70" y="4.60" width="103.30" height="29.80" fill="#7a644e"/><rect x="53.70" y="4.60" width="1.00" height="29.80" fill="#5e4c3a"/><rect x="55.30" y="4.60" width="1.00" height="29.80" fill="#8e7a64"/><rect x="59.80" y="4.60" width="2.00" height="29.80" fill="#5e4c3a"/><rect x="62.70" y="4.60" width="1.30" height="29.80" fill="#5e4c3a"/><rect x="71.10" y="4.60" width="0.80" height="29.80" fill="#5e4c3a"/><rect x="72.50" y="4.60" width="1.00" height="29.80" fill="#5e4c3a"/><rect x="75.10" y="4.60" width="1.00" height="29.80" fill="#5e4c3a"/><rect x="77.00" y="4.60" width="2.00" height="29.80" fill="#5e4c3a"/><rect x="79.60" y="4.60" width="1.00" height="29.80" fill="#5e4c3a"/><rect x="82.20" y="4.60" width="0.70" height="29.80" fill="#5e4c3a"/><rect x="83.50" y="4.60" width="0.70" height="29.80" fill="#5e4c3a"/><rect x="85.80" y="4.60" width="0.80" height="29.80" fill="#8e7a64"/><rect x="87.50" y="4.60" width="1.00" height="29.80" fill="#8e7a64"/><rect x="89.40" y="4.60" width="1.00" height="29.80" fill="#8e7a64"/><rect x="91.00" y="4.60" width="1.00" height="29.80" fill="#8e7a64"/><rect x="92.90" y="4.60" width="0.70" height="29.80" fill="#5e4c3a"/><rect x="97.70" y="4.60" width="0.80" height="29.80" fill="#5e4c3a"/><rect x="101.00" y="4.60" width="2.00" height="29.80" fill="#8e7a64"/><rect x="103.60" y="4.60" width="0.80" height="29.80" fill="#5e4c3a"/><rect x="107.50" y="4.60" width="1.00" height="29.80" fill="#5e4c3a"/><rect x="109.10" y="4.60" width="0.70" height="29.80" fill="#5e4c3a"/><rect x="110.70" y="4.60" width="0.70" height="29.80" fill="#8e7a64"/><rect x="112.60" y="4.60" width="1.30" height="29.80" fill="#8e7a64"/><rect x="118.30" y="4.60" width="1.00" height="29.80" fill="#5e4c3a"/><rect x="125.40" y="4.60" width="2.00" height="29.80" fill="#8e7a64"/><rect x="129.90" y="4.60" width="0.80" height="29.80" fill="#8e7a64"/><rect x="132.30" y="4.60" width="1.00" height="29.80" fill="#8e7a64"/><rect x="134.90" y="4.60" width="0.70" height="29.80" fill="#5e4c3a"/><rect x="138.40" y="4.60" width="2.00" height="29.80" fill="#8e7a64"/><rect x="145.10" y="4.60" width="1.00" height="29.80" fill="#5e4c3a"/><rect x="149.90" y="4.60" width="0.80" height="29.80" fill="#8e7a64"/><rect x="153.20" y="4.60" width="1.30" height="29.80" fill="#5e4c3a"/><rect x="156.80" y="4.60" width="0.20" height="29.80" fill="#8e7a64"/><rect x="175.50" y="4.60" width="10.70" height="29.80" fill="#7a644e"/><rect x="175.50" y="4.60" width="0.70" height="29.80" fill="#5e4c3a"/><rect x="177.40" y="4.60" width="1.00" height="29.80" fill="#8e7a64"/><rect x="179.30" y="4.60" width="0.70" height="29.80" fill="#5e4c3a"/><rect x="181.60" y="4.60" width="1.00" height="29.80" fill="#8e7a64"/><rect x="186.70" y="4.60" width="6.60" height="29.80" fill="#801a66"/><rect x="189.00" y="4.60" width="1.00" height="29.80" fill="#9c1a7a"/><rect x="190.60" y="4.60" width="0.70" height="29.80" fill="#9c1a7a"/><rect x="191.90" y="4.60" width="1.00" height="29.80" fill="#5e1c4e"/><rect x="198.50" y="4.60" width="4.50" height="29.80" fill="#801a66"/><rect x="198.50" y="4.60" width="1.00" height="29.80" fill="#5e1c4e"/><rect x="200.10" y="4.60" width="0.70" height="29.80" fill="#9c1a7a"/><rect x="202.00" y="4.60" width="1.00" height="29.80" fill="#5e1c4e"/><rect x="213.00" y="4.60" width="313.00" height="29.80" fill="#801a66"/><rect x="213.00" y="4.60" width="1.00" height="29.80" fill="#5e1c4e"/><rect x="221.10" y="4.60" width="0.70" height="29.80" fill="#9c1a7a"/><rect x="223.40" y="4.60" width="1.00" height="29.80" fill="#9c1a7a"/><rect x="226.90" y="4.60" width="0.70" height="29.80" fill="#5e1c4e"/><rect x="233.90" y="4.60" width="1.00" height="29.80" fill="#9c1a7a"/><rect x="237.40" y="4.60" width="0.70" height="29.80" fill="#9c1a7a"/><rect x="240.60" y="4.60" width="0.70" height="29.80" fill="#5e1c4e"/><rect x="241.90" y="4.60" width="1.00" height="29.80" fill="#5e1c4e"/><rect x="248.30" y="4.60" width="1.00" height="29.80" fill="#5e1c4e"/><rect x="251.80" y="4.60" width="0.80" height="29.80" fill="#9c1a7a"/><rect x="257.40" y="4.60" width="0.80" height="29.80" fill="#5e1c4e"/><rect x="259.40" y="4.60" width="0.80" height="29.80" fill="#9c1a7a"/><rect x="261.10" y="4.60" width="0.80" height="29.80" fill="#5e1c4e"/><rect x="264.40" y="4.60" width="1.00" height="29.80" fill="#5e1c4e"/><rect x="266.30" y="4.60" width="1.00" height="29.80" fill="#5e1c4e"/><rect x="267.90" y="4.60" width="2.00" height="29.80" fill="#5e1c4e"/><rect x="271.10" y="4.60" width="0.80" height="29.80" fill="#5e1c4e"/><rect x="276.10" y="4.60" width="1.00" height="29.80" fill="#9c1a7a"/><rect x="278.70" y="4.60" width="2.00" height="29.80" fill="#5e1c4e"/><rect x="283.20" y="4.60" width="1.00" height="29.80" fill="#5e1c4e"/><rect x="286.40" y="4.60" width="2.00" height="29.80" fill="#9c1a7a"/><rect x="290.90" y="4.60" width="1.00" height="29.80" fill="#5e1c4e"/><rect x="294.40" y="4.60" width="0.70" height="29.80" fill="#9c1a7a"/><rect x="296.70" y="4.60" width="1.00" height="29.80" fill="#5e1c4e"/><rect x="300.30" y="4.60" width="2.00" height="29.80" fill="#5e1c4e"/><rect x="302.90" y="4.60" width="2.00" height="29.80" fill="#9c1a7a"/><rect x="306.10" y="4.60" width="0.70" height="29.80" fill="#9c1a7a"/><rect x="307.70" y="4.60" width="1.00" height="29.80" fill="#5e1c4e"/><rect x="309.30" y="4.60" width="1.00" height="29.80" fill="#9c1a7a"/><rect x="310.90" y="4.60" width="0.80" height="29.80" fill="#5e1c4e"/><rect x="312.90" y="4.60" width="1.30" height="29.80" fill="#9c1a7a"/><rect x="316.70" y="4.60" width="1.30" height="29.80" fill="#9c1a7a"/><rect x="320.80" y="4.60" width="0.70" height="29.80" fill="#9c1a7a"/><rect x="323.10" y="4.60" width="0.80" height="29.80" fill="#9c1a7a"/><rect x="327.40" y="4.60" width="1.00" height="29.80" fill="#9c1a7a"/><rect x="330.90" y="4.60" width="1.00" height="29.80" fill="#9c1a7a"/><rect x="334.10" y="4.60" width="0.80" height="29.80" fill="#5e1c4e"/><rect x="339.70" y="4.60" width="1.00" height="29.80" fill="#5e1c4e"/><rect x="341.30" y="4.60" width="1.00" height="29.80" fill="#9c1a7a"/><rect x="342.90" y="4.60" width="1.00" height="29.80" fill="#5e1c4e"/><rect x="345.50" y="4.60" width="1.00" height="29.80" fill="#9c1a7a"/><rect x="350.40" y="4.60" width="1.30" height="29.80" fill="#5e1c4e"/><rect x="352.60" y="4.60" width="1.00" height="29.80" fill="#5e1c4e"/><rect x="356.10" y="4.60" width="2.00" height="29.80" fill="#9c1a7a"/><rect x="359.70" y="4.60" width="1.00" height="29.80" fill="#9c1a7a"/><rect x="361.30" y="4.60" width="0.80" height="29.80" fill="#9c1a7a"/><rect x="368.10" y="4.60" width="2.00" height="29.80" fill="#5e1c4e"/><rect x="372.60" y="4.60" width="1.30" height="29.80" fill="#5e1c4e"/><rect x="375.50" y="4.60" width="1.30" height="29.80" fill="#5e1c4e"/><rect x="377.70" y="4.60" width="1.30" height="29.80" fill="#9c1a7a"/><rect x="381.50" y="4.60" width="1.00" height="29.80" fill="#5e1c4e"/><rect x="385.00" y="4.60" width="0.70" height="29.80" fill="#9c1a7a"/><rect x="388.20" y="4.60" width="1.00" height="29.80" fill="#5e1c4e"/><rect x="393.60" y="4.60" width="1.30" height="29.80" fill="#5e1c4e"/><rect x="395.50" y="4.60" width="2.00" height="29.80" fill="#5e1c4e"/><rect x="400.00" y="4.60" width="1.00" height="29.80" fill="#9c1a7a"/><rect x="402.60" y="4.60" width="1.00" height="29.80" fill="#5e1c4e"/><rect x="405.20" y="4.60" width="0.80" height="29.80" fill="#5e1c4e"/><rect x="407.60" y="4.60" width="1.30" height="29.80" fill="#5e1c4e"/><rect x="409.80" y="4.60" width="1.00" height="29.80" fill="#9c1a7a"/><rect x="412.00" y="4.60" width="0.80" height="29.80" fill="#9c1a7a"/><rect x="413.40" y="4.60" width="0.70" height="29.80" fill="#5e1c4e"/><rect x="415.00" y="4.60" width="0.70" height="29.80" fill="#9c1a7a"/><rect x="416.90" y="4.60" width="2.00" height="29.80" fill="#5e1c4e"/><rect x="421.40" y="4.60" width="1.00" height="29.80" fill="#5e1c4e"/><rect x="428.10" y="4.60" width="1.00" height="29.80" fill="#9c1a7a"/><rect x="431.60" y="4.60" width="1.00" height="29.80" fill="#5e1c4e"/><rect x="434.20" y="4.60" width="1.30" height="29.80" fill="#9c1a7a"/><rect x="441.30" y="4.60" width="2.00" height="29.80" fill="#5e1c4e"/><rect x="444.20" y="4.60" width="1.30" height="29.80" fill="#9c1a7a"/><rect x="448.40" y="4.60" width="0.80" height="29.80" fill="#5e1c4e"/><rect x="450.40" y="4.60" width="0.80" height="29.80" fill="#5e1c4e"/><rect x="452.10" y="4.60" width="0.70" height="29.80" fill="#5e1c4e"/><rect x="455.70" y="4.60" width="1.00" height="29.80" fill="#5e1c4e"/><rect x="460.50" y="4.60" width="0.80" height="29.80" fill="#9c1a7a"/><rect x="461.90" y="4.60" width="0.70" height="29.80" fill="#5e1c4e"/><rect x="463.80" y="4.60" width="1.00" height="29.80" fill="#5e1c4e"/><rect x="474.40" y="4.60" width="1.00" height="29.80" fill="#5e1c4e"/><rect x="476.00" y="4.60" width="1.30" height="29.80" fill="#9c1a7a"/><rect x="479.80" y="4.60" width="1.00" height="29.80" fill="#5e1c4e"/><rect x="481.70" y="4.60" width="0.70" height="29.80" fill="#5e1c4e"/><rect x="484.90" y="4.60" width="1.30" height="29.80" fill="#5e1c4e"/><rect x="489.70" y="4.60" width="1.00" height="29.80" fill="#9c1a7a"/><rect x="493.20" y="4.60" width="1.00" height="29.80" fill="#9c1a7a"/><rect x="496.70" y="4.60" width="1.00" height="29.80" fill="#5e1c4e"/><rect x="498.30" y="4.60" width="0.80" height="29.80" fill="#5e1c4e"/><rect x="503.30" y="4.60" width="0.80" height="29.80" fill="#9c1a7a"/><rect x="509.50" y="4.60" width="1.30" height="29.80" fill="#9c1a7a"/><rect x="517.70" y="4.60" width="1.00" height="29.80" fill="#5e1c4e"/><rect x="519.90" y="4.60" width="1.30" height="29.80" fill="#9c1a7a"/><rect x="522.80" y="4.60" width="0.80" height="29.80" fill="#9c1a7a"/><rect x="546.00" y="4.60" width="9.10" height="29.80" fill="#801a66"/><rect x="546.00" y="4.60" width="1.00" height="29.80" fill="#5e1c4e"/><rect x="550.80" y="4.60" width="0.80" height="29.80" fill="#5e1c4e"/><rect x="552.80" y="4.60" width="1.00" height="29.80" fill="#5e1c4e"/><rect x="555.10" y="4.60" width="1.90" height="29.80" fill="#904414"/><rect x="555.10" y="4.60" width="1.30" height="29.80" fill="#62300e"/><rect x="561.50" y="4.60" width="2.00" height="29.80" fill="#904414"/><rect x="561.50" y="4.60" width="1.00" height="29.80" fill="#ae5418"/><rect x="572.50" y="4.60" width="1.80" height="29.80" fill="#904414"/><rect x="572.50" y="4.60" width="1.80" height="29.80" fill="#62300e"/><rect x="580.00" y="4.60" width="128.50" height="29.80" fill="#904414"/><rect x="581.60" y="4.60" width="0.70" height="29.80" fill="#ae5418"/><rect x="583.20" y="4.60" width="1.00" height="29.80" fill="#ae5418"/><rect x="589.00" y="4.60" width="0.70" height="29.80" fill="#62300e"/><rect x="594.40" y="4.60" width="1.30" height="29.80" fill="#ae5418"/><rect x="600.10" y="4.60" width="2.00" height="29.80" fill="#ae5418"/><rect x="602.70" y="4.60" width="1.30" height="29.80" fill="#ae5418"/><rect x="606.50" y="4.60" width="1.00" height="29.80" fill="#ae5418"/><rect x="608.40" y="4.60" width="1.00" height="29.80" fill="#ae5418"/><rect x="611.90" y="4.60" width="0.70" height="29.80" fill="#ae5418"/><rect x="614.20" y="4.60" width="1.00" height="29.80" fill="#62300e"/><rect x="616.80" y="4.60" width="1.30" height="29.80" fill="#62300e"/><rect x="620.60" y="4.60" width="1.00" height="29.80" fill="#ae5418"/><rect x="625.30" y="4.60" width="0.70" height="29.80" fill="#62300e"/><rect x="626.90" y="4.60" width="1.30" height="29.80" fill="#62300e"/><rect x="634.00" y="4.60" width="0.70" height="29.80" fill="#ae5418"/><rect x="637.50" y="4.60" width="1.00" height="29.80" fill="#ae5418"/><rect x="639.70" y="4.60" width="0.80" height="29.80" fill="#62300e"/><rect x="644.00" y="4.60" width="0.80" height="29.80" fill="#ae5418"/><rect x="645.40" y="4.60" width="0.70" height="29.80" fill="#ae5418"/><rect x="647.70" y="4.60" width="0.70" height="29.80" fill="#62300e"/><rect x="649.00" y="4.60" width="1.00" height="29.80" fill="#ae5418"/><rect x="650.60" y="4.60" width="1.00" height="29.80" fill="#ae5418"/><rect x="653.20" y="4.60" width="1.00" height="29.80" fill="#ae5418"/><rect x="656.70" y="4.60" width="2.00" height="29.80" fill="#ae5418"/><rect x="662.90" y="4.60" width="0.80" height="29.80" fill="#ae5418"/><rect x="669.70" y="4.60" width="1.00" height="29.80" fill="#62300e"/><rect x="677.70" y="4.60" width="0.80" height="29.80" fill="#ae5418"/><rect x="685.30" y="4.60" width="2.00" height="29.80" fill="#62300e"/><rect x="688.50" y="4.60" width="1.00" height="29.80" fill="#ae5418"/><rect x="692.00" y="4.60" width="0.70" height="29.80" fill="#62300e"/><rect x="695.20" y="4.60" width="1.00" height="29.80" fill="#62300e"/><rect x="696.80" y="4.60" width="2.00" height="29.80" fill="#62300e"/><rect x="703.30" y="4.60" width="1.00" height="29.80" fill="#62300e"/><rect x="705.50" y="4.60" width="1.00" height="29.80" fill="#ae5418"/><rect x="718.00" y="4.60" width="6.80" height="29.80" fill="#904414"/><rect x="720.20" y="4.60" width="1.00" height="29.80" fill="#ae5418"/><rect x="724.60" y="4.60" width="0.20" height="29.80" fill="#ae5418"/><rect x="724.80" y="4.60" width="3.20" height="29.80" fill="#2a5c12"/><rect x="724.80" y="4.60" width="1.00" height="29.80" fill="#1c440c"/><rect x="726.70" y="4.60" width="1.00" height="29.80" fill="#3e7e20"/><rect x="734.00" y="4.60" width="3.60" height="29.80" fill="#2a5c12"/><rect x="734.00" y="4.60" width="0.70" height="29.80" fill="#3e7e20"/><rect x="735.90" y="4.60" width="0.70" height="29.80" fill="#3e7e20"/><rect x="747.50" y="4.60" width="6.50" height="29.80" fill="#2a5c12"/><rect x="747.50" y="4.60" width="1.30" height="29.80" fill="#3e7e20"/><rect x="752.00" y="4.60" width="0.70" height="29.80" fill="#1c440c"/><rect x="18.00" y="12.20" width="3.50" height="0.80" fill="#d8d8d8"/><rect x="22.50" y="12.20" width="3.50" height="0.80" fill="#d8d8d8"/><rect x="70.50" y="12.20" width="3.00" height="0.80" fill="#d8d8d8"/><rect x="75.00" y="12.20" width="3.00" height="0.80" fill="#d8d8d8"/><rect x="101.50" y="12.20" width="3.00" height="0.80" fill="#d8d8d8"/><rect x="398.50" y="12.20" width="9.00" height="0.80" fill="#d8d8d8"/><rect x="409.00" y="12.20" width="6.00" height="0.80" fill="#d8d8d8"/><rect x="421.50" y="12.20" width="4.50" height="0.80" fill="#d8d8d8"/><rect x="427.00" y="12.20" width="4.00" height="0.80" fill="#d8d8d8"/><rect x="435.00" y="12.20" width="3.50" height="0.80" fill="#d8d8d8"/><rect x="447.00" y="12.20" width="4.00" height="0.80" fill="#d8d8d8"/><rect x="482.00" y="12.20" width="3.50" height="0.80" fill="#d8d8d8"/><rect x="522.50" y="12.20" width="3.50" height="0.80" fill="#d8d8d8"/><rect x="550.00" y="12.20" width="3.00" height="0.80" fill="#d8d8d8"/><rect x="635.00" y="12.20" width="3.00" height="0.80" fill="#d8d8d8"/><rect x="685.00" y="12.20" width="3.00" height="0.80" fill="#d8d8d8"/><rect x="5.30" y="36.90" width="24.30" height="32.80" fill="#4418b4"/><rect x="5.30" y="36.90" width="0.70" height="32.80" fill="#5424cc"/><rect x="12.70" y="36.90" width="1.00" height="32.80" fill="#5424cc"/><rect x="17.10" y="36.90" width="2.00" height="32.80" fill="#5424cc"/><rect x="27.70" y="36.90" width="1.00" height="32.80" fill="#34128e"/><rect x="5.30" y="58.20" width="24.30" height="1.40" fill="#34128e" opacity="0.9"/><rect x="6.60" y="49.20" width="1.40" height="8.00" fill="#aab2f6"/><rect x="6.60" y="61.40" width="1.40" height="7.90" fill="#aab2f6"/><rect x="13.00" y="49.20" width="3.50" height="8.00" fill="#aab2f6"/><rect x="13.00" y="61.40" width="3.50" height="7.90" fill="#aab2f6"/><rect x="17.20" y="49.20" width="5.80" height="8.00" fill="#aab2f6"/><rect x="17.20" y="61.40" width="5.80" height="7.90" fill="#aab2f6"/><rect x="23.80" y="49.20" width="2.80" height="8.00" fill="#aab2f6"/><rect x="23.80" y="61.40" width="2.80" height="7.90" fill="#aab2f6"/><rect x="27.20" y="49.20" width="2.00" height="8.00" fill="#aab2f6"/><rect x="27.20" y="61.40" width="2.00" height="7.90" fill="#aab2f6"/><rect x="13.00" y="50.50" width="16.00" height="0.80" fill="#c8b870" opacity="0.5"/><rect x="30.50" y="36.90" width="2.00" height="32.80" fill="#7a644e"/><rect x="30.50" y="58.20" width="2.00" height="1.40" fill="#5e4c3a" opacity="0.9"/><rect x="33.60" y="36.90" width="152.60" height="32.80" fill="#7a644e"/><rect x="33.60" y="36.90" width="0.70" height="32.80" fill="#5e4c3a"/><rect x="35.50" y="36.90" width="0.70" height="32.80" fill="#5e4c3a"/><rect x="37.80" y="36.90" width="1.30" height="32.80" fill="#5e4c3a"/><rect x="40.00" y="36.90" width="2.00" height="32.80" fill="#8e7a64"/><rect x="43.60" y="36.90" width="1.30" height="32.80" fill="#5e4c3a"/><rect x="47.40" y="36.90" width="1.30" height="32.80" fill="#5e4c3a"/><rect x="51.50" y="36.90" width="0.70" height="32.80" fill="#5e4c3a"/><rect x="52.80" y="36.90" width="1.30" height="32.80" fill="#5e4c3a"/><rect x="55.30" y="36.90" width="0.70" height="32.80" fill="#8e7a64"/><rect x="57.60" y="36.90" width="0.70" height="32.80" fill="#8e7a64"/><rect x="59.50" y="36.90" width="1.30" height="32.80" fill="#5e4c3a"/><rect x="63.60" y="36.90" width="0.70" height="32.80" fill="#5e4c3a"/><rect x="67.50" y="36.90" width="0.80" height="32.80" fill="#8e7a64"/><rect x="69.90" y="36.90" width="1.30" height="32.80" fill="#5e4c3a"/><rect x="72.80" y="36.90" width="1.00" height="32.80" fill="#5e4c3a"/><rect x="75.00" y="36.90" width="2.00" height="32.80" fill="#5e4c3a"/><rect x="80.50" y="36.90" width="2.00" height="32.80" fill="#8e7a64"/><rect x="88.20" y="36.90" width="1.30" height="32.80" fill="#5e4c3a"/><rect x="90.10" y="36.90" width="0.70" height="32.80" fill="#8e7a64"/><rect x="92.40" y="36.90" width="0.80" height="32.80" fill="#5e4c3a"/><rect x="94.10" y="36.90" width="2.00" height="32.80" fill="#5e4c3a"/><rect x="97.00" y="36.90" width="1.00" height="32.80" fill="#5e4c3a"/><rect x="99.60" y="36.90" width="1.30" height="32.80" fill="#5e4c3a"/><rect x="101.50" y="36.90" width="1.00" height="32.80" fill="#5e4c3a"/><rect x="103.10" y="36.90" width="1.00" height="32.80" fill="#8e7a64"/><rect x="106.30" y="36.90" width="1.30" height="32.80" fill="#8e7a64"/><rect x="108.20" y="36.90" width="1.00" height="32.80" fill="#5e4c3a"/><rect x="110.10" y="36.90" width="1.00" height="32.80" fill="#5e4c3a"/><rect x="112.00" y="36.90" width="1.30" height="32.80" fill="#8e7a64"/><rect x="115.80" y="36.90" width="1.30" height="32.80" fill="#5e4c3a"/><rect x="118.00" y="36.90" width="1.00" height="32.80" fill="#8e7a64"/><rect x="120.20" y="36.90" width="2.00" height="32.80" fill="#8e7a64"/><rect x="129.50" y="36.90" width="2.00" height="32.80" fill="#8e7a64"/><rect x="134.70" y="36.90" width="0.70" height="32.80" fill="#5e4c3a"/><rect x="146.60" y="36.90" width="0.80" height="32.80" fill="#8e7a64"/><rect x="149.90" y="36.90" width="0.80" height="32.80" fill="#8e7a64"/><rect x="151.90" y="36.90" width="0.80" height="32.80" fill="#5e4c3a"/><rect x="155.20" y="36.90" width="0.80" height="32.80" fill="#8e7a64"/><rect x="158.50" y="36.90" width="1.00" height="32.80" fill="#8e7a64"/><rect x="160.10" y="36.90" width="0.80" height="32.80" fill="#8e7a64"/><rect x="161.80" y="36.90" width="0.70" height="32.80" fill="#5e4c3a"/><rect x="163.40" y="36.90" width="0.80" height="32.80" fill="#5e4c3a"/><rect x="165.40" y="36.90" width="1.30" height="32.80" fill="#8e7a64"/><rect x="167.30" y="36.90" width="1.00" height="32.80" fill="#8e7a64"/><rect x="168.90" y="36.90" width="2.00" height="32.80" fill="#8e7a64"/><rect x="173.40" y="36.90" width="1.00" height="32.80" fill="#5e4c3a"/><rect x="175.30" y="36.90" width="1.00" height="32.80" fill="#5e4c3a"/><rect x="176.90" y="36.90" width="1.00" height="32.80" fill="#5e4c3a"/><rect x="180.40" y="36.90" width="1.00" height="32.80" fill="#8e7a64"/><rect x="182.30" y="36.90" width="1.00" height="32.80" fill="#5e4c3a"/><rect x="184.90" y="36.90" width="0.70" height="32.80" fill="#8e7a64"/><rect x="39.60" y="49.07" width="0.60" height="20.23" fill="#f6e2c8"/><rect x="40.20" y="49.28" width="1.20" height="20.02" fill="#f6e2c8"/><rect x="41.40" y="47.99" width="0.30" height="21.31" fill="#f6e2c8"/><rect x="44.80" y="47.50" width="1.00" height="21.80" fill="#f6e2c8"/><rect x="46.60" y="49.18" width="1.00" height="20.12" fill="#f6e2c8"/><rect x="49.20" y="46.60" width="0.60" height="22.70" fill="#f6e2c8"/><rect x="50.20" y="49.21" width="0.60" height="20.09" fill="#f6e2c8"/><rect x="53.75" y="47.22" width="1.00" height="22.08" fill="#f6e2c8"/><rect x="54.75" y="46.34" width="0.80" height="22.96" fill="#f6e2c8"/><rect x="55.95" y="47.29" width="0.80" height="22.01" fill="#f6e2c8"/><rect x="56.95" y="45.99" width="0.60" height="23.31" fill="#f6e2c8"/><rect x="57.55" y="46.13" width="1.20" height="23.17" fill="#f6e2c8"/><rect x="58.95" y="48.56" width="0.80" height="20.74" fill="#f6e2c8"/><rect x="60.15" y="49.10" width="1.20" height="20.20" fill="#f6e2c8"/><rect x="63.50" y="48.93" width="0.80" height="20.37" fill="#f6e2c8"/><rect x="64.30" y="48.00" width="1.00" height="21.30" fill="#f6e2c8"/><rect x="65.70" y="48.12" width="1.20" height="21.18" fill="#f6e2c8"/><rect x="68.30" y="48.69" width="0.80" height="20.61" fill="#f6e2c8"/><rect x="69.30" y="48.55" width="0.80" height="20.75" fill="#f6e2c8"/><rect x="71.30" y="46.89" width="0.60" height="22.41" fill="#f6e2c8"/><rect x="74.00" y="46.46" width="0.60" height="22.84" fill="#f6e2c8"/><rect x="74.80" y="48.04" width="1.00" height="21.26" fill="#f6e2c8"/><rect x="76.00" y="45.23" width="1.00" height="24.07" fill="#f6e2c8"/><rect x="77.40" y="46.78" width="0.80" height="22.52" fill="#f6e2c8"/><rect x="78.60" y="45.72" width="0.60" height="23.58" fill="#f6e2c8"/><rect x="79.60" y="45.22" width="0.60" height="24.08" fill="#f6e2c8"/><rect x="83.30" y="47.16" width="1.00" height="22.14" fill="#f6e2c8"/><rect x="84.30" y="47.99" width="0.80" height="21.31" fill="#f6e2c8"/><rect x="85.30" y="47.89" width="0.60" height="21.41" fill="#f6e2c8"/><rect x="86.30" y="47.50" width="0.70" height="21.80" fill="#f6e2c8"/><rect x="94.80" y="49.07" width="0.60" height="20.23" fill="#f6e2c8"/><rect x="95.40" y="48.04" width="0.80" height="21.26" fill="#f6e2c8"/><rect x="96.40" y="48.09" width="0.80" height="21.21" fill="#f6e2c8"/><rect x="97.20" y="50.37" width="1.00" height="18.93" fill="#f6e2c8"/><rect x="98.60" y="49.37" width="0.80" height="19.93" fill="#f6e2c8"/><rect x="99.40" y="50.76" width="1.20" height="18.54" fill="#f6e2c8"/><rect x="106.20" y="49.14" width="1.00" height="20.16" fill="#f6e2c8"/><rect x="117.70" y="50.49" width="0.60" height="18.81" fill="#f6e2c8"/><rect x="119.70" y="48.37" width="0.60" height="20.93" fill="#f6e2c8"/><rect x="122.90" y="50.14" width="0.80" height="19.16" fill="#f6e2c8"/><rect x="124.70" y="49.41" width="0.80" height="19.89" fill="#f6e2c8"/><rect x="125.70" y="50.08" width="0.60" height="19.22" fill="#f6e2c8"/><rect x="126.30" y="49.07" width="0.70" height="20.23" fill="#f6e2c8"/><rect x="135.40" y="49.68" width="1.20" height="19.62" fill="#f6e2c8"/><rect x="136.60" y="48.85" width="0.60" height="20.45" fill="#f6e2c8"/><rect x="137.40" y="47.76" width="1.00" height="21.54" fill="#f6e2c8"/><rect x="153.00" y="50.74" width="0.80" height="18.56" fill="#f6e2c8"/><rect x="153.80" y="50.52" width="0.80" height="18.78" fill="#f6e2c8"/><rect x="154.80" y="50.59" width="0.60" height="18.71" fill="#f6e2c8"/><rect x="155.80" y="48.34" width="0.80" height="20.96" fill="#f6e2c8"/><rect x="156.60" y="50.38" width="0.60" height="18.92" fill="#f6e2c8"/><rect x="157.40" y="47.99" width="0.90" height="21.31" fill="#f6e2c8"/><rect x="161.50" y="48.42" width="1.20" height="20.88" fill="#f6e2c8"/><rect x="162.90" y="48.52" width="0.60" height="20.78" fill="#f6e2c8"/><rect x="163.50" y="48.86" width="0.80" height="20.44" fill="#f6e2c8"/><rect x="165.90" y="48.63" width="0.60" height="20.67" fill="#f6e2c8"/><rect x="166.70" y="48.80" width="0.80" height="20.50" fill="#f6e2c8"/><rect x="167.90" y="48.09" width="0.60" height="21.21" fill="#f6e2c8"/><rect x="170.80" y="46.35" width="0.60" height="22.95" fill="#f6e2c8"/><rect x="171.80" y="46.29" width="1.00" height="23.01" fill="#f6e2c8"/><rect x="173.80" y="46.86" width="0.80" height="22.44" fill="#f6e2c8"/><rect x="175.40" y="47.50" width="0.60" height="21.80" fill="#f6e2c8"/><rect x="176.40" y="47.42" width="1.20" height="21.88" fill="#f6e2c8"/><rect x="177.60" y="47.01" width="0.80" height="22.29" fill="#f6e2c8"/><rect x="178.60" y="47.04" width="1.00" height="22.26" fill="#f6e2c8"/><rect x="180.00" y="47.25" width="1.00" height="22.05" fill="#f6e2c8"/><rect x="181.40" y="46.99" width="0.80" height="22.31" fill="#f6e2c8"/><rect x="182.20" y="45.84" width="1.20" height="23.46" fill="#f6e2c8"/><rect x="183.60" y="46.20" width="0.80" height="23.10" fill="#f6e2c8"/><rect x="33.60" y="58.20" width="152.60" height="1.40" fill="#5e4c3a" opacity="0.9"/><rect x="186.70" y="36.90" width="6.60" height="32.80" fill="#801a66"/><rect x="189.00" y="36.90" width="1.00" height="32.80" fill="#9c1a7a"/><rect x="190.60" y="36.90" width="0.70" height="32.80" fill="#9c1a7a"/><rect x="191.90" y="36.90" width="1.00" height="32.80" fill="#5e1c4e"/><rect x="187.00" y="48.50" width="1.00" height="20.80" fill="#ff84e0"/><rect x="188.40" y="49.47" width="0.60" height="19.83" fill="#ff84e0"/><rect x="190.50" y="48.12" width="0.60" height="21.18" fill="#ff84e0"/><rect x="192.70" y="45.92" width="0.30" height="23.38" fill="#ff84e0"/><rect x="193.30" y="36.90" width="19.70" height="32.80" fill="#801a66"/><rect x="193.30" y="36.90" width="1.30" height="32.80" fill="#9c1a7a"/><rect x="195.50" y="36.90" width="1.30" height="32.80" fill="#5e1c4e"/><rect x="198.00" y="36.90" width="1.00" height="32.80" fill="#5e1c4e"/><rect x="202.70" y="36.90" width="1.30" height="32.80" fill="#9c1a7a"/><rect x="206.50" y="36.90" width="0.80" height="32.80" fill="#5e1c4e"/><rect x="208.20" y="36.90" width="0.80" height="32.80" fill="#9c1a7a"/><rect x="211.50" y="36.90" width="1.00" height="32.80" fill="#5e1c4e"/><rect x="203.00" y="49.22" width="0.80" height="20.08" fill="#ff84e0"/><rect x="207.20" y="49.38" width="0.60" height="19.92" fill="#ff84e0"/><rect x="209.50" y="46.22" width="1.20" height="23.08" fill="#ff84e0"/><rect x="210.70" y="47.08" width="0.30" height="22.22" fill="#ff84e0"/><rect x="213.00" y="36.90" width="313.00" height="32.80" fill="#801a66"/><rect x="213.00" y="36.90" width="1.00" height="32.80" fill="#5e1c4e"/><rect x="221.10" y="36.90" width="0.70" height="32.80" fill="#9c1a7a"/><rect x="223.40" y="36.90" width="1.00" height="32.80" fill="#9c1a7a"/><rect x="226.90" y="36.90" width="0.70" height="32.80" fill="#5e1c4e"/><rect x="233.90" y="36.90" width="1.00" height="32.80" fill="#9c1a7a"/><rect x="237.40" y="36.90" width="0.70" height="32.80" fill="#9c1a7a"/><rect x="240.60" y="36.90" width="0.70" height="32.80" fill="#5e1c4e"/><rect x="241.90" y="36.90" width="1.00" height="32.80" fill="#5e1c4e"/><rect x="248.30" y="36.90" width="1.00" height="32.80" fill="#5e1c4e"/><rect x="251.80" y="36.90" width="0.80" height="32.80" fill="#9c1a7a"/><rect x="257.40" y="36.90" width="0.80" height="32.80" fill="#5e1c4e"/><rect x="259.40" y="36.90" width="0.80" height="32.80" fill="#9c1a7a"/><rect x="261.10" y="36.90" width="0.80" height="32.80" fill="#5e1c4e"/><rect x="264.40" y="36.90" width="1.00" height="32.80" fill="#5e1c4e"/><rect x="266.30" y="36.90" width="1.00" height="32.80" fill="#5e1c4e"/><rect x="267.90" y="36.90" width="2.00" height="32.80" fill="#5e1c4e"/><rect x="271.10" y="36.90" width="0.80" height="32.80" fill="#5e1c4e"/><rect x="276.10" y="36.90" width="1.00" height="32.80" fill="#9c1a7a"/><rect x="278.70" y="36.90" width="2.00" height="32.80" fill="#5e1c4e"/><rect x="283.20" y="36.90" width="1.00" height="32.80" fill="#5e1c4e"/><rect x="286.40" y="36.90" width="2.00" height="32.80" fill="#9c1a7a"/><rect x="290.90" y="36.90" width="1.00" height="32.80" fill="#5e1c4e"/><rect x="294.40" y="36.90" width="0.70" height="32.80" fill="#9c1a7a"/><rect x="296.70" y="36.90" width="1.00" height="32.80" fill="#5e1c4e"/><rect x="300.30" y="36.90" width="2.00" height="32.80" fill="#5e1c4e"/><rect x="302.90" y="36.90" width="2.00" height="32.80" fill="#9c1a7a"/><rect x="306.10" y="36.90" width="0.70" height="32.80" fill="#9c1a7a"/><rect x="307.70" y="36.90" width="1.00" height="32.80" fill="#5e1c4e"/><rect x="309.30" y="36.90" width="1.00" height="32.80" fill="#9c1a7a"/><rect x="310.90" y="36.90" width="0.80" height="32.80" fill="#5e1c4e"/><rect x="312.90" y="36.90" width="1.30" height="32.80" fill="#9c1a7a"/><rect x="316.70" y="36.90" width="1.30" height="32.80" fill="#9c1a7a"/><rect x="320.80" y="36.90" width="0.70" height="32.80" fill="#9c1a7a"/><rect x="323.10" y="36.90" width="0.80" height="32.80" fill="#9c1a7a"/><rect x="327.40" y="36.90" width="1.00" height="32.80" fill="#9c1a7a"/><rect x="330.90" y="36.90" width="1.00" height="32.80" fill="#9c1a7a"/><rect x="334.10" y="36.90" width="0.80" height="32.80" fill="#5e1c4e"/><rect x="339.70" y="36.90" width="1.00" height="32.80" fill="#5e1c4e"/><rect x="341.30" y="36.90" width="1.00" height="32.80" fill="#9c1a7a"/><rect x="342.90" y="36.90" width="1.00" height="32.80" fill="#5e1c4e"/><rect x="345.50" y="36.90" width="1.00" height="32.80" fill="#9c1a7a"/><rect x="350.40" y="36.90" width="1.30" height="32.80" fill="#5e1c4e"/><rect x="352.60" y="36.90" width="1.00" height="32.80" fill="#5e1c4e"/><rect x="356.10" y="36.90" width="2.00" height="32.80" fill="#9c1a7a"/><rect x="359.70" y="36.90" width="1.00" height="32.80" fill="#9c1a7a"/><rect x="361.30" y="36.90" width="0.80" height="32.80" fill="#9c1a7a"/><rect x="368.10" y="36.90" width="2.00" height="32.80" fill="#5e1c4e"/><rect x="372.60" y="36.90" width="1.30" height="32.80" fill="#5e1c4e"/><rect x="375.50" y="36.90" width="1.30" height="32.80" fill="#5e1c4e"/><rect x="377.70" y="36.90" width="1.30" height="32.80" fill="#9c1a7a"/><rect x="381.50" y="36.90" width="1.00" height="32.80" fill="#5e1c4e"/><rect x="385.00" y="36.90" width="0.70" height="32.80" fill="#9c1a7a"/><rect x="388.20" y="36.90" width="1.00" height="32.80" fill="#5e1c4e"/><rect x="393.60" y="36.90" width="1.30" height="32.80" fill="#5e1c4e"/><rect x="395.50" y="36.90" width="2.00" height="32.80" fill="#5e1c4e"/><rect x="400.00" y="36.90" width="1.00" height="32.80" fill="#9c1a7a"/><rect x="402.60" y="36.90" width="1.00" height="32.80" fill="#5e1c4e"/><rect x="405.20" y="36.90" width="0.80" height="32.80" fill="#5e1c4e"/><rect x="407.60" y="36.90" width="1.30" height="32.80" fill="#5e1c4e"/><rect x="409.80" y="36.90" width="1.00" height="32.80" fill="#9c1a7a"/><rect x="412.00" y="36.90" width="0.80" height="32.80" fill="#9c1a7a"/><rect x="413.40" y="36.90" width="0.70" height="32.80" fill="#5e1c4e"/><rect x="415.00" y="36.90" width="0.70" height="32.80" fill="#9c1a7a"/><rect x="416.90" y="36.90" width="2.00" height="32.80" fill="#5e1c4e"/><rect x="421.40" y="36.90" width="1.00" height="32.80" fill="#5e1c4e"/><rect x="428.10" y="36.90" width="1.00" height="32.80" fill="#9c1a7a"/><rect x="431.60" y="36.90" width="1.00" height="32.80" fill="#5e1c4e"/><rect x="434.20" y="36.90" width="1.30" height="32.80" fill="#9c1a7a"/><rect x="441.30" y="36.90" width="2.00" height="32.80" fill="#5e1c4e"/><rect x="444.20" y="36.90" width="1.30" height="32.80" fill="#9c1a7a"/><rect x="448.40" y="36.90" width="0.80" height="32.80" fill="#5e1c4e"/><rect x="450.40" y="36.90" width="0.80" height="32.80" fill="#5e1c4e"/><rect x="452.10" y="36.90" width="0.70" height="32.80" fill="#5e1c4e"/><rect x="455.70" y="36.90" width="1.00" height="32.80" fill="#5e1c4e"/><rect x="460.50" y="36.90" width="0.80" height="32.80" fill="#9c1a7a"/><rect x="461.90" y="36.90" width="0.70" height="32.80" fill="#5e1c4e"/><rect x="463.80" y="36.90" width="1.00" height="32.80" fill="#5e1c4e"/><rect x="474.40" y="36.90" width="1.00" height="32.80" fill="#5e1c4e"/><rect x="476.00" y="36.90" width="1.30" height="32.80" fill="#9c1a7a"/><rect x="479.80" y="36.90" width="1.00" height="32.80" fill="#5e1c4e"/><rect x="481.70" y="36.90" width="0.70" height="32.80" fill="#5e1c4e"/><rect x="484.90" y="36.90" width="1.30" height="32.80" fill="#5e1c4e"/><rect x="489.70" y="36.90" width="1.00" height="32.80" fill="#9c1a7a"/><rect x="493.20" y="36.90" width="1.00" height="32.80" fill="#9c1a7a"/><rect x="496.70" y="36.90" width="1.00" height="32.80" fill="#5e1c4e"/><rect x="498.30" y="36.90" width="0.80" height="32.80" fill="#5e1c4e"/><rect x="503.30" y="36.90" width="0.80" height="32.80" fill="#9c1a7a"/><rect x="509.50" y="36.90" width="1.30" height="32.80" fill="#9c1a7a"/><rect x="517.70" y="36.90" width="1.00" height="32.80" fill="#5e1c4e"/><rect x="519.90" y="36.90" width="1.30" height="32.80" fill="#9c1a7a"/><rect x="522.80" y="36.90" width="0.80" height="32.80" fill="#9c1a7a"/><rect x="215.62" y="45.84" width="0.80" height="23.46" fill="#ff84e0"/><rect x="216.62" y="45.23" width="1.20" height="24.07" fill="#ff84e0"/><rect x="218.22" y="46.33" width="0.23" height="22.97" fill="#ff84e0"/><rect x="224.96" y="45.94" width="1.20" height="23.36" fill="#ff84e0"/><rect x="226.36" y="45.89" width="0.80" height="23.41" fill="#ff84e0"/><rect x="227.56" y="47.56" width="0.80" height="21.74" fill="#ff84e0"/><rect x="231.30" y="46.76" width="1.00" height="22.54" fill="#ff84e0"/><rect x="232.30" y="49.86" width="1.00" height="19.44" fill="#ff84e0"/><rect x="236.57" y="46.08" width="1.20" height="23.22" fill="#ff84e0"/><rect x="239.37" y="45.14" width="1.20" height="24.16" fill="#ff84e0"/><rect x="240.77" y="44.94" width="0.80" height="24.36" fill="#ff84e0"/><rect x="241.97" y="46.96" width="0.80" height="22.34" fill="#ff84e0"/><rect x="242.97" y="45.26" width="0.80" height="24.04" fill="#ff84e0"/><rect x="244.17" y="44.44" width="1.00" height="24.86" fill="#ff84e0"/><rect x="251.63" y="47.45" width="0.60" height="21.85" fill="#ff84e0"/><rect x="252.43" y="47.58" width="1.20" height="21.72" fill="#ff84e0"/><rect x="253.63" y="45.61" width="0.60" height="23.69" fill="#ff84e0"/><rect x="257.33" y="47.46" width="1.20" height="21.84" fill="#ff84e0"/><rect x="258.73" y="49.56" width="0.60" height="19.74" fill="#ff84e0"/><rect x="259.33" y="47.70" width="0.60" height="21.60" fill="#ff84e0"/><rect x="260.13" y="49.17" width="0.60" height="20.13" fill="#ff84e0"/><rect x="268.40" y="47.68" width="1.00" height="21.62" fill="#ff84e0"/><rect x="269.40" y="46.97" width="0.80" height="22.33" fill="#ff84e0"/><rect x="270.40" y="46.03" width="0.80" height="23.27" fill="#ff84e0"/><rect x="271.60" y="47.94" width="1.20" height="21.36" fill="#ff84e0"/><rect x="273.20" y="47.99" width="0.60" height="21.31" fill="#ff84e0"/><rect x="274.20" y="46.39" width="1.00" height="22.91" fill="#ff84e0"/><rect x="280.28" y="49.19" width="0.80" height="20.11" fill="#ff84e0"/><rect x="281.48" y="47.78" width="1.00" height="21.52" fill="#ff84e0"/><rect x="282.88" y="47.65" width="1.20" height="21.65" fill="#ff84e0"/><rect x="293.31" y="49.26" width="1.20" height="20.04" fill="#ff84e0"/><rect x="294.71" y="47.98" width="1.20" height="21.32" fill="#ff84e0"/><rect x="296.31" y="49.31" width="1.20" height="19.99" fill="#ff84e0"/><rect x="297.71" y="50.08" width="1.00" height="19.22" fill="#ff84e0"/><rect x="298.71" y="48.56" width="0.80" height="20.74" fill="#ff84e0"/><rect x="299.91" y="50.00" width="0.80" height="19.30" fill="#ff84e0"/><rect x="300.71" y="49.26" width="0.80" height="20.04" fill="#ff84e0"/><rect x="301.71" y="50.50" width="0.07" height="18.80" fill="#ff84e0"/><rect x="303.83" y="47.29" width="0.80" height="22.01" fill="#ff84e0"/><rect x="304.83" y="48.72" width="1.20" height="20.58" fill="#ff84e0"/><rect x="306.03" y="49.83" width="0.60" height="19.47" fill="#ff84e0"/><rect x="306.63" y="48.90" width="0.80" height="20.40" fill="#ff84e0"/><rect x="307.43" y="46.43" width="1.20" height="22.87" fill="#ff84e0"/><rect x="309.03" y="46.58" width="1.20" height="22.72" fill="#ff84e0"/><rect x="310.43" y="48.87" width="1.00" height="20.43" fill="#ff84e0"/><rect x="317.54" y="49.50" width="0.80" height="19.80" fill="#ff84e0"/><rect x="318.34" y="47.07" width="1.20" height="22.23" fill="#ff84e0"/><rect x="319.74" y="47.23" width="1.20" height="22.07" fill="#ff84e0"/><rect x="320.94" y="47.20" width="0.09" height="22.10" fill="#ff84e0"/><rect x="324.05" y="47.29" width="1.00" height="22.01" fill="#ff84e0"/><rect x="325.25" y="46.13" width="1.00" height="23.17" fill="#ff84e0"/><rect x="326.25" y="45.61" width="0.14" height="23.69" fill="#ff84e0"/><rect x="330.60" y="47.16" width="1.20" height="22.14" fill="#ff84e0"/><rect x="332.20" y="46.69" width="1.13" height="22.61" fill="#ff84e0"/><rect x="338.34" y="49.91" width="1.00" height="19.39" fill="#ff84e0"/><rect x="339.34" y="49.92" width="1.20" height="19.38" fill="#ff84e0"/><rect x="341.34" y="47.58" width="0.60" height="21.72" fill="#ff84e0"/><rect x="341.94" y="48.26" width="1.00" height="21.04" fill="#ff84e0"/><rect x="344.94" y="49.44" width="1.03" height="19.86" fill="#ff84e0"/><rect x="353.07" y="47.56" width="0.60" height="21.74" fill="#ff84e0"/><rect x="358.32" y="48.20" width="1.00" height="21.10" fill="#ff84e0"/><rect x="359.52" y="48.91" width="1.00" height="20.39" fill="#ff84e0"/><rect x="360.92" y="47.38" width="0.60" height="21.92" fill="#ff84e0"/><rect x="361.52" y="47.09" width="0.80" height="22.21" fill="#ff84e0"/><rect x="362.52" y="47.00" width="0.80" height="22.30" fill="#ff84e0"/><rect x="363.32" y="48.14" width="1.00" height="21.16" fill="#ff84e0"/><rect x="364.32" y="48.04" width="1.20" height="21.26" fill="#ff84e0"/><rect x="369.11" y="48.41" width="0.80" height="20.89" fill="#ff84e0"/><rect x="369.91" y="48.93" width="0.60" height="20.37" fill="#ff84e0"/><rect x="370.71" y="50.53" width="0.80" height="18.77" fill="#ff84e0"/><rect x="371.51" y="49.17" width="1.00" height="20.13" fill="#ff84e0"/><rect x="373.91" y="50.02" width="0.60" height="19.28" fill="#ff84e0"/><rect x="378.75" y="49.80" width="0.60" height="19.50" fill="#ff84e0"/><rect x="379.55" y="49.63" width="1.20" height="19.67" fill="#ff84e0"/><rect x="381.75" y="49.28" width="0.27" height="20.02" fill="#ff84e0"/><rect x="385.56" y="48.01" width="1.20" height="21.29" fill="#ff84e0"/><rect x="387.16" y="47.59" width="0.60" height="21.71" fill="#ff84e0"/><rect x="387.96" y="49.27" width="0.60" height="20.03" fill="#ff84e0"/><rect x="388.56" y="46.90" width="1.20" height="22.40" fill="#ff84e0"/><rect x="390.16" y="47.65" width="1.00" height="21.65" fill="#ff84e0"/><rect x="395.55" y="48.55" width="0.60" height="20.75" fill="#ff84e0"/><rect x="399.41" y="49.09" width="1.00" height="20.21" fill="#ff84e0"/><rect x="400.81" y="48.87" width="1.00" height="20.43" fill="#ff84e0"/><rect x="402.01" y="49.08" width="0.80" height="20.22" fill="#ff84e0"/><rect x="402.81" y="48.30" width="1.20" height="21.00" fill="#ff84e0"/><rect x="404.01" y="48.80" width="0.60" height="20.50" fill="#ff84e0"/><rect x="404.81" y="47.78" width="0.80" height="21.52" fill="#ff84e0"/><rect x="406.21" y="47.21" width="1.00" height="22.09" fill="#ff84e0"/><rect x="412.23" y="48.05" width="1.20" height="21.25" fill="#ff84e0"/><rect x="413.63" y="49.12" width="1.20" height="20.18" fill="#ff84e0"/><rect x="416.23" y="49.14" width="0.80" height="20.16" fill="#ff84e0"/><rect x="422.62" y="45.99" width="1.00" height="23.31" fill="#ff84e0"/><rect x="424.42" y="46.24" width="1.20" height="23.06" fill="#ff84e0"/><rect x="425.82" y="46.51" width="1.00" height="22.79" fill="#ff84e0"/><rect x="432.13" y="47.73" width="1.20" height="21.57" fill="#ff84e0"/><rect x="433.53" y="49.63" width="1.20" height="19.67" fill="#ff84e0"/><rect x="434.93" y="47.91" width="1.20" height="21.39" fill="#ff84e0"/><rect x="436.13" y="48.94" width="1.00" height="20.36" fill="#ff84e0"/><rect x="437.33" y="50.54" width="0.60" height="18.76" fill="#ff84e0"/><rect x="438.13" y="49.07" width="0.55" height="20.23" fill="#ff84e0"/><rect x="440.92" y="47.12" width="1.20" height="22.18" fill="#ff84e0"/><rect x="442.12" y="46.54" width="1.00" height="22.76" fill="#ff84e0"/><rect x="443.32" y="47.98" width="0.32" height="21.32" fill="#ff84e0"/><rect x="445.12" y="46.91" width="0.60" height="22.39" fill="#ff84e0"/><rect x="445.92" y="47.64" width="1.20" height="21.66" fill="#ff84e0"/><rect x="447.52" y="46.79" width="0.60" height="22.51" fill="#ff84e0"/><rect x="448.72" y="48.51" width="1.00" height="20.79" fill="#ff84e0"/><rect x="451.12" y="47.71" width="0.80" height="21.59" fill="#ff84e0"/><rect x="452.12" y="48.72" width="0.10" height="20.58" fill="#ff84e0"/><rect x="463.66" y="50.91" width="0.80" height="18.39" fill="#ff84e0"/><rect x="464.86" y="50.78" width="1.20" height="18.52" fill="#ff84e0"/><rect x="467.26" y="51.39" width="1.00" height="17.91" fill="#ff84e0"/><rect x="468.46" y="48.54" width="0.60" height="20.76" fill="#ff84e0"/><rect x="470.26" y="49.87" width="0.08" height="19.43" fill="#ff84e0"/><rect x="472.11" y="49.67" width="0.60" height="19.63" fill="#ff84e0"/><rect x="472.71" y="48.35" width="0.60" height="20.95" fill="#ff84e0"/><rect x="473.31" y="50.62" width="1.00" height="18.68" fill="#ff84e0"/><rect x="474.31" y="51.36" width="1.20" height="17.94" fill="#ff84e0"/><rect x="475.91" y="48.26" width="1.20" height="21.04" fill="#ff84e0"/><rect x="478.11" y="49.87" width="0.80" height="19.43" fill="#ff84e0"/><rect x="478.91" y="51.27" width="1.20" height="18.03" fill="#ff84e0"/><rect x="480.51" y="47.94" width="0.59" height="21.36" fill="#ff84e0"/><rect x="487.32" y="49.05" width="1.20" height="20.25" fill="#ff84e0"/><rect x="488.52" y="48.24" width="1.20" height="21.06" fill="#ff84e0"/><rect x="490.12" y="48.24" width="0.60" height="21.06" fill="#ff84e0"/><rect x="490.72" y="49.49" width="0.75" height="19.81" fill="#ff84e0"/><rect x="496.77" y="48.79" width="1.20" height="20.51" fill="#ff84e0"/><rect x="498.37" y="47.07" width="0.80" height="22.23" fill="#ff84e0"/><rect x="499.17" y="46.25" width="1.20" height="23.05" fill="#ff84e0"/><rect x="500.77" y="45.61" width="0.67" height="23.69" fill="#ff84e0"/><rect x="503.87" y="45.95" width="1.20" height="23.35" fill="#ff84e0"/><rect x="505.27" y="46.88" width="0.60" height="22.42" fill="#ff84e0"/><rect x="507.67" y="45.65" width="0.60" height="23.65" fill="#ff84e0"/><rect x="511.47" y="45.91" width="0.55" height="23.39" fill="#ff84e0"/><rect x="516.44" y="48.47" width="0.80" height="20.83" fill="#ff84e0"/><rect x="517.44" y="49.04" width="1.00" height="20.26" fill="#ff84e0"/><rect x="518.44" y="46.79" width="1.00" height="22.51" fill="#ff84e0"/><rect x="520.24" y="49.20" width="0.32" height="20.10" fill="#ff84e0"/><rect x="524.67" y="47.59" width="1.00" height="21.71" fill="#ff84e0"/><rect x="398.50" y="52.80" width="2.50" height="16.50" fill="#ff84e0"/><rect x="401.60" y="52.80" width="4.90" height="16.50" fill="#ff84e0"/><rect x="407.20" y="52.80" width="4.80" height="16.50" fill="#ff84e0"/><rect x="412.50" y="52.80" width="3.00" height="16.50" fill="#ff84e0"/><rect x="416.20" y="52.80" width="4.80" height="16.50" fill="#ff84e0"/><rect x="421.80" y="52.80" width="4.70" height="16.50" fill="#ff84e0"/><rect x="427.20" y="52.80" width="4.80" height="16.50" fill="#ff84e0"/><rect x="432.70" y="52.80" width="3.30" height="16.50" fill="#ff84e0"/><rect x="398.50" y="52.00" width="37.50" height="0.80" fill="#d0a8c4" opacity="0.8"/><rect x="401.00" y="62.00" width="3.00" height="4.50" fill="#a05a90"/><rect x="526.00" y="36.90" width="20.00" height="32.80" fill="#801a66"/><rect x="526.00" y="36.90" width="0.70" height="32.80" fill="#5e1c4e"/><rect x="527.60" y="36.90" width="1.00" height="32.80" fill="#5e1c4e"/><rect x="531.80" y="36.90" width="2.00" height="32.80" fill="#5e1c4e"/><rect x="535.40" y="36.90" width="0.70" height="32.80" fill="#5e1c4e"/><rect x="536.70" y="36.90" width="1.30" height="32.80" fill="#5e1c4e"/><rect x="539.20" y="36.90" width="2.00" height="32.80" fill="#9c1a7a"/><rect x="532.00" y="48.57" width="1.20" height="20.73" fill="#ff84e0"/><rect x="538.00" y="48.31" width="0.80" height="20.99" fill="#ff84e0"/><rect x="539.00" y="49.88" width="0.60" height="19.42" fill="#ff84e0"/><rect x="540.80" y="48.13" width="0.20" height="21.17" fill="#ff84e0"/><rect x="543.60" y="49.69" width="0.60" height="19.61" fill="#ff84e0"/><rect x="545.20" y="49.33" width="0.30" height="19.97" fill="#ff84e0"/><rect x="546.00" y="36.90" width="9.10" height="32.80" fill="#801a66"/><rect x="546.00" y="36.90" width="1.00" height="32.80" fill="#5e1c4e"/><rect x="550.80" y="36.90" width="0.80" height="32.80" fill="#5e1c4e"/><rect x="552.80" y="36.90" width="1.00" height="32.80" fill="#5e1c4e"/><rect x="546.50" y="47.21" width="1.20" height="22.09" fill="#ff84e0"/><rect x="547.90" y="47.40" width="1.20" height="21.90" fill="#ff84e0"/><rect x="549.10" y="46.01" width="1.00" height="23.29" fill="#ff84e0"/><rect x="550.10" y="47.61" width="1.00" height="21.69" fill="#ff84e0"/><rect x="551.50" y="46.86" width="1.20" height="22.44" fill="#ff84e0"/><rect x="553.90" y="46.19" width="0.60" height="23.11" fill="#ff84e0"/><rect x="555.10" y="36.90" width="24.90" height="32.80" fill="#783810"/><rect x="555.10" y="36.90" width="2.00" height="32.80" fill="#904814"/><rect x="561.80" y="36.90" width="0.70" height="32.80" fill="#552808"/><rect x="563.10" y="36.90" width="1.00" height="32.80" fill="#552808"/><rect x="566.60" y="36.90" width="1.30" height="32.80" fill="#552808"/><rect x="569.50" y="36.90" width="1.30" height="32.80" fill="#904814"/><rect x="572.40" y="36.90" width="0.70" height="32.80" fill="#552808"/><rect x="575.60" y="36.90" width="0.70" height="32.80" fill="#904814"/><rect x="578.80" y="36.90" width="0.80" height="32.80" fill="#552808"/><rect x="557.00" y="46.80" width="1.20" height="22.50" fill="#f4b686"/><rect x="558.40" y="49.02" width="1.00" height="20.28" fill="#f4b686"/><rect x="561.50" y="47.10" width="0.60" height="22.20" fill="#f4b686"/><rect x="562.10" y="47.71" width="1.00" height="21.59" fill="#f4b686"/><rect x="563.50" y="49.35" width="1.00" height="19.95" fill="#f4b686"/><rect x="564.70" y="46.51" width="0.60" height="22.79" fill="#f4b686"/><rect x="565.70" y="47.44" width="0.30" height="21.86" fill="#f4b686"/><rect x="568.00" y="44.63" width="1.20" height="24.67" fill="#f4b686"/><rect x="555.10" y="58.20" width="24.90" height="1.40" fill="#552808" opacity="0.9"/><rect x="580.00" y="36.90" width="128.50" height="32.80" fill="#783810"/><rect x="581.60" y="36.90" width="0.70" height="32.80" fill="#904814"/><rect x="583.20" y="36.90" width="1.00" height="32.80" fill="#904814"/><rect x="589.00" y="36.90" width="0.70" height="32.80" fill="#552808"/><rect x="594.40" y="36.90" width="1.30" height="32.80" fill="#904814"/><rect x="600.10" y="36.90" width="2.00" height="32.80" fill="#904814"/><rect x="602.70" y="36.90" width="1.30" height="32.80" fill="#904814"/><rect x="606.50" y="36.90" width="1.00" height="32.80" fill="#904814"/><rect x="608.40" y="36.90" width="1.00" height="32.80" fill="#904814"/><rect x="611.90" y="36.90" width="0.70" height="32.80" fill="#904814"/><rect x="614.20" y="36.90" width="1.00" height="32.80" fill="#552808"/><rect x="616.80" y="36.90" width="1.30" height="32.80" fill="#552808"/><rect x="620.60" y="36.90" width="1.00" height="32.80" fill="#904814"/><rect x="625.30" y="36.90" width="0.70" height="32.80" fill="#552808"/><rect x="626.90" y="36.90" width="1.30" height="32.80" fill="#552808"/><rect x="634.00" y="36.90" width="0.70" height="32.80" fill="#904814"/><rect x="637.50" y="36.90" width="1.00" height="32.80" fill="#904814"/><rect x="639.70" y="36.90" width="0.80" height="32.80" fill="#552808"/><rect x="644.00" y="36.90" width="0.80" height="32.80" fill="#904814"/><rect x="645.40" y="36.90" width="0.70" height="32.80" fill="#904814"/><rect x="647.70" y="36.90" width="0.70" height="32.80" fill="#552808"/><rect x="649.00" y="36.90" width="1.00" height="32.80" fill="#904814"/><rect x="650.60" y="36.90" width="1.00" height="32.80" fill="#904814"/><rect x="653.20" y="36.90" width="1.00" height="32.80" fill="#904814"/><rect x="656.70" y="36.90" width="2.00" height="32.80" fill="#904814"/><rect x="662.90" y="36.90" width="0.80" height="32.80" fill="#904814"/><rect x="669.70" y="36.90" width="1.00" height="32.80" fill="#552808"/><rect x="677.70" y="36.90" width="0.80" height="32.80" fill="#904814"/><rect x="685.30" y="36.90" width="2.00" height="32.80" fill="#552808"/><rect x="688.50" y="36.90" width="1.00" height="32.80" fill="#904814"/><rect x="692.00" y="36.90" width="0.70" height="32.80" fill="#552808"/><rect x="695.20" y="36.90" width="1.00" height="32.80" fill="#552808"/><rect x="696.80" y="36.90" width="2.00" height="32.80" fill="#552808"/><rect x="703.30" y="36.90" width="1.00" height="32.80" fill="#552808"/><rect x="705.50" y="36.90" width="1.00" height="32.80" fill="#904814"/><rect x="585.27" y="47.19" width="0.60" height="22.11" fill="#f4b686"/><rect x="590.02" y="49.24" width="0.60" height="20.06" fill="#f4b686"/><rect x="590.62" y="50.17" width="0.60" height="19.13" fill="#f4b686"/><rect x="591.22" y="51.04" width="1.00" height="18.26" fill="#f4b686"/><rect x="592.62" y="49.50" width="0.60" height="19.80" fill="#f4b686"/><rect x="593.22" y="51.09" width="1.20" height="18.21" fill="#f4b686"/><rect x="594.82" y="48.85" width="0.60" height="20.45" fill="#f4b686"/><rect x="595.62" y="51.08" width="0.30" height="18.22" fill="#f4b686"/><rect x="603.10" y="50.84" width="0.60" height="18.46" fill="#f4b686"/><rect x="603.70" y="50.70" width="0.83" height="18.60" fill="#f4b686"/><rect x="610.74" y="46.66" width="0.60" height="22.64" fill="#f4b686"/><rect x="612.74" y="47.63" width="1.00" height="21.67" fill="#f4b686"/><rect x="613.74" y="48.47" width="0.80" height="20.83" fill="#f4b686"/><rect x="614.94" y="47.65" width="0.54" height="21.65" fill="#f4b686"/><rect x="621.32" y="45.46" width="1.20" height="23.84" fill="#f4b686"/><rect x="622.72" y="47.68" width="1.20" height="21.62" fill="#f4b686"/><rect x="624.12" y="47.23" width="0.39" height="22.07" fill="#f4b686"/><rect x="629.06" y="46.46" width="1.00" height="22.84" fill="#f4b686"/><rect x="630.26" y="48.17" width="0.80" height="21.13" fill="#f4b686"/><rect x="631.46" y="49.15" width="0.80" height="20.15" fill="#f4b686"/><rect x="632.66" y="49.05" width="0.60" height="20.25" fill="#f4b686"/><rect x="633.26" y="47.83" width="1.20" height="21.47" fill="#f4b686"/><rect x="634.46" y="46.63" width="0.39" height="22.67" fill="#f4b686"/><rect x="642.16" y="50.73" width="0.80" height="18.57" fill="#f4b686"/><rect x="643.16" y="51.27" width="1.00" height="18.03" fill="#f4b686"/><rect x="650.13" y="44.44" width="0.60" height="24.86" fill="#f4b686"/><rect x="650.73" y="44.77" width="0.80" height="24.53" fill="#f4b686"/><rect x="654.53" y="46.58" width="0.80" height="22.72" fill="#f4b686"/><rect x="659.48" y="50.09" width="1.20" height="19.21" fill="#f4b686"/><rect x="668.01" y="46.24" width="1.00" height="23.06" fill="#f4b686"/><rect x="677.36" y="47.70" width="0.60" height="21.60" fill="#f4b686"/><rect x="678.36" y="47.77" width="0.80" height="21.53" fill="#f4b686"/><rect x="679.56" y="49.39" width="0.60" height="19.91" fill="#f4b686"/><rect x="680.56" y="50.11" width="1.20" height="19.19" fill="#f4b686"/><rect x="681.96" y="47.13" width="1.20" height="22.17" fill="#f4b686"/><rect x="683.36" y="48.66" width="0.37" height="20.64" fill="#f4b686"/><rect x="686.18" y="45.61" width="0.80" height="23.69" fill="#f4b686"/><rect x="686.98" y="45.69" width="0.60" height="23.61" fill="#f4b686"/><rect x="687.78" y="44.85" width="0.60" height="24.45" fill="#f4b686"/><rect x="688.38" y="44.35" width="0.80" height="24.95" fill="#f4b686"/><rect x="689.38" y="45.09" width="1.00" height="24.21" fill="#f4b686"/><rect x="696.16" y="47.30" width="1.00" height="22.00" fill="#f4b686"/><rect x="697.56" y="47.32" width="1.20" height="21.98" fill="#f4b686"/><rect x="700.16" y="47.44" width="0.80" height="21.86" fill="#f4b686"/><rect x="701.36" y="47.23" width="0.80" height="22.07" fill="#f4b686"/><rect x="580.00" y="58.20" width="128.50" height="1.40" fill="#552808" opacity="0.9"/><rect x="708.50" y="36.90" width="16.30" height="32.80" fill="#783810"/><rect x="708.50" y="36.90" width="0.80" height="32.80" fill="#904814"/><rect x="710.90" y="36.90" width="0.80" height="32.80" fill="#904814"/><rect x="712.90" y="36.90" width="1.00" height="32.80" fill="#904814"/><rect x="714.50" y="36.90" width="1.00" height="32.80" fill="#904814"/><rect x="719.60" y="36.90" width="2.00" height="32.80" fill="#552808"/><rect x="722.20" y="36.90" width="2.00" height="32.80" fill="#904814"/><rect x="711.00" y="47.11" width="1.20" height="22.19" fill="#f4b686"/><rect x="712.60" y="46.49" width="1.20" height="22.81" fill="#f4b686"/><rect x="713.80" y="46.17" width="0.20" height="23.13" fill="#f4b686"/><rect x="719.00" y="48.59" width="0.80" height="20.71" fill="#f4b686"/><rect x="719.80" y="49.42" width="1.00" height="19.88" fill="#f4b686"/><rect x="720.80" y="47.40" width="0.20" height="21.90" fill="#f4b686"/><rect x="708.50" y="58.20" width="16.30" height="1.40" fill="#552808" opacity="0.9"/><rect x="724.80" y="36.90" width="29.00" height="32.80" fill="#2c5c12"/><rect x="726.70" y="36.90" width="1.00" height="32.80" fill="#1f4a0c"/><rect x="730.20" y="36.90" width="1.30" height="32.80" fill="#1f4a0c"/><rect x="732.40" y="36.90" width="2.00" height="32.80" fill="#1f4a0c"/><rect x="737.90" y="36.90" width="2.00" height="32.80" fill="#1f4a0c"/><rect x="744.90" y="36.90" width="2.00" height="32.80" fill="#1f4a0c"/><rect x="747.50" y="36.90" width="1.30" height="32.80" fill="#3a6c1a"/><rect x="750.40" y="36.90" width="2.00" height="32.80" fill="#3a6c1a"/><rect x="726.60" y="48.74" width="0.60" height="20.56" fill="#a8dc8c"/><rect x="727.40" y="49.87" width="1.00" height="19.43" fill="#a8dc8c"/><rect x="733.60" y="46.72" width="1.20" height="22.58" fill="#a8dc8c"/><rect x="735.60" y="46.40" width="0.40" height="22.90" fill="#a8dc8c"/><rect x="738.00" y="47.73" width="1.20" height="21.57" fill="#a8dc8c"/><rect x="739.20" y="49.18" width="0.60" height="20.12" fill="#a8dc8c"/><rect x="739.80" y="46.97" width="1.00" height="22.33" fill="#a8dc8c"/><rect x="740.80" y="48.81" width="0.20" height="20.49" fill="#a8dc8c"/><rect x="743.00" y="48.83" width="0.60" height="20.47" fill="#a8dc8c"/><rect x="744.00" y="48.19" width="1.20" height="21.11" fill="#a8dc8c"/><rect x="745.60" y="50.46" width="0.40" height="18.84" fill="#a8dc8c"/><rect x="749.00" y="46.30" width="1.00" height="23.00" fill="#a8dc8c"/><rect x="750.00" y="46.40" width="1.00" height="22.90" fill="#a8dc8c"/><rect x="751.40" y="48.37" width="1.20" height="20.93" fill="#a8dc8c"/><rect x="752.80" y="46.67" width="0.20" height="22.63" fill="#a8dc8c"/><rect x="724.80" y="58.20" width="29.00" height="1.40" fill="#1f4a0c" opacity="0.9"/></svg>
<svg style="position:absolute;left:140px;top:400px;" width="780" height="230" viewBox="0 0 780 230"><rect x="53.70" y="70.00" width="102.30" height="29.80" fill="#7a6048"/><rect x="53.70" y="87.88" width="102.30" height="1.19" fill="#ecd2b6"/><rect x="53.70" y="98.01" width="102.30" height="1.79" fill="#ecd2b6"/><rect x="53.70" y="84.00" width="102.30" height="0.90" fill="#b0b8b8"/><rect x="140.10" y="70.00" width="0.80" height="29.80" fill="#9a9a9a"/><path d="M120.90 72.80 l3.6 -0.8 l0 3.9" stroke="#dadada" stroke-width="0.7" fill="none"/><path d="M120.90 72.80 l0 3.9" stroke="#dadada" stroke-width="0.7"/><ellipse cx="120.40" cy="76.70" rx="1" ry="0.8" fill="#dadada"/><ellipse cx="124.00" cy="75.90" rx="1" ry="0.8" fill="#dadada"/><text x="130.60" y="76.50" font-family="Liberation Serif" font-style="italic" font-size="5.6" fill="#cfcfcf">fx</text><text x="145.80" y="76.50" font-family="Liberation Serif" font-style="italic" font-size="5.6" fill="#cfcfcf">fx</text><rect x="33.30" y="70.00" width="0.80" height="29.80" fill="#7a6048"/><rect x="193.20" y="70.60" width="1.20" height="29.20" fill="#5a9a3a"/><rect x="214.40" y="70.60" width="311.40" height="29.20" fill="#2b5a10"/><rect x="214.40" y="87.68" width="311.40" height="1.46" fill="#8ccc6c"/><rect x="214.40" y="98.34" width="311.40" height="1.46" fill="#8ccc6c"/><rect x="214.40" y="84.31" width="311.40" height="0.90" fill="#a8a8a8"/><rect x="336.30" y="70.60" width="0.80" height="29.20" fill="#9a9a9a"/><rect x="430.90" y="70.60" width="0.80" height="29.20" fill="#9a9a9a"/><rect x="497.10" y="70.60" width="0.80" height="29.20" fill="#9a9a9a"/><path d="M316.70 73.40 l3.6 -0.8 l0 3.9" stroke="#dadada" stroke-width="0.7" fill="none"/><path d="M316.70 73.40 l0 3.9" stroke="#dadada" stroke-width="0.7"/><ellipse cx="316.20" cy="77.30" rx="1" ry="0.8" fill="#dadada"/><ellipse cx="319.80" cy="76.50" rx="1" ry="0.8" fill="#dadada"/><text x="326.10" y="77.10" font-family="Liberation Serif" font-style="italic" font-size="5.6" fill="#cfcfcf">fx</text><path d="M411.70 73.40 l3.6 -0.8 l0 3.9" stroke="#dadada" stroke-width="0.7" fill="none"/><path d="M411.70 73.40 l0 3.9" stroke="#dadada" stroke-width="0.7"/><ellipse cx="411.20" cy="77.30" rx="1" ry="0.8" fill="#dadada"/><ellipse cx="414.80" cy="76.50" rx="1" ry="0.8" fill="#dadada"/><text x="421.20" y="77.10" font-family="Liberation Serif" font-style="italic" font-size="5.6" fill="#cfcfcf">fx</text><path d="M477.60 73.40 l3.6 -0.8 l0 3.9" stroke="#dadada" stroke-width="0.7" fill="none"/><path d="M477.60 73.40 l0 3.9" stroke="#dadada" stroke-width="0.7"/><ellipse cx="477.10" cy="77.30" rx="1" ry="0.8" fill="#dadada"/><ellipse cx="480.70" cy="76.50" rx="1" ry="0.8" fill="#dadada"/><text x="486.90" y="77.10" font-family="Liberation Serif" font-style="italic" font-size="5.6" fill="#cfcfcf">fx</text><path d="M505.90 73.40 l3.6 -0.8 l0 3.9" stroke="#dadada" stroke-width="0.7" fill="none"/><path d="M505.90 73.40 l0 3.9" stroke="#dadada" stroke-width="0.7"/><ellipse cx="505.40" cy="77.30" rx="1" ry="0.8" fill="#dadada"/><ellipse cx="509.00" cy="76.50" rx="1" ry="0.8" fill="#dadada"/><text x="515.40" y="77.10" font-family="Liberation Serif" font-style="italic" font-size="5.6" fill="#cfcfcf">fx</text><path d="M228.70 95.00 a1.3 1.6 0 0 1 2.6 0 l0 1.5 l-1.3 1.6 l-1.3 -1.6Z" fill="#7a8a2a" stroke="#3a4a10" stroke-width="0.3"/><rect x="580.30" y="70.60" width="121.30" height="29.20" fill="#8c3c0a"/><rect x="580.30" y="87.24" width="121.30" height="1.46" fill="#eaa070"/><rect x="580.30" y="97.76" width="121.30" height="2.04" fill="#eaa070"/><rect x="580.30" y="84.31" width="121.30" height="0.90" fill="#a8a8a8"/><rect x="668.20" y="70.60" width="0.80" height="29.20" fill="#9a9a9a"/><path d="M649.00 73.40 l3.6 -0.8 l0 3.9" stroke="#dadada" stroke-width="0.7" fill="none"/><path d="M649.00 73.40 l0 3.9" stroke="#dadada" stroke-width="0.7"/><ellipse cx="648.50" cy="77.30" rx="1" ry="0.8" fill="#dadada"/><ellipse cx="652.10" cy="76.50" rx="1" ry="0.8" fill="#dadada"/><text x="658.30" y="77.10" font-family="Liberation Serif" font-style="italic" font-size="5.6" fill="#cfcfcf">fx</text><path d="M682.00 73.40 l3.6 -0.8 l0 3.9" stroke="#dadada" stroke-width="0.7" fill="none"/><path d="M682.00 73.40 l0 3.9" stroke="#dadada" stroke-width="0.7"/><ellipse cx="681.50" cy="77.30" rx="1" ry="0.8" fill="#dadada"/><ellipse cx="685.10" cy="76.50" rx="1" ry="0.8" fill="#dadada"/><text x="691.90" y="77.10" font-family="Liberation Serif" font-style="italic" font-size="5.6" fill="#cfcfcf">fx</text><path d="M682.90 95.00 a1.3 1.6 0 0 1 2.6 0 l0 1.5 l-1.3 1.6 l-1.3 -1.6Z" fill="#7a8a2a" stroke="#3a4a10" stroke-width="0.3"/><rect x="30.00" y="100.40" width="2.80" height="34.60" fill="#2b5a10"/><rect x="30.00" y="133.00" width="2.80" height="2.00" fill="#8ccc6c"/><rect x="33.70" y="100.40" width="11.80" height="34.60" fill="#2b5a10"/><rect x="33.70" y="117.87" width="11.30" height="3.81" fill="#8ccc6c"/><rect x="33.70" y="131.02" width="11.30" height="3.98" fill="#8ccc6c"/><rect x="45.00" y="120.29" width="0.50" height="1.00" fill="#8ccc6c"/><rect x="45.00" y="133.80" width="0.50" height="1.20" fill="#8ccc6c"/><path d="M33.70 116.32 L42.50 116.32 L45.00 130.50 L45.50 130.50" stroke="#c8c8c8" stroke-width="0.8" fill="none"/><circle cx="42.50" cy="116.32" r="0.9" fill="#d8d8d8"/><circle cx="45.00" cy="130.50" r="0.9" fill="#d8d8d8"/><rect x="34.50" y="113.92" width="4" height="4.8" fill="#1a3a0a" opacity="0.6"/><text x="35.00" y="118.12" font-family="Liberation Sans" font-size="4.8" fill="#e0e0e0">L</text><rect x="34.70" y="128.30" width="4" height="4.8" fill="#1a3a0a" opacity="0.6"/><text x="35.20" y="132.50" font-family="Liberation Sans" font-size="4.8" fill="#e0e0e0">R</text><rect x="173.00" y="100.40" width="41.30" height="34.60" fill="#2b5a10"/><rect x="173.00" y="117.87" width="0.00" height="3.81" fill="#8ccc6c"/><rect x="173.00" y="131.02" width="0.00" height="3.98" fill="#8ccc6c"/><rect x="173.00" y="117.87" width="41.30" height="3.81" fill="#8ccc6c"/><rect x="173.00" y="131.02" width="41.30" height="3.98" fill="#8ccc6c"/><rect x="175.50" y="115.82" width="38.80" height="1.00" fill="#a8a8a8"/><path d="M173.50 133.50 L175.80 116.32" stroke="#c8c8c8" stroke-width="0.6"/><rect x="173.80" y="113.92" width="4" height="4.8" fill="#1a3a0a" opacity="0.6"/><text x="174.30" y="118.12" font-family="Liberation Sans" font-size="4.8" fill="#e0e0e0">L</text><rect x="174.00" y="128.30" width="4" height="4.8" fill="#1a3a0a" opacity="0.6"/><text x="174.50" y="132.50" font-family="Liberation Sans" font-size="4.8" fill="#e0e0e0">R</text><path d="M194.60 103.20 l3.6 -0.8 l0 3.9" stroke="#dadada" stroke-width="0.7" fill="none"/><path d="M194.60 103.20 l0 3.9" stroke="#dadada" stroke-width="0.7"/><ellipse cx="194.10" cy="107.10" rx="1" ry="0.8" fill="#dadada"/><ellipse cx="197.70" cy="106.30" rx="1" ry="0.8" fill="#dadada"/><text x="204.40" y="106.90" font-family="Liberation Serif" font-style="italic" font-size="5.6" fill="#cfcfcf">fx</text><path d="M187.20 131.00 a1.3 1.6 0 0 1 2.6 0 l0 1.5 l-1.3 1.6 l-1.3 -1.6Z" fill="#7a8a2a" stroke="#3a4a10" stroke-width="0.3"/><rect x="694.50" y="100.40" width="58.50" height="34.60" fill="#2b5a10"/><rect x="694.50" y="117.87" width="0.00" height="3.81" fill="#8ccc6c"/><rect x="694.50" y="131.02" width="0.00" height="3.98" fill="#8ccc6c"/><rect x="694.50" y="117.87" width="58.50" height="3.81" fill="#8ccc6c"/><rect x="694.50" y="131.02" width="58.50" height="3.98" fill="#8ccc6c"/><rect x="697.00" y="115.82" width="56.00" height="1.00" fill="#a8a8a8"/><path d="M695.00 133.50 L697.30 116.32" stroke="#c8c8c8" stroke-width="0.6"/><rect x="695.30" y="113.92" width="4" height="4.8" fill="#1a3a0a" opacity="0.6"/><text x="695.80" y="118.12" font-family="Liberation Sans" font-size="4.8" fill="#e0e0e0">L</text><rect x="695.50" y="128.30" width="4" height="4.8" fill="#1a3a0a" opacity="0.6"/><text x="696.00" y="132.50" font-family="Liberation Sans" font-size="4.8" fill="#e0e0e0">R</text><path d="M735.00 103.20 l3.6 -0.8 l0 3.9" stroke="#dadada" stroke-width="0.7" fill="none"/><path d="M735.00 103.20 l0 3.9" stroke="#dadada" stroke-width="0.7"/><ellipse cx="734.50" cy="107.10" rx="1" ry="0.8" fill="#dadada"/><ellipse cx="738.10" cy="106.30" rx="1" ry="0.8" fill="#dadada"/><text x="744.40" y="106.90" font-family="Liberation Serif" font-style="italic" font-size="5.6" fill="#cfcfcf">fx</text><path d="M709.00 131.00 a1.3 1.6 0 0 1 2.6 0 l0 1.5 l-1.3 1.6 l-1.3 -1.6Z" fill="#7a8a2a" stroke="#3a4a10" stroke-width="0.3"/><path d="M724.00 131.00 a1.3 1.6 0 0 1 2.6 0 l0 1.5 l-1.3 1.6 l-1.3 -1.6Z" fill="#7a8a2a" stroke="#3a4a10" stroke-width="0.3"/><rect x="5.50" y="135.50" width="54.50" height="37.50" fill="#2b5a10"/><rect x="5.50" y="154.44" width="27.50" height="4.12" fill="#8ccc6c"/><rect x="5.50" y="168.69" width="27.50" height="4.31" fill="#8ccc6c"/><rect x="33.00" y="157.06" width="27.00" height="1.00" fill="#8ccc6c"/><rect x="33.00" y="171.80" width="27.00" height="1.20" fill="#8ccc6c"/><path d="M5.50 152.75 L28.60 152.75 L33.00 168.50 L60.00 168.50" stroke="#c8c8c8" stroke-width="0.8" fill="none"/><circle cx="28.60" cy="152.75" r="0.9" fill="#d8d8d8"/><circle cx="33.00" cy="168.50" r="0.9" fill="#d8d8d8"/><rect x="6.30" y="150.35" width="4" height="4.8" fill="#1a3a0a" opacity="0.6"/><text x="6.80" y="154.55" font-family="Liberation Sans" font-size="4.8" fill="#e0e0e0">L</text><rect x="6.50" y="166.30" width="4" height="4.8" fill="#1a3a0a" opacity="0.6"/><text x="7.00" y="170.50" font-family="Liberation Sans" font-size="4.8" fill="#e0e0e0">R</text><path d="M40.70 138.30 l3.6 -0.8 l0 3.9" stroke="#dadada" stroke-width="0.7" fill="none"/><path d="M40.70 138.30 l0 3.9" stroke="#dadada" stroke-width="0.7"/><ellipse cx="40.20" cy="142.20" rx="1" ry="0.8" fill="#dadada"/><ellipse cx="43.80" cy="141.40" rx="1" ry="0.8" fill="#dadada"/><text x="50.40" y="142.00" font-family="Liberation Serif" font-style="italic" font-size="5.6" fill="#cfcfcf">fx</text><path d="M20.40 169.00 a1.3 1.6 0 0 1 2.6 0 l0 1.5 l-1.3 1.6 l-1.3 -1.6Z" fill="#7a8a2a" stroke="#3a4a10" stroke-width="0.3"/><rect x="156.30" y="135.50" width="21.70" height="37.50" fill="#2b5a10"/><rect x="156.30" y="154.44" width="20.90" height="4.12" fill="#8ccc6c"/><rect x="156.30" y="168.69" width="20.90" height="4.31" fill="#8ccc6c"/><rect x="177.20" y="157.06" width="0.80" height="1.00" fill="#8ccc6c"/><rect x="177.20" y="171.80" width="0.80" height="1.20" fill="#8ccc6c"/><path d="M156.30 152.75 L173.00 152.75 L177.20 168.50 L178.00 168.50" stroke="#c8c8c8" stroke-width="0.8" fill="none"/><circle cx="173.00" cy="152.75" r="0.9" fill="#d8d8d8"/><circle cx="177.20" cy="168.50" r="0.9" fill="#d8d8d8"/><rect x="157.10" y="150.35" width="4" height="4.8" fill="#1a3a0a" opacity="0.6"/><text x="157.60" y="154.55" font-family="Liberation Sans" font-size="4.8" fill="#e0e0e0">L</text><rect x="157.30" y="166.30" width="4" height="4.8" fill="#1a3a0a" opacity="0.6"/><text x="157.80" y="170.50" font-family="Liberation Sans" font-size="4.8" fill="#e0e0e0">R</text><text x="164.90" y="142.00" font-family="Liberation Serif" font-style="italic" font-size="5.6" fill="#cfcfcf">fx</text><rect x="42.00" y="173.80" width="11.80" height="19.70" fill="#2b5a10"/><rect x="42.00" y="184.50" width="11.80" height="2.00" fill="#8ccc6c"/><rect x="42.00" y="190.80" width="11.80" height="2.70" fill="#8ccc6c"/><path d="M43.00 183.50 L52.50 183.50" stroke="#c8c8c8" stroke-width="0.6"/></svg>
<div style="left:900px;top:361.8px;width:6.4px;height:72.6px;background:#474747;border-radius:1px"></div>
<div style="left:900px;top:437.2px;width:6.4px;height:180.4px;background:#474747;border-radius:1px"></div>
<div style="left:899.90px;top:367.70px;width:6.6px;height:6.6px;border-radius:50%;border:1.3px solid #d8d8d8;background:#111"></div>
<div style="left:899.90px;top:426.70px;width:6.6px;height:6.6px;border-radius:50%;border:1.3px solid #d8d8d8;background:#111"></div>
<div style="left:899.90px;top:438.50px;width:6.6px;height:6.6px;border-radius:50%;border:1.3px solid #d8d8d8;background:#111"></div>
<div style="left:899.90px;top:596.90px;width:6.6px;height:6.6px;border-radius:50%;border:1.3px solid #d8d8d8;background:#111"></div>
<div style="left:50px;top:619.6px;width:853px;height:6.2px;background:#2e2e2e"></div>
<div style="left:50px;top:619.6px;width:540px;height:6.2px;background:#474747"></div>
<div style="left:49.70px;top:619.40px;width:6.6px;height:6.6px;border-radius:50%;border:1.3px solid #d8d8d8;background:#111"></div>
<div style="left:586.90px;top:619.40px;width:6.6px;height:6.6px;border-radius:50%;border:1.3px solid #d8d8d8;background:#111"></div>
<div style="left:146px;top:599px;width:751.6px;height:1.1px;background:#a8a8a8"></div>
<div style="left:502.9px;top:352px;width:0.8px;height:267px;background:#3a8ee0"></div>
<svg style="position:absolute;left:500.1px;top:351.5px;" width="6.5" height="7" viewBox="0 0 6.5 7"><path d="M0.3 0.3 L6.2 0.3 L6.2 4.6 L3.25 6.8 L0.3 4.6Z" fill="#3a8ee8"/><rect x="1.8" y="1.4" width="0.8" height="3" fill="#bfe0ff"/><rect x="3.9" y="1.4" width="0.8" height="3" fill="#bfe0ff"/></svg></div></div></body></html>
